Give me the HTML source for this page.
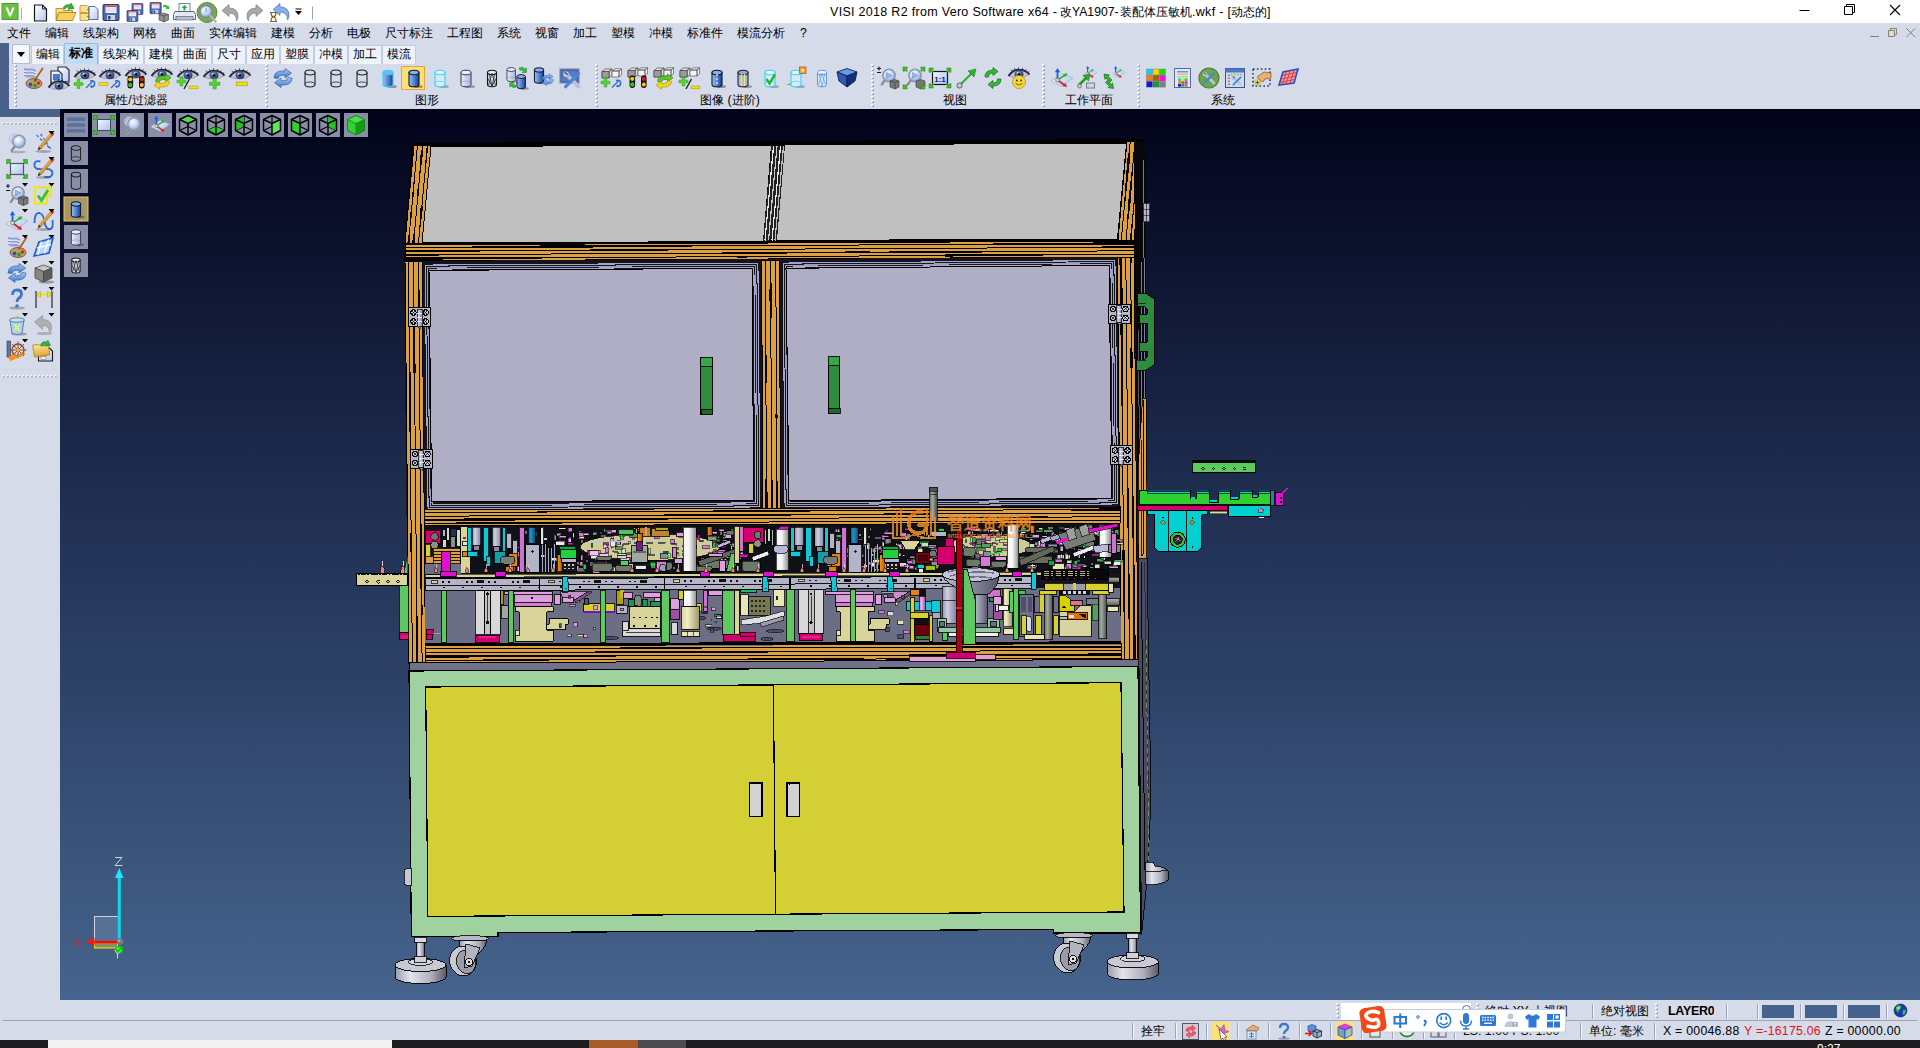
<!DOCTYPE html>
<html lang="zh"><head><meta charset="utf-8"><title>VISI 2018 R2</title><style>
html,body{margin:0;padding:0}
body{width:1920px;height:1048px;position:relative;overflow:hidden;background:#d6dbe9;font-family:"Liberation Sans",sans-serif;font-size:12px}
.b{position:absolute}
.t{position:absolute;white-space:nowrap;overflow:hidden;line-height:1.25}
.grip{width:3px;background-image:repeating-linear-gradient(to bottom,#f6f8fc 0,#f6f8fc 2px,transparent 2px,transparent 4px),repeating-linear-gradient(to bottom,#9aa2ba 0,#9aa2ba 2px,transparent 2px,transparent 4px);background-size:2px 100%,2px 100%;background-position:0 0,1px 1px;background-repeat:no-repeat}
</style></head>
<body>
<svg class="b" style="left:0;top:0" width="1920" height="1048" viewBox="0 0 1920 1048" shape-rendering="crispEdges">
<defs>
<linearGradient id="bgv" x1="0" y1="109" x2="0" y2="1000" gradientUnits="userSpaceOnUse">
<stop offset="0" stop-color="#02031a"/><stop offset="0.5" stop-color="#243458"/><stop offset="1" stop-color="#46648d"/></linearGradient>
<linearGradient id="wm" x1="0" y1="0" x2="0" y2="1"><stop offset="0" stop-color="#f07820"/><stop offset="1" stop-color="#f0a020"/></linearGradient>
<linearGradient id="cylw" x1="0" y1="0" x2="1" y2="0"><stop offset="0" stop-color="#f4f4f4"/><stop offset="0.45" stop-color="#f8f8f8"/><stop offset="1" stop-color="#8c8c8c"/></linearGradient>
<linearGradient id="cyll" x1="0" y1="0" x2="1" y2="0"><stop offset="0" stop-color="#9090a8"/><stop offset="0.35" stop-color="#d0d0e4"/><stop offset="1" stop-color="#8484a0"/></linearGradient>
<linearGradient id="cylg" x1="0" y1="0" x2="1" y2="0"><stop offset="0" stop-color="#b8b8cc"/><stop offset="0.5" stop-color="#8a8aa0"/><stop offset="1" stop-color="#55556a"/></linearGradient>
<linearGradient id="cylb" x1="0" y1="0" x2="1" y2="0"><stop offset="0" stop-color="#1060a0"/><stop offset="0.4" stop-color="#2090c8"/><stop offset="1" stop-color="#0c4878"/></linearGradient>
<linearGradient id="cylo" x1="0" y1="0" x2="1" y2="0"><stop offset="0" stop-color="#f09020"/><stop offset="0.5" stop-color="#e07808"/><stop offset="1" stop-color="#8a4800"/></linearGradient>
<linearGradient id="cylc" x1="0" y1="0" x2="1" y2="0"><stop offset="0" stop-color="#d8d4a0"/><stop offset="0.35" stop-color="#f0ecc0"/><stop offset="1" stop-color="#989468"/></linearGradient>
<linearGradient id="cylp" x1="0" y1="0" x2="1" y2="0"><stop offset="0" stop-color="#c880c8"/><stop offset="0.4" stop-color="#f0b0f0"/><stop offset="1" stop-color="#a060a0"/></linearGradient>
<linearGradient id="cyld" x1="0" y1="0" x2="1" y2="0"><stop offset="0" stop-color="#606860"/><stop offset="0.4" stop-color="#a0a8a0"/><stop offset="1" stop-color="#484c48"/></linearGradient>
<linearGradient id="cylh" x1="0" y1="0" x2="0" y2="1"><stop offset="0" stop-color="#b0b4b0"/><stop offset="0.5" stop-color="#888c88"/><stop offset="1" stop-color="#505450"/></linearGradient>
<linearGradient id="cyl" x1="0" y1="0" x2="1" y2="0"><stop offset="0" stop-color="#9a9aa8"/><stop offset="0.3" stop-color="#e4e4ee"/><stop offset="0.7" stop-color="#b0b0be"/><stop offset="1" stop-color="#5c5c68"/></linearGradient>
</defs>
<rect x="60" y="109" width="1860" height="891" fill="url(#bgv)" />
<polygon points="412,143 1145,139 1146,262 404,262" fill="#000" /><polygon points="431,147 771,145.5 763,241 422,242.5" fill="#c0c0c0" /><polygon points="785,145.5 1126,143.5 1117,238.5 777,240" fill="#c0c0c0" /><polygon points="771.5,145.5 785,145.5 777,240 763,241" fill="#222" /><line x1="773.5" y1="146" x2="765" y2="240.5" stroke="#e8e8e8" stroke-width="1.2" /><line x1="777.0" y1="146" x2="768.5" y2="240.5" stroke="#c8c8c8" stroke-width="1.2" /><line x1="780.5" y1="146" x2="772" y2="240.5" stroke="#e8e8e8" stroke-width="1.2" /><line x1="783.5" y1="146" x2="775" y2="240.5" stroke="#bdbdbd" stroke-width="1.2" /><polygon points="414,145 405,243 422,243 431,146" fill="#dca042" stroke="#000" stroke-width="1" /><polygon points="417.5,145.2 411.7,199.5 413.3,199.5" fill="#000" /><polygon points="412.5,199.5 409.5,217.7 412.2,217.8" fill="#000" /><polygon points="410.8,217.8 407.4,243.0 409.6,243.0" fill="#000" /><line x1="417.5" y1="145.2" x2="408.5" y2="243.0" stroke="#000" stroke-width="1" /><polygon points="422.5,145.5 420.1,157.4 422.7,157.5" fill="#000" /><polygon points="420.3,157.4 422.5,157.5 418.5,189.0" fill="#000" /><polygon points="417.5,189.0 419.4,189.0 415.6,220.4" fill="#000" /><polygon points="415.6,220.4 412.1,243.0 414.9,243.0" fill="#000" /><line x1="422.5" y1="145.5" x2="413.5" y2="243.0" stroke="#000" stroke-width="1" /><polygon points="426.7,145.7 428.3,145.8 421.9,206.0" fill="#000" /><polygon points="420.6,206.0 423.2,206.1 418.5,243.0" fill="#000" /><line x1="427.5" y1="145.8" x2="418.5" y2="243.0" stroke="#000" stroke-width="1" /><polygon points="1127,141 1118,240 1134,240 1143,141" fill="#dca042" stroke="#000" stroke-width="1" /><polygon points="1130.3,141.0 1127.7,158.2 1129.8,158.2" fill="#000" /><polygon points="1127.4,158.2 1130.1,158.2 1121.3,240.0" fill="#000" /><line x1="1130.3" y1="141.0" x2="1121.3" y2="240.0" stroke="#000" stroke-width="1" /><polygon points="1135.0,141.0 1128.5,198.9 1130.9,198.9" fill="#000" /><polygon points="1129.7,198.9 1128.6,199.0 1130.8,199.0" fill="#000" /><polygon points="1128.4,199.0 1131.0,199.0 1126.0,240.0" fill="#000" /><line x1="1135.0" y1="141.0" x2="1126.0" y2="240.0" stroke="#000" stroke-width="1" /><polygon points="1139.7,141.0 1134.6,186.1 1136.6,186.1" fill="#000" /><polygon points="1135.6,186.1 1134.1,194.0 1135.7,194.0" fill="#000" /><polygon points="1134.9,194.0 1129.7,240.0 1131.7,240.0" fill="#000" /><line x1="1139.7" y1="141.0" x2="1130.7" y2="240.0" stroke="#000" stroke-width="1" /><polygon points="405,245 1134,241 1134,257 405,261" fill="#dca042" stroke="#000" stroke-width="1" /><polygon points="405.0,247.5 554.0,245.3 554.0,248.2" fill="#000" /><polygon points="554.0,245.5 554.0,247.9 823.5,245.2" fill="#000" /><polygon points="823.5,245.2 1134.0,242.1 1134.0,245.0" fill="#000" /><line x1="405.0" y1="247.5" x2="1134.0" y2="243.5" stroke="#000" stroke-width="1" /><polygon points="405.0,250.0 405.0,252.4 589.7,250.2" fill="#000" /><polygon points="589.7,249.1 589.7,251.2 896.1,248.5" fill="#000" /><polygon points="896.1,248.5 1134.0,246.2 1134.0,248.1" fill="#000" /><line x1="405.0" y1="251.2" x2="1134.0" y2="247.2" stroke="#000" stroke-width="1" /><polygon points="405.0,253.5 405.0,256.1 515.2,254.2" fill="#000" /><polygon points="515.2,254.2 869.5,251.3 869.5,253.3" fill="#000" /><polygon points="869.5,252.3 910.2,250.6 910.2,253.5" fill="#000" /><polygon points="910.2,250.7 910.2,253.3 1134.0,250.8" fill="#000" /><line x1="405.0" y1="254.8" x2="1134.0" y2="250.8" stroke="#000" stroke-width="1" /><polygon points="405.0,257.0 405.0,259.9 708.2,256.8" fill="#000" /><polygon points="708.2,256.8 737.2,255.8 737.2,257.5" fill="#000" /><polygon points="737.2,255.7 737.2,257.6 945.0,255.5" fill="#000" /><polygon points="945.0,254.4 945.0,256.6 1134.0,254.5" fill="#000" /><line x1="405.0" y1="258.5" x2="1134.0" y2="254.5" stroke="#000" stroke-width="1" /><polygon points="404,261 1136,257 1140,664 408,664" fill="#14141f" /><polygon points="405,261 409,663 425.5,663 422,261" fill="#dca042" stroke="#000" stroke-width="1" /><polygon points="408.5,261.0 408.7,398.7 411.0,398.7" fill="#000" /><polygon points="409.0,398.7 410.6,398.7 411.1,533.1" fill="#000" /><polygon points="410.2,533.1 412.1,533.1 412.4,663.0" fill="#000" /><line x1="408.5" y1="261.0" x2="412.4" y2="663.0" stroke="#000" stroke-width="1" /><polygon points="413.5,261.0 413.4,372.6 415.7,372.6" fill="#000" /><polygon points="414.5,372.6 416.4,663.0 418.1,663.0" fill="#000" /><line x1="413.5" y1="261.0" x2="417.2" y2="663.0" stroke="#000" stroke-width="1" /><polygon points="418.5,261.0 417.7,309.4 420.2,309.4" fill="#000" /><polygon points="418.9,309.4 420.6,604.5 422.5,604.5" fill="#000" /><polygon points="420.6,604.5 422.6,604.5 422.1,663.0" fill="#000" /><line x1="418.5" y1="261.0" x2="422.1" y2="663.0" stroke="#000" stroke-width="1" /><polygon points="1117.5,257 1121,662 1138,662 1134,257" fill="#dca042" stroke="#000" stroke-width="1" /><polygon points="1119.4,257.0 1122.4,257.0 1123.4,537.8" fill="#000" /><polygon points="1123.4,537.8 1122.1,555.1 1125.0,555.1" fill="#000" /><polygon points="1122.4,555.1 1124.7,555.1 1124.5,662.0" fill="#000" /><line x1="1120.9" y1="257.0" x2="1124.5" y2="662.0" stroke="#000" stroke-width="1" /><polygon points="1125.8,257.0 1127.9,589.4 1129.7,589.4" fill="#000" /><polygon points="1127.8,589.4 1129.8,589.4 1129.5,662.0" fill="#000" /><line x1="1125.8" y1="257.0" x2="1129.5" y2="662.0" stroke="#000" stroke-width="1" /><polygon points="1129.6,257.0 1131.6,257.0 1131.0,301.7" fill="#000" /><polygon points="1131.0,301.7 1130.3,367.7 1133.0,367.7" fill="#000" /><polygon points="1131.7,367.7 1133.1,662.0 1135.9,662.0" fill="#000" /><line x1="1130.6" y1="257.0" x2="1134.5" y2="662.0" stroke="#000" stroke-width="1" /><polygon points="761.5,260 763,511 780.5,511 779.5,260" fill="#dca042" stroke="#000" stroke-width="1" /><polygon points="765.2,260.0 764.9,382.5 766.9,382.5" fill="#000" /><polygon points="765.9,382.5 765.4,511.0 767.8,511.0" fill="#000" /><line x1="765.2" y1="260.0" x2="766.6" y2="511.0" stroke="#000" stroke-width="1" /><polygon points="770.5,260.0 769.5,289.5 771.8,289.5" fill="#000" /><polygon points="769.2,289.5 772.1,289.5 770.9,349.2" fill="#000" /><polygon points="770.9,349.2 770.6,511.0 772.9,511.0" fill="#000" /><line x1="770.5" y1="260.0" x2="771.8" y2="511.0" stroke="#000" stroke-width="1" /><polygon points="775.8,260.0 775.6,407.6 777.3,407.6" fill="#000" /><polygon points="776.4,407.6 775.0,418.2 778.0,418.2" fill="#000" /><polygon points="776.5,418.2 775.8,511.0 778.0,511.0" fill="#000" /><line x1="775.8" y1="260.0" x2="776.9" y2="511.0" stroke="#000" stroke-width="1" /><polygon points="424,264 759,262 761,508 427,510" fill="#15151f" /><polygon points="425.1,265.1 757.9,263.1 759.9,506.9 428.1,508.9" fill="none" stroke="#a4a4c4" stroke-width="1.1" /><polygon points="427.2,267.2 755.8,265.2 757.8,504.8 430.2,506.8" fill="none" stroke="#9c9cbc" stroke-width="1.1" /><polygon points="429.1,269.1 753.9,267.1 755.9,502.9 432.1,504.9" fill="none" stroke="#a8a8c8" stroke-width="1.1" /><polygon points="782,262 1116,259.5 1119,505 784,508" fill="#15151f" /><polygon points="783.1,263.1 1114.9,260.6 1117.9,503.9 785.1,506.9" fill="none" stroke="#a4a4c4" stroke-width="1.1" /><polygon points="785.2,265.2 1112.8,262.7 1115.8,501.8 787.2,504.8" fill="none" stroke="#9c9cbc" stroke-width="1.1" /><polygon points="787.1,267.1 1110.9,264.6 1113.9,499.9 789.1,502.9" fill="none" stroke="#a8a8c8" stroke-width="1.1" /><polygon points="429,270.4 752,268.3 753.7,500 431.7,502" fill="#b0aec4" stroke="#000" stroke-width="1" /><polygon points="786,268.3 1109,265.4 1112,498 789,500.8" fill="#b0aec4" stroke="#000" stroke-width="1" /><rect x="700.8" y="357" width="11.5" height="57.5" fill="#2e8c3c" stroke="#000" stroke-width="1" /><rect x="700.8" y="357" width="11.5" height="9" fill="#3aa64a" stroke="#000" stroke-width="0.8" /><rect x="701.3" y="409" width="11.5" height="5.5" fill="#1f6a2a" stroke="#000" stroke-width="0.8" /><rect x="828" y="356" width="11.5" height="57.5" fill="#2e8c3c" stroke="#000" stroke-width="1" /><rect x="828" y="356" width="11.5" height="9" fill="#3aa64a" stroke="#000" stroke-width="0.8" /><rect x="828.5" y="408" width="11.5" height="5.5" fill="#1f6a2a" stroke="#000" stroke-width="0.8" /><rect x="408.8" y="307.5" width="21.5" height="19" fill="#b6b6ca" stroke="#000" stroke-width="1" /><circle cx="413.4" cy="312.5" r="2.7" fill="#c8c8d8" stroke="#000" stroke-width="1"/><path d="M411.8 310.9l3.2 3.2m0 -3.2l-3.2 3.2" stroke="#000" stroke-width=".7"/><circle cx="425.8" cy="312.5" r="2.7" fill="#c8c8d8" stroke="#000" stroke-width="1"/><path d="M424.2 310.9l3.2 3.2m0 -3.2l-3.2 3.2" stroke="#000" stroke-width=".7"/><circle cx="413.4" cy="321.5" r="2.7" fill="#c8c8d8" stroke="#000" stroke-width="1"/><path d="M411.8 319.9l3.2 3.2m0 -3.2l-3.2 3.2" stroke="#000" stroke-width=".7"/><circle cx="425.8" cy="321.5" r="2.7" fill="#c8c8d8" stroke="#000" stroke-width="1"/><path d="M424.2 319.9l3.2 3.2m0 -3.2l-3.2 3.2" stroke="#000" stroke-width=".7"/><rect x="417.0" y="309.0" width="5" height="17" fill="url(#cyll)" stroke="#000" stroke-width="0.7" /><line x1="417.0" y1="313.0" x2="422.0" y2="313.0" stroke="#f0f0f8" stroke-width="0.9" /><line x1="417.0" y1="317.0" x2="422.0" y2="317.0" stroke="#f0f0f8" stroke-width="0.9" /><line x1="417.0" y1="321.0" x2="422.0" y2="321.0" stroke="#f0f0f8" stroke-width="0.9" /><polygon points="417.0,326.0 422.0,326.0 419.8,329.0" fill="#8888a0" stroke="#000" stroke-width="0.6" /><rect x="410.5" y="449" width="21.5" height="19" fill="#b6b6ca" stroke="#000" stroke-width="1" /><circle cx="415.1" cy="454" r="2.7" fill="#c8c8d8" stroke="#000" stroke-width="1"/><path d="M413.5 452.4l3.2 3.2m0 -3.2l-3.2 3.2" stroke="#000" stroke-width=".7"/><circle cx="427.5" cy="454" r="2.7" fill="#c8c8d8" stroke="#000" stroke-width="1"/><path d="M425.9 452.4l3.2 3.2m0 -3.2l-3.2 3.2" stroke="#000" stroke-width=".7"/><circle cx="415.1" cy="463" r="2.7" fill="#c8c8d8" stroke="#000" stroke-width="1"/><path d="M413.5 461.4l3.2 3.2m0 -3.2l-3.2 3.2" stroke="#000" stroke-width=".7"/><circle cx="427.5" cy="463" r="2.7" fill="#c8c8d8" stroke="#000" stroke-width="1"/><path d="M425.9 461.4l3.2 3.2m0 -3.2l-3.2 3.2" stroke="#000" stroke-width=".7"/><rect x="418.7" y="450.5" width="5" height="17" fill="url(#cyll)" stroke="#000" stroke-width="0.7" /><line x1="418.7" y1="454.5" x2="423.7" y2="454.5" stroke="#f0f0f8" stroke-width="0.9" /><line x1="418.7" y1="458.5" x2="423.7" y2="458.5" stroke="#f0f0f8" stroke-width="0.9" /><line x1="418.7" y1="462.5" x2="423.7" y2="462.5" stroke="#f0f0f8" stroke-width="0.9" /><polygon points="418.7,467.5 423.7,467.5 421.5,470.5" fill="#8888a0" stroke="#000" stroke-width="0.6" /><rect x="1108.5" y="304" width="21.5" height="19" fill="#b6b6ca" stroke="#000" stroke-width="1" /><circle cx="1113.1" cy="309" r="2.7" fill="#c8c8d8" stroke="#000" stroke-width="1"/><path d="M1111.5 307.4l3.2 3.2m0 -3.2l-3.2 3.2" stroke="#000" stroke-width=".7"/><circle cx="1125.5" cy="309" r="2.7" fill="#c8c8d8" stroke="#000" stroke-width="1"/><path d="M1123.9 307.4l3.2 3.2m0 -3.2l-3.2 3.2" stroke="#000" stroke-width=".7"/><circle cx="1113.1" cy="318" r="2.7" fill="#c8c8d8" stroke="#000" stroke-width="1"/><path d="M1111.5 316.4l3.2 3.2m0 -3.2l-3.2 3.2" stroke="#000" stroke-width=".7"/><circle cx="1125.5" cy="318" r="2.7" fill="#c8c8d8" stroke="#000" stroke-width="1"/><path d="M1123.9 316.4l3.2 3.2m0 -3.2l-3.2 3.2" stroke="#000" stroke-width=".7"/><rect x="1116.7" y="305.5" width="5" height="17" fill="url(#cyll)" stroke="#000" stroke-width="0.7" /><line x1="1116.7" y1="309.5" x2="1121.7" y2="309.5" stroke="#f0f0f8" stroke-width="0.9" /><line x1="1116.7" y1="313.5" x2="1121.7" y2="313.5" stroke="#f0f0f8" stroke-width="0.9" /><line x1="1116.7" y1="317.5" x2="1121.7" y2="317.5" stroke="#f0f0f8" stroke-width="0.9" /><polygon points="1116.7,322.5 1121.7,322.5 1119.5,325.5" fill="#8888a0" stroke="#000" stroke-width="0.6" /><rect x="1110.5" y="445.5" width="21.5" height="19" fill="#b6b6ca" stroke="#000" stroke-width="1" /><circle cx="1115.1" cy="450.5" r="2.7" fill="#c8c8d8" stroke="#000" stroke-width="1"/><path d="M1113.5 448.9l3.2 3.2m0 -3.2l-3.2 3.2" stroke="#000" stroke-width=".7"/><circle cx="1127.5" cy="450.5" r="2.7" fill="#c8c8d8" stroke="#000" stroke-width="1"/><path d="M1125.9 448.9l3.2 3.2m0 -3.2l-3.2 3.2" stroke="#000" stroke-width=".7"/><circle cx="1115.1" cy="459.5" r="2.7" fill="#c8c8d8" stroke="#000" stroke-width="1"/><path d="M1113.5 457.9l3.2 3.2m0 -3.2l-3.2 3.2" stroke="#000" stroke-width=".7"/><circle cx="1127.5" cy="459.5" r="2.7" fill="#c8c8d8" stroke="#000" stroke-width="1"/><path d="M1125.9 457.9l3.2 3.2m0 -3.2l-3.2 3.2" stroke="#000" stroke-width=".7"/><rect x="1118.7" y="447.0" width="5" height="17" fill="url(#cyll)" stroke="#000" stroke-width="0.7" /><line x1="1118.7" y1="451.0" x2="1123.7" y2="451.0" stroke="#f0f0f8" stroke-width="0.9" /><line x1="1118.7" y1="455.0" x2="1123.7" y2="455.0" stroke="#f0f0f8" stroke-width="0.9" /><line x1="1118.7" y1="459.0" x2="1123.7" y2="459.0" stroke="#f0f0f8" stroke-width="0.9" /><polygon points="1118.7,464.0 1123.7,464.0 1121.5,467.0" fill="#8888a0" stroke="#000" stroke-width="0.6" /><polygon points="424,510 1120,507 1120,523 424,526" fill="#dca042" stroke="#000" stroke-width="1" /><polygon points="424.0,511.7 424.0,513.4 713.4,511.3" fill="#000" /><polygon points="713.4,510.4 713.4,512.2 1021.4,510.0" fill="#000" /><polygon points="1021.4,510.0 1120.0,508.1 1120.0,511.0" fill="#000" /><line x1="424.0" y1="512.5" x2="1120.0" y2="509.5" stroke="#000" stroke-width="1" /><polygon points="424.0,516.2 735.1,514.0 735.1,515.7" fill="#000" /><polygon points="735.1,513.7 735.1,515.9 1120.0,513.2" fill="#000" /><line x1="424.0" y1="516.2" x2="1120.0" y2="513.2" stroke="#000" stroke-width="1" /><polygon points="424.0,518.6 424.0,521.1 1021.1,517.2" fill="#000" /><polygon points="1021.1,516.4 1021.1,518.1 1120.0,516.8" fill="#000" /><line x1="424.0" y1="519.8" x2="1120.0" y2="516.8" stroke="#000" stroke-width="1" /><polygon points="424.0,522.6 424.0,524.3 1037.2,520.8" fill="#000" /><polygon points="1037.2,520.8 1120.0,519.5 1120.0,521.5" fill="#000" /><line x1="424.0" y1="523.5" x2="1120.0" y2="520.5" stroke="#000" stroke-width="1" /><polygon points="425,646 1121,644 1121,661 425,663" fill="#dca042" stroke="#000" stroke-width="1" /><polygon points="425.0,648.7 700.8,647.0 700.8,648.8" fill="#000" /><polygon points="700.8,647.0 700.8,648.8 703.6,647.9" fill="#000" /><polygon points="703.6,647.9 1121.0,645.6 1121.0,647.9" fill="#000" /><line x1="425.0" y1="648.7" x2="1121.0" y2="646.7" stroke="#000" stroke-width="1" /><polygon points="425.0,652.6 750.2,650.5 750.2,652.8" fill="#000" /><polygon points="750.2,650.7 750.2,652.6 1121.0,650.6" fill="#000" /><line x1="425.0" y1="652.6" x2="1121.0" y2="650.6" stroke="#000" stroke-width="1" /><polygon points="425.0,655.1 425.0,657.8 764.7,655.5" fill="#000" /><polygon points="764.7,655.5 1121.0,653.3 1121.0,655.6" fill="#000" /><line x1="425.0" y1="656.4" x2="1121.0" y2="654.4" stroke="#000" stroke-width="1" /><polygon points="425.0,660.3 548.7,658.6 548.7,661.3" fill="#000" /><polygon points="548.7,659.9 863.7,657.7 863.7,660.4" fill="#000" /><polygon points="863.7,659.0 898.8,658.1 898.8,659.8" fill="#000" /><polygon points="898.8,658.1 898.8,659.8 1121.0,658.3" fill="#000" /><line x1="425.0" y1="660.3" x2="1121.0" y2="658.3" stroke="#000" stroke-width="1" /><polygon points="409,663 1139,659.5 1139.5,667 409,671.5" fill="#717189" stroke="#000" stroke-width="1" />
<polygon points="425,590.6 1120,587.5 1121,644.5 425.5,646.5" fill="#6c6e86" /><ellipse cx="714" cy="628.6" rx="8" ry="1.6" fill="#4a4c64" stroke="#000" stroke-width=".5"/><ellipse cx="702" cy="618" rx="4" ry="1.6" fill="#4a4c64" stroke="#000" stroke-width=".5"/><ellipse cx="610" cy="638" rx="9" ry="1.6" fill="#4a4c64" stroke="#000" stroke-width=".5"/><ellipse cx="775" cy="631" rx="9" ry="1.6" fill="#4a4c64" stroke="#000" stroke-width=".5"/><ellipse cx="767" cy="639" rx="6" ry="1.6" fill="#4a4c64" stroke="#000" stroke-width=".5"/><rect x="426" y="629.8" width="7" height="4.2" fill="#d4006e" stroke="#000" stroke-width="0.8" /><rect x="426" y="634.5" width="6" height="4.5" fill="#d4006e" stroke="#000" stroke-width="0.8" /><line x1="433" y1="634" x2="441" y2="633" stroke="#a0a0b8" stroke-width="0.8" /><rect x="441.7" y="590.7" width="5.0" height="52.1" fill="#60c860" stroke="#000" stroke-width="0.8" /><rect x="475" y="590.7" width="9.5" height="44.1" fill="#d8d8d8" stroke="#000" stroke-width="0.8" /><rect x="484.5" y="590.7" width="6.2" height="44.1" fill="#c4c4c8" stroke="#000" stroke-width="0.8" /><rect x="490.7" y="590.7" width="9.3" height="44.1" fill="#d8d8d8" stroke="#000" stroke-width="0.8" /><circle cx="487.5" cy="594" r="1.6" fill="#111"/><circle cx="487.5" cy="622.5" r="1.6" fill="#111"/><line x1="487.5" y1="596" x2="487.5" y2="621" stroke="#000" stroke-width="0.7" /><rect x="475.8" y="635.4" width="23.6" height="7.4" fill="#d4006e" stroke="#000" stroke-width="0.8" /><rect x="478.5" y="636.2" width="17.5" height="2.2" fill="#e8208a" /><rect x="500.6" y="590.7" width="3.1" height="13.7" fill="#a8a010" stroke="#000" stroke-width="0.8" /><rect x="501" y="605.6" width="7" height="13.0" fill="#9aaa9a" stroke="#000" stroke-width="0.8" /><rect x="504.3" y="591" width="47.7" height="3.4" fill="#e0a0e0" stroke="#000" stroke-width="0.8" /><rect x="514.3" y="594.4" width="37.7" height="7.6" fill="#d8a0d8" stroke="#000" stroke-width="0.8" /><rect x="514.3" y="602.3" width="37.2" height="3.7" fill="#d878d8" stroke="#000" stroke-width="0.8" /><circle cx="532.3" cy="598" r="1" fill="#111"/><rect x="554.0" y="594.5" width="6.0" height="9.9" fill="#e0a0e0" stroke="#000" stroke-width="0.8" /><rect x="562.7" y="597.5" width="11.1" height="4.5" fill="#e0a0e0" stroke="#000" stroke-width="0.8" /><polygon points="560.0,592 589.3,591 574.3,600 573.8,597.5 562.6999999999999,597.5" fill="#c890c8" stroke="#000" stroke-width="0.7" /><polygon points="574.3,600 589.3,591 592.3,592 576.3,603" fill="#705878" stroke="#000" stroke-width="0.6" /><path d="M515.0 606.8H553.4V611.8H546.5999999999999V630.4H553.4V641H515.0V630.4H519.0V611.8H515.0Z" fill="#d8d49a" stroke="#000" stroke-width="0.9"/><rect x="515.0" y="630.4" width="4.0" height="4.6" fill="#e8e4b4" stroke="#000" stroke-width="0.8" /><path d="M549.0 618.6H568.0V624H565.3V629.8H546.5999999999999V624H549.0Z" fill="#d8d49a" stroke="#000" stroke-width="0.9"/><rect x="508.7" y="590.7" width="4.6" height="52.1" fill="#60c860" stroke="#000" stroke-width="0.8" /><rect x="562" y="576.5" width="5.6" height="15.5" fill="#10c8d8" stroke="#000" stroke-width="0.8" /><rect x="583.8" y="603.7" width="31.0" height="7.3" fill="#d8d030" stroke="#000" stroke-width="0.8" /><rect x="583.8" y="611.2" width="31.0" height="1.6" fill="#7010d0" /><rect x="584" y="598" width="4" height="6" fill="#50526a" stroke="#000" stroke-width="0.8" /><rect x="600" y="590" width="5" height="52.5" fill="#60c860" stroke="#000" stroke-width="0.8" /><rect x="616.7" y="590" width="6.8" height="14.4" fill="#a8a010" stroke="#000" stroke-width="0.8" /><rect x="620" y="590" width="3.5" height="8" fill="#c8b820" /><rect x="616" y="605" width="11.8" height="8" fill="#b4b4c8" stroke="#000" stroke-width="0.8" /><circle cx="622" cy="609.5" r="1.5" fill="none" stroke="#000" stroke-width=".7"/><rect x="623.5" y="592" width="9.3" height="6" fill="#e0a0e0" stroke="#000" stroke-width="0.8" /><rect x="643" y="592" width="17" height="5.5" fill="#e0a0e0" stroke="#000" stroke-width="0.8" /><rect x="654" y="597.5" width="6" height="3.5" fill="#e0a0e0" stroke="#000" stroke-width="0.8" /><rect x="628.5" y="599.5" width="5.5" height="6.5" fill="#10a050" stroke="#000" stroke-width="0.8" /><rect x="642" y="599.5" width="5.5" height="6.5" fill="#10a050" stroke="#000" stroke-width="0.8" /><rect x="650" y="601.5" width="10" height="5.0" fill="#10a050" stroke="#000" stroke-width="0.8" /><rect x="634.5" y="595" width="7" height="11" fill="#808880" stroke="#000" stroke-width="0.7" rx="3"/><rect x="633" y="606" width="10" height="5" fill="#e0a0e0" stroke="#000" stroke-width="0.8" /><rect x="629.7" y="606.8" width="30.3" height="21.7" fill="#d8d49a" stroke="#000" stroke-width="0.8" /><rect x="633" y="616.5" width="1.6" height="1.6" fill="#111" /><rect x="639" y="616.5" width="1.6" height="1.6" fill="#111" /><rect x="645" y="616.5" width="1.6" height="1.6" fill="#111" /><rect x="651" y="616.5" width="1.6" height="1.6" fill="#111" /><rect x="656" y="616.5" width="1.6" height="1.6" fill="#111" /><rect x="633" y="625" width="1.6" height="1.6" fill="#111" /><rect x="644" y="625" width="1.6" height="1.6" fill="#111" /><rect x="655" y="625" width="1.6" height="1.6" fill="#111" /><rect x="622.9" y="628.5" width="37.1" height="7.5" fill="#d8d8d8" stroke="#000" stroke-width="0.8" /><rect x="622.9" y="621.7" width="5.1" height="8.3" fill="#d8d8d8" stroke="#000" stroke-width="0.8" /><line x1="626" y1="632" x2="660" y2="632" stroke="#000" stroke-width="0.7" /><rect x="661" y="590" width="8.4" height="52" fill="#60c860" stroke="#000" stroke-width="0.8" /><rect x="670.6" y="598" width="8.7" height="11.3" fill="#e0a0e0" stroke="#000" stroke-width="0.8" /><rect x="670.6" y="609.3" width="8.4" height="9.7" fill="#a050a0" stroke="#000" stroke-width="0.8" /><rect x="671" y="622" width="6" height="12" fill="#d8d8d8" stroke="#000" stroke-width="0.8" /><rect x="678.7" y="590" width="4.3" height="9.4" fill="#d8d030" stroke="#000" stroke-width="0.8" /><rect x="696.7" y="603" width="5.0" height="8.8" fill="#d8d030" stroke="#000" stroke-width="0.8" /><rect x="683.7" y="590" width="13.0" height="16.8" fill="url(#cylw)" stroke="#000" stroke-width="0.7" /><rect x="681" y="606.8" width="18.8" height="22.4" fill="url(#cylc)" stroke="#000" stroke-width="0.8" /><rect x="681" y="631" width="18.8" height="5" fill="#e8e4b4" stroke="#000" stroke-width="0.8" /><line x1="687" y1="631" x2="687" y2="636" stroke="#000" stroke-width="0.6" /><line x1="693.5" y1="631" x2="693.5" y2="636" stroke="#000" stroke-width="0.6" /><rect x="703" y="590" width="4.9" height="21.8" fill="#d070d0" stroke="#000" stroke-width="0.8" /><rect x="708.5" y="590" width="14.3" height="5" fill="#e0a0e0" stroke="#000" stroke-width="0.8" /><rect x="716" y="614.3" width="5.5" height="3.7" fill="#f0f0f0" stroke="#000" stroke-width="0.8" /><rect x="722.8" y="590" width="11.2" height="44" fill="#60c860" stroke="#000" stroke-width="0.8" /><rect x="734.5" y="590" width="4.5" height="45.4" fill="#d8d49a" stroke="#000" stroke-width="0.8" /><rect x="723.4" y="634" width="31.6" height="7" fill="#d4006e" stroke="#000" stroke-width="0.8" /><rect x="740" y="632" width="15" height="4" fill="#d4006e" stroke="#000" stroke-width="0.8" /><rect x="740" y="589.5" width="16" height="3.1" fill="#10c060" stroke="#000" stroke-width="0.8" /><rect x="740.7" y="594.4" width="7.3" height="21.1" fill="#e8e4b4" stroke="#000" stroke-width="0.8" /><rect x="748.8" y="596" width="21.2" height="19.5" fill="#787850" stroke="#000" stroke-width="0.8" /><rect x="751" y="600" width="1.5" height="1.5" fill="#222" /><rect x="751" y="605" width="1.5" height="1.5" fill="#222" /><rect x="751" y="610" width="1.5" height="1.5" fill="#222" /><rect x="755" y="600" width="1.5" height="1.5" fill="#222" /><rect x="755" y="605" width="1.5" height="1.5" fill="#222" /><rect x="755" y="610" width="1.5" height="1.5" fill="#222" /><rect x="759" y="600" width="1.5" height="1.5" fill="#222" /><rect x="759" y="605" width="1.5" height="1.5" fill="#222" /><rect x="759" y="610" width="1.5" height="1.5" fill="#222" /><rect x="763" y="600" width="1.5" height="1.5" fill="#222" /><rect x="763" y="605" width="1.5" height="1.5" fill="#222" /><rect x="763" y="610" width="1.5" height="1.5" fill="#222" /><polygon points="741,620 766,616 784,611 784,616 762,623 741,625" fill="#e0e0e0" stroke="#000" stroke-width="0.6" /><polygon points="760,623 783.6,616 783.6,620 762,627" fill="#9a9aa8" stroke="#000" stroke-width="0.6" /><rect x="773" y="589.5" width="11.8" height="17.3" fill="#e8e4b4" stroke="#000" stroke-width="0.8" /><rect x="776" y="596" width="2" height="4" fill="#222" /><rect x="786" y="589" width="8" height="52" fill="#60c860" stroke="#000" stroke-width="0.8" /><rect x="798.5" y="589" width="9.5" height="44.1" fill="#d8d8d8" stroke="#000" stroke-width="0.8" /><rect x="808.0" y="589" width="6.2" height="44.1" fill="#c4c4c8" stroke="#000" stroke-width="0.8" /><rect x="814.2" y="589" width="9.3" height="44.1" fill="#d8d8d8" stroke="#000" stroke-width="0.8" /><circle cx="811.0" cy="594" r="1.6" fill="#111"/><circle cx="811.0" cy="622.5" r="1.6" fill="#111"/><line x1="811.0" y1="596" x2="811.0" y2="621" stroke="#000" stroke-width="0.7" /><rect x="799.3" y="633.5" width="23.6" height="7.4" fill="#d4006e" stroke="#000" stroke-width="0.8" /><rect x="802.0" y="636.2" width="17.5" height="2.2" fill="#e8208a" /><rect x="825.7" y="591" width="47.7" height="3.4" fill="#e0a0e0" stroke="#000" stroke-width="0.8" /><rect x="835.7" y="594.4" width="37.7" height="7.6" fill="#d8a0d8" stroke="#000" stroke-width="0.8" /><rect x="835.7" y="602.3" width="37.2" height="3.7" fill="#d878d8" stroke="#000" stroke-width="0.8" /><circle cx="853.7" cy="598" r="1" fill="#111"/><rect x="875.4" y="594.5" width="6.0" height="9.9" fill="#e0a0e0" stroke="#000" stroke-width="0.8" /><rect x="884.1" y="597.5" width="11.1" height="4.5" fill="#e0a0e0" stroke="#000" stroke-width="0.8" /><polygon points="881.4000000000001,592 910.7,591 895.7,600 895.2,597.5 884.1,597.5" fill="#c890c8" stroke="#000" stroke-width="0.7" /><polygon points="895.7,600 910.7,591 913.7,592 897.7,603" fill="#705878" stroke="#000" stroke-width="0.6" /><path d="M836.4000000000001 606.8H874.8000000000001V611.8H868.0V630.4H874.8000000000001V641H836.4000000000001V630.4H840.4000000000001V611.8H836.4000000000001Z" fill="#d8d49a" stroke="#000" stroke-width="0.9"/><rect x="836.4" y="630.4" width="4.0" height="4.6" fill="#e8e4b4" stroke="#000" stroke-width="0.8" /><path d="M870.4000000000001 618.6H889.4000000000001V624H886.7V629.8H868.0V624H870.4000000000001Z" fill="#d8d49a" stroke="#000" stroke-width="0.9"/><rect x="850" y="589" width="5.5" height="52" fill="#60c860" stroke="#000" stroke-width="0.8" /><rect x="906.4" y="601.9" width="33.6" height="8.7" fill="#10c8d8" stroke="#000" stroke-width="0.8" /><rect x="910.7" y="589.5" width="8.7" height="6.2" fill="#e88010" stroke="#000" stroke-width="0.8" /><rect x="919.4" y="588" width="5.6" height="8" fill="#101014" stroke="#000" stroke-width="0.8" /><rect x="919.4" y="596.3" width="5.6" height="14.3" fill="url(#cylp)" stroke="#000" stroke-width="0.7" /><rect x="910" y="597" width="4.5" height="45.8" fill="#d8d030" stroke="#000" stroke-width="0.8" /><rect x="910" y="612.4" width="18" height="5.6" fill="#d8d030" stroke="#000" stroke-width="0.8" /><rect x="914.5" y="624.2" width="14.9" height="11.2" fill="#6a0010" stroke="#000" stroke-width="0.8" /><rect x="915.7" y="635.4" width="16.1" height="3.6" fill="#308030" stroke="#000" stroke-width="0.8" /><rect x="914.5" y="618" width="14.5" height="6" fill="#101014" stroke="#000" stroke-width="0.8" /><rect x="929.4" y="615" width="2.6" height="26" fill="#d8d030" stroke="#000" stroke-width="0.8" /><rect x="932" y="603" width="8" height="15" fill="#a8a8c0" stroke="#000" stroke-width="0.8" /><rect x="942.4" y="587.6" width="13.6" height="35.4" fill="url(#cyll)" stroke="#000" stroke-width="0.7" /><rect x="975" y="594.4" width="12.7" height="28.6" fill="url(#cylg)" stroke="#000" stroke-width="0.7" /><rect x="931" y="600" width="9" height="12" fill="#10c8d8" stroke="#000" stroke-width="0.8" /><rect x="937.4" y="618.6" width="8.6" height="12.4" fill="#90c8a0" stroke="#000" stroke-width="0.8" /><rect x="939.5" y="621" width="4.5" height="5" fill="#6c6e86" stroke="#000" stroke-width="0.8" /><rect x="987.7" y="618.6" width="11.8" height="12.4" fill="#90c8a0" stroke="#000" stroke-width="0.8" /><rect x="990" y="621" width="6" height="5" fill="#6c6e86" stroke="#000" stroke-width="0.8" /><rect x="938" y="627" width="62" height="5" fill="#90c8a0" stroke="#000" stroke-width="0.8" /><rect x="942" y="632" width="5" height="8" fill="#60c860" stroke="#000" stroke-width="0.8" /><rect x="948" y="632" width="50" height="4" fill="#f0f0f0" stroke="#000" stroke-width="0.8" /><rect x="987" y="589.5" width="13.7" height="7.5" fill="#d070d0" stroke="#000" stroke-width="0.8" /><rect x="993.3" y="597" width="8.7" height="22" fill="#a050a0" stroke="#000" stroke-width="0.8" /><rect x="993" y="596" width="8" height="8" fill="#e0a0e0" stroke="#000" stroke-width="0.8" /><rect x="989" y="597" width="4" height="4" fill="#10a050" stroke="#000" stroke-width="0.8" /><rect x="1002" y="587.6" width="3.7" height="9.4" fill="#d8d030" stroke="#000" stroke-width="0.8" /><rect x="1003" y="587" width="9" height="39.7" fill="url(#cylc)" stroke="#000" stroke-width="0.7" /><rect x="1003.5" y="628" width="9.5" height="6" fill="#e8e4b4" stroke="#000" stroke-width="0.8" /><rect x="997" y="605" width="11" height="5" fill="#f4f4f4" stroke="#000" stroke-width="0.8" /><rect x="995.5" y="604" width="3.0" height="7" fill="#d0d0d8" stroke="#000" stroke-width="0.8" /><rect x="1009.4" y="591.6" width="3.6" height="20.4" fill="#50d060" stroke="#000" stroke-width="0.8" /><rect x="1013.7" y="587.6" width="5.0" height="52.1" fill="#60c860" stroke="#000" stroke-width="0.8" /><rect x="1018.7" y="590" width="6.3" height="4" fill="#30d050" stroke="#000" stroke-width="0.8" /><rect x="1019.3" y="594" width="13.7" height="42.6" fill="#70708a" stroke="#000" stroke-width="0.8" /><rect x="1021" y="597" width="5" height="15" fill="#50506a" /><rect x="1028" y="597" width="4" height="15" fill="#50506a" /><rect x="1044.8" y="583.3" width="63.9" height="6.7" fill="#d8d030" stroke="#000" stroke-width="0.8" /><rect x="1063" y="583.3" width="22" height="6.7" fill="#9a9aa8" stroke="#000" stroke-width="0.8" /><rect x="1072.5" y="583.3" width="3.0" height="6.7" fill="#d8d030" /><rect x="1039.8" y="590.7" width="16.7" height="3.7" fill="#d8d030" stroke="#000" stroke-width="0.8" /><rect x="1092.5" y="590.7" width="16.8" height="3.7" fill="#d8d030" stroke="#000" stroke-width="0.8" /><rect x="1059" y="590.7" width="30" height="3.7" fill="#101014" stroke="#000" stroke-width="0.8" /><rect x="1063" y="591.4" width="3" height="2.4" fill="#d0d0d8" /><rect x="1068" y="591.4" width="3" height="2.4" fill="#d0d0d8" /><rect x="1073" y="591.4" width="3" height="2.4" fill="#d0d0d8" /><rect x="1078" y="591.4" width="3" height="2.4" fill="#d0d0d8" /><rect x="1083" y="591.4" width="3" height="2.4" fill="#d0d0d8" /><rect x="1044" y="594.4" width="8.8" height="45.3" fill="url(#cyld)" stroke="#000" stroke-width="0.7" /><rect x="1098" y="594.4" width="8.8" height="44.1" fill="url(#cyld)" stroke="#000" stroke-width="0.7" /><rect x="1021" y="615" width="5" height="19" fill="#d8d030" stroke="#000" stroke-width="0.8" /><rect x="1035.5" y="615" width="5.5" height="19" fill="#d8d030" stroke="#000" stroke-width="0.8" /><rect x="1053.4" y="615" width="5.0" height="19.8" fill="#d8d030" stroke="#000" stroke-width="0.8" /><rect x="1034" y="596" width="8" height="16" fill="#70708a" stroke="#000" stroke-width="0.8" /><rect x="1053" y="596" width="5" height="16" fill="#70708a" stroke="#000" stroke-width="0.8" /><polygon points="1039,594.4 1044,594.4 1044,612 1039,612" fill="#d8d030" stroke="#000" stroke-width="0.6" /><rect x="1026.5" y="616" width="4.5" height="15" fill="#d8d8e0" stroke="#000" stroke-width="0.6" rx="1.5"/><rect x="1024" y="634.5" width="20" height="4.5" fill="#e8e4b4" stroke="#000" stroke-width="0.8" /><polygon points="1059,595.7 1066,595.7 1074,603 1074,611.8 1059,611.8" fill="#d8d000" stroke="#000" stroke-width="0.7" /><polygon points="1062,608 1064,605.5 1066,608" fill="#111" /><polygon points="1059,611.8 1074,611.8 1080,605.6 1091.3,605.6 1091.3,636.6 1059,636.6" fill="#d8d4a0" stroke="#000" stroke-width="0.8" /><rect x="1070.8" y="600.6" width="11.2" height="5.0" fill="#e07878" stroke="#000" stroke-width="0.8" /><rect x="1067.7" y="612.4" width="19.9" height="7.5" fill="#e07010" stroke="#000" stroke-width="0.8" /><rect x="1069" y="615" width="5" height="3" fill="#e8e8e8" /><polygon points="1078,614 1086,614 1086,618.5" fill="#111" /><rect x="1059.5" y="616" width="7.5" height="3" fill="#b8b8d0" stroke="#000" stroke-width="0.8" /><rect x="1086" y="598" width="12" height="6" fill="#787c8c" stroke="#000" stroke-width="0.8" /><rect x="1092" y="604" width="6" height="16" fill="#50a060" stroke="#000" stroke-width="0.5" /><rect x="1106" y="598.8" width="13.8" height="6.8" fill="url(#cylh)" stroke="#000" stroke-width="0.7" /><rect x="1108" y="577" width="11" height="5.5" fill="url(#cylh)" stroke="#000" stroke-width="0.7" /><rect x="1108.7" y="583" width="4.3" height="9" fill="#e8e4b4" stroke="#000" stroke-width="0.8" /><rect x="1107" y="606" width="11" height="5" fill="#e8e4b4" stroke="#000" stroke-width="0.8" /><polygon points="425,643.3 1121,641.3 1121,644.2 425,646.2" fill="#000" /><polygon points="425,526.5 1120,523.5 1120,573 425,575" fill="#101018" /><ellipse cx="650" cy="547" rx="70" ry="13.5" fill="#d0cc98" stroke="#000" stroke-width=".8"/><ellipse cx="650" cy="549" rx="40" ry="6" fill="none" stroke="#555" stroke-width="2" stroke-dasharray="7 5"/><ellipse cx="990" cy="546" rx="42" ry="11" fill="#d0cc98" stroke="#000" stroke-width=".8"/><ellipse cx="985" cy="548" rx="26" ry="5" fill="none" stroke="#555" stroke-width="2" stroke-dasharray="6 5"/><rect x="591.0" y="550.5" width="9" height="3" fill="#d878d8" stroke="#000" stroke-width="0.5" /><rect x="595.7" y="551.7" width="2" height="4" fill="#d8d49a" stroke="#000" stroke-width="0.5" /><rect x="605.9" y="560.3" width="1.5" height="3" fill="#707868" stroke="#000" stroke-width="0.5" /><rect x="564.9" y="549.6" width="7" height="5" fill="#d878d8" stroke="#000" stroke-width="0.5" /><rect x="603.0" y="543.6" width="4" height="5" fill="#f0c0f0" stroke="#000" stroke-width="0.5" /><rect x="605.3" y="561.9" width="1.5" height="1.5" fill="#d878d8" stroke="#000" stroke-width="0.5" /><rect x="569.0" y="537.2" width="1.5" height="3" fill="#889088" stroke="#000" stroke-width="0.5" /><rect x="590.0" y="562.4" width="5" height="2" fill="#707868" stroke="#000" stroke-width="0.5" /><rect x="595.0" y="554.8" width="4" height="5" fill="#e070e0" stroke="#000" stroke-width="0.5" /><rect x="587.2" y="550.2" width="9" height="1.5" fill="#e070e0" stroke="#000" stroke-width="0.5" /><rect x="579.5" y="536.6" width="3" height="1.5" fill="#e010d0" stroke="#000" stroke-width="0.5" /><rect x="600.3" y="531.5" width="1.5" height="2.5" fill="#50a060" stroke="#000" stroke-width="0.5" /><rect x="558.6" y="527.7" width="7" height="1.5" fill="#e8e4b4" stroke="#000" stroke-width="0.5" /><rect x="570.6" y="565.2" width="4" height="3" fill="#50a060" stroke="#000" stroke-width="0.5" /><rect x="588.3" y="550.8" width="2" height="5" fill="#e070e0" stroke="#000" stroke-width="0.5" /><rect x="581.3" y="540.1" width="1.5" height="3" fill="#c8e0c0" stroke="#000" stroke-width="0.5" /><rect x="564.3" y="556.7" width="1.5" height="1.5" fill="#d878d8" stroke="#000" stroke-width="0.5" /><rect x="619.9" y="534.5" width="5" height="2" fill="#d878d8" stroke="#000" stroke-width="0.5" /><rect x="595.7" y="568.4" width="9" height="2" fill="#e0a0e0" stroke="#000" stroke-width="0.5" /><rect x="607.1" y="531.9" width="4" height="2" fill="#e0a0e0" stroke="#000" stroke-width="0.5" /><rect x="575.7" y="567.8" width="9" height="4" fill="#707868" stroke="#000" stroke-width="0.5" /><rect x="636.8" y="527.8" width="2" height="3" fill="#c8e0c0" stroke="#000" stroke-width="0.5" /><rect x="556.5" y="533.1" width="4" height="2.5" fill="#e0a0e0" stroke="#000" stroke-width="0.5" /><rect x="617.9" y="540.8" width="3" height="3" fill="#e010d0" stroke="#000" stroke-width="0.5" /><rect x="559.2" y="535.8" width="7" height="2" fill="#e0a0e0" stroke="#000" stroke-width="0.5" /><rect x="603.5" y="542.6" width="4" height="2" fill="#d8d49a" stroke="#000" stroke-width="0.5" /><rect x="622.9" y="532.7" width="4" height="2" fill="#20d040" stroke="#000" stroke-width="0.5" /><rect x="579.1" y="536.6" width="5" height="2" fill="#e8e4b4" stroke="#000" stroke-width="0.5" /><rect x="566.3" y="553.4" width="5" height="2" fill="#50a060" stroke="#000" stroke-width="0.5" /><rect x="627.1" y="552.3" width="4" height="1.5" fill="#c8e0c0" stroke="#000" stroke-width="0.5" /><rect x="562.2" y="548.5" width="3" height="2" fill="#50a060" stroke="#000" stroke-width="0.5" /><rect x="574.6" y="561.6" width="5" height="3" fill="#707868" stroke="#000" stroke-width="0.5" /><rect x="596.7" y="566.0" width="1.5" height="2" fill="#9a9ab8" stroke="#000" stroke-width="0.5" /><rect x="593.3" y="554.4" width="5" height="4" fill="#e010d0" stroke="#000" stroke-width="0.5" /><rect x="576.5" y="565.5" width="2" height="5" fill="#e0a0e0" stroke="#000" stroke-width="0.5" /><rect x="558.8" y="544.3" width="2" height="1.5" fill="#d878d8" stroke="#000" stroke-width="0.5" /><rect x="567.8" y="542.5" width="5" height="2" fill="#e010d0" stroke="#000" stroke-width="0.5" /><rect x="583.4" y="564.4" width="3" height="5" fill="#20d040" stroke="#000" stroke-width="0.5" /><rect x="602.5" y="565.8" width="4" height="2.5" fill="#707868" stroke="#000" stroke-width="0.5" /><rect x="633.9" y="527.9" width="7" height="1.5" fill="#d8d49a" stroke="#000" stroke-width="0.5" /><rect x="558.7" y="540.1" width="2" height="1.5" fill="#e010d0" stroke="#000" stroke-width="0.5" /><rect x="591.1" y="542.4" width="1.5" height="5" fill="#20d040" stroke="#000" stroke-width="0.5" /><rect x="619.6" y="565.4" width="3" height="1.5" fill="#d8d49a" stroke="#000" stroke-width="0.5" /><rect x="628.7" y="563.6" width="4" height="1.5" fill="#d8d49a" stroke="#000" stroke-width="0.5" /><rect x="601.1" y="553.2" width="4" height="3" fill="#e0a0e0" stroke="#000" stroke-width="0.5" /><rect x="604.1" y="530.4" width="7" height="1.5" fill="#e070e0" stroke="#000" stroke-width="0.5" /><rect x="626.9" y="557.6" width="4" height="5" fill="#d878d8" stroke="#000" stroke-width="0.5" /><rect x="590.0" y="562.2" width="1.5" height="4" fill="#e0a0e0" stroke="#000" stroke-width="0.5" /><rect x="579.1" y="530.7" width="1.5" height="2" fill="#c8e0c0" stroke="#000" stroke-width="0.5" /><rect x="594.8" y="552.8" width="4" height="2.5" fill="#e0a0e0" stroke="#000" stroke-width="0.5" /><rect x="583.9" y="533.0" width="5" height="2" fill="#f0c0f0" stroke="#000" stroke-width="0.5" /><rect x="616.3" y="541.4" width="4" height="3" fill="#9a9ab8" stroke="#000" stroke-width="0.5" /><rect x="580.5" y="555.0" width="2" height="5" fill="#e0a0e0" stroke="#000" stroke-width="0.5" /><rect x="620.5" y="558.7" width="2" height="2" fill="#50a060" stroke="#000" stroke-width="0.5" /><rect x="571.4" y="565.7" width="2" height="2" fill="#20d040" stroke="#000" stroke-width="0.5" /><rect x="594.7" y="562.2" width="9" height="1.5" fill="#e010d0" stroke="#000" stroke-width="0.5" /><rect x="632.8" y="538.6" width="2" height="1.5" fill="#d878d8" stroke="#000" stroke-width="0.5" /><rect x="592.6" y="565.9" width="9" height="3" fill="#50a060" stroke="#000" stroke-width="0.5" /><rect x="605.6" y="547.7" width="3" height="5" fill="#d878d8" stroke="#000" stroke-width="0.5" /><rect x="579.9" y="561.8" width="3" height="4" fill="#d878d8" stroke="#000" stroke-width="0.5" /><rect x="610.0" y="538.8" width="3" height="2.5" fill="#e0a0e0" stroke="#000" stroke-width="0.5" /><rect x="606.8" y="544.0" width="2" height="1.5" fill="#e070e0" stroke="#000" stroke-width="0.5" /><rect x="572.9" y="532.9" width="1.5" height="5" fill="#c8e0c0" stroke="#000" stroke-width="0.5" /><rect x="590.5" y="553.5" width="7" height="5" fill="#e8e8f0" stroke="#000" stroke-width="0.5" /><rect x="633.5" y="555.7" width="2" height="3" fill="#e070e0" stroke="#000" stroke-width="0.5" /><rect x="568.0" y="527.5" width="4" height="4" fill="#d878d8" stroke="#000" stroke-width="0.5" /><rect x="568.0" y="538.4" width="3" height="4" fill="#f0c0f0" stroke="#000" stroke-width="0.5" /><rect x="586.1" y="560.3" width="2" height="1.5" fill="#e0a0e0" stroke="#000" stroke-width="0.5" /><rect x="631.3" y="557.3" width="2" height="3" fill="#d878d8" stroke="#000" stroke-width="0.5" /><rect x="569.5" y="564.3" width="1.5" height="3" fill="#889088" stroke="#000" stroke-width="0.5" /><rect x="592.0" y="554.4" width="2" height="1.5" fill="#c8e0c0" stroke="#000" stroke-width="0.5" /><rect x="570.9" y="564.8" width="1.5" height="2.5" fill="#889088" stroke="#000" stroke-width="0.5" /><rect x="575.0" y="557.2" width="1.5" height="2.5" fill="#e010d0" stroke="#000" stroke-width="0.5" /><rect x="556.1" y="541.4" width="4" height="2.5" fill="#d8d49a" stroke="#000" stroke-width="0.5" /><rect x="630.3" y="536.2" width="9" height="1.5" fill="#e0a0e0" stroke="#000" stroke-width="0.5" /><rect x="620.2" y="534.3" width="3" height="5" fill="#20d040" stroke="#000" stroke-width="0.5" /><rect x="592.5" y="569.0" width="7" height="4" fill="#d878d8" stroke="#000" stroke-width="0.5" /><rect x="632.4" y="547.7" width="7" height="1.5" fill="#9a9ab8" stroke="#000" stroke-width="0.5" /><rect x="589.9" y="550.5" width="9" height="5" fill="#f0c0f0" stroke="#000" stroke-width="0.5" /><rect x="596.9" y="562.4" width="5" height="2.5" fill="#707868" stroke="#000" stroke-width="0.5" /><rect x="609.4" y="567.1" width="9" height="4" fill="#e8e4b4" stroke="#000" stroke-width="0.5" /><rect x="578.6" y="532.9" width="5" height="4" fill="#e070e0" stroke="#000" stroke-width="0.5" /><rect x="601.1" y="535.4" width="5" height="1.5" fill="#e0a0e0" stroke="#000" stroke-width="0.5" /><rect x="603.8" y="528.2" width="1.5" height="4" fill="#50a060" stroke="#000" stroke-width="0.5" /><rect x="598.7" y="568.6" width="1.5" height="3" fill="#e010d0" stroke="#000" stroke-width="0.5" /><rect x="611.0" y="529.8" width="5" height="3" fill="#e0a0e0" stroke="#000" stroke-width="0.5" /><rect x="630.3" y="560.6" width="4" height="2.5" fill="#9a9ab8" stroke="#000" stroke-width="0.5" /><rect x="592.7" y="532.3" width="4" height="3" fill="#889088" stroke="#000" stroke-width="0.5" /><rect x="562.1" y="544.6" width="1.5" height="2.5" fill="#20d040" stroke="#000" stroke-width="0.5" /><rect x="612.0" y="568.0" width="1.5" height="2" fill="#20d040" stroke="#000" stroke-width="0.5" /><rect x="619.7" y="555.8" width="3" height="5" fill="#e8e8f0" stroke="#000" stroke-width="0.5" /><rect x="621.4" y="548.5" width="4" height="5" fill="#c8e0c0" stroke="#000" stroke-width="0.5" /><rect x="682.2" y="553.3" width="7" height="2" fill="#e0a0e0" stroke="#000" stroke-width="0.5" /><rect x="599.3" y="553.7" width="9" height="4" fill="#f0c0f0" stroke="#000" stroke-width="0.5" /><rect x="650.8" y="562.7" width="5" height="5" fill="#e8e4b4" stroke="#000" stroke-width="0.5" /><rect x="650.0" y="562.2" width="5" height="4" fill="#20d040" stroke="#000" stroke-width="0.5" /><rect x="620.3" y="557.9" width="9" height="2.5" fill="#f0c0f0" stroke="#000" stroke-width="0.5" /><rect x="628.6" y="541.3" width="2" height="2" fill="#e8e4b4" stroke="#000" stroke-width="0.5" /><rect x="685.8" y="534.2" width="2" height="2" fill="#e010d0" stroke="#000" stroke-width="0.5" /><rect x="622.9" y="532.8" width="9" height="3" fill="#20d040" stroke="#000" stroke-width="0.5" /><rect x="617.1" y="553.5" width="9" height="1.5" fill="#c8e0c0" stroke="#000" stroke-width="0.5" /><rect x="617.1" y="555.6" width="9" height="2.5" fill="#c8e0c0" stroke="#000" stroke-width="0.5" /><rect x="667.5" y="553.8" width="3" height="4" fill="#e8e4b4" stroke="#000" stroke-width="0.5" /><rect x="677.3" y="547.8" width="1.5" height="1.5" fill="#d8d49a" stroke="#000" stroke-width="0.5" /><rect x="611.7" y="536.2" width="2" height="2" fill="#f0c0f0" stroke="#000" stroke-width="0.5" /><rect x="696.0" y="565.1" width="1.5" height="4" fill="#d878d8" stroke="#000" stroke-width="0.5" /><rect x="610.4" y="555.6" width="1.5" height="1.5" fill="#889088" stroke="#000" stroke-width="0.5" /><rect x="636.1" y="545.6" width="3" height="3" fill="#e8e4b4" stroke="#000" stroke-width="0.5" /><rect x="657.1" y="529.5" width="7" height="1.5" fill="#e8e4b4" stroke="#000" stroke-width="0.5" /><rect x="615.1" y="546.7" width="7" height="2.5" fill="#50a060" stroke="#000" stroke-width="0.5" /><rect x="689.2" y="552.6" width="1.5" height="4" fill="#e0a0e0" stroke="#000" stroke-width="0.5" /><rect x="629.4" y="532.3" width="9" height="5" fill="#50a060" stroke="#000" stroke-width="0.5" /><rect x="654.0" y="536.4" width="5" height="2.5" fill="#e070e0" stroke="#000" stroke-width="0.5" /><rect x="625.0" y="533.5" width="7" height="2" fill="#50a060" stroke="#000" stroke-width="0.5" /><rect x="610.3" y="541.9" width="5" height="5" fill="#e8e8f0" stroke="#000" stroke-width="0.5" /><rect x="673.7" y="558.8" width="4" height="2" fill="#f0c0f0" stroke="#000" stroke-width="0.5" /><rect x="604.1" y="542.3" width="4" height="1.5" fill="#e0a0e0" stroke="#000" stroke-width="0.5" /><rect x="685.8" y="567.6" width="5" height="1.5" fill="#9a9ab8" stroke="#000" stroke-width="0.5" /><rect x="624.3" y="566.5" width="3" height="2.5" fill="#e8e4b4" stroke="#000" stroke-width="0.5" /><rect x="663.0" y="551.2" width="5" height="1.5" fill="#50a060" stroke="#000" stroke-width="0.5" /><rect x="648.5" y="548.4" width="2" height="5" fill="#c8e0c0" stroke="#000" stroke-width="0.5" /><rect x="673.2" y="567.2" width="1.5" height="1.5" fill="#c8e0c0" stroke="#000" stroke-width="0.5" /><rect x="670.9" y="539.0" width="4" height="4" fill="#d878d8" stroke="#000" stroke-width="0.5" /><rect x="673.1" y="554.3" width="1.5" height="1.5" fill="#e070e0" stroke="#000" stroke-width="0.5" /><rect x="622.1" y="564.3" width="5" height="4" fill="#e0a0e0" stroke="#000" stroke-width="0.5" /><rect x="693.7" y="551.2" width="1.5" height="5" fill="#d878d8" stroke="#000" stroke-width="0.5" /><rect x="678.0" y="532.0" width="5" height="5" fill="#d878d8" stroke="#000" stroke-width="0.5" /><rect x="635.6" y="565.6" width="4" height="3" fill="#f0c0f0" stroke="#000" stroke-width="0.5" /><rect x="682.6" y="550.1" width="5" height="1.5" fill="#e0a0e0" stroke="#000" stroke-width="0.5" /><rect x="691.5" y="545.4" width="5" height="3" fill="#707868" stroke="#000" stroke-width="0.5" /><rect x="712.7" y="539.0" width="7" height="2.5" fill="#707868" stroke="#000" stroke-width="0.5" /><rect x="725.5" y="558.4" width="1.5" height="1.5" fill="#9a9ab8" stroke="#000" stroke-width="0.5" /><rect x="722.2" y="553.6" width="4" height="5" fill="#50a060" stroke="#000" stroke-width="0.5" /><rect x="699.3" y="540.2" width="4" height="1.5" fill="#889088" stroke="#000" stroke-width="0.5" /><rect x="700.2" y="565.0" width="4" height="5" fill="#d8d49a" stroke="#000" stroke-width="0.5" /><rect x="707.8" y="558.7" width="1.5" height="4" fill="#c8e0c0" stroke="#000" stroke-width="0.5" /><rect x="737.3" y="557.4" width="4" height="2" fill="#9a9ab8" stroke="#000" stroke-width="0.5" /><rect x="723.0" y="531.8" width="5" height="3" fill="#d878d8" stroke="#000" stroke-width="0.5" /><rect x="702.1" y="563.2" width="3" height="4" fill="#20d040" stroke="#000" stroke-width="0.5" /><rect x="702.3" y="545.6" width="7" height="3" fill="#d878d8" stroke="#000" stroke-width="0.5" /><rect x="722.8" y="553.9" width="7" height="3" fill="#e8e8f0" stroke="#000" stroke-width="0.5" /><rect x="730.5" y="549.3" width="2" height="2.5" fill="#20d040" stroke="#000" stroke-width="0.5" /><rect x="707.3" y="531.8" width="3" height="4" fill="#e8e8f0" stroke="#000" stroke-width="0.5" /><rect x="708.8" y="552.6" width="7" height="4" fill="#e8e4b4" stroke="#000" stroke-width="0.5" /><rect x="724.2" y="558.6" width="2" height="2" fill="#e8e4b4" stroke="#000" stroke-width="0.5" /><rect x="734.8" y="528.7" width="1.5" height="1.5" fill="#e070e0" stroke="#000" stroke-width="0.5" /><rect x="708.2" y="528.1" width="1.5" height="1.5" fill="#9a9ab8" stroke="#000" stroke-width="0.5" /><rect x="720.3" y="530.0" width="1.5" height="5" fill="#f0c0f0" stroke="#000" stroke-width="0.5" /><rect x="720.7" y="553.5" width="3" height="3" fill="#d8d49a" stroke="#000" stroke-width="0.5" /><rect x="712.2" y="541.2" width="4" height="5" fill="#20d040" stroke="#000" stroke-width="0.5" /><rect x="733.1" y="530.1" width="1.5" height="3" fill="#e8e4b4" stroke="#000" stroke-width="0.5" /><rect x="716.1" y="558.4" width="4" height="2" fill="#e8e8f0" stroke="#000" stroke-width="0.5" /><rect x="703.6" y="562.1" width="5" height="2.5" fill="#707868" stroke="#000" stroke-width="0.5" /><rect x="720.6" y="558.3" width="2" height="3" fill="#e8e8f0" stroke="#000" stroke-width="0.5" /><rect x="722.0" y="546.4" width="3" height="1.5" fill="#e010d0" stroke="#000" stroke-width="0.5" /><rect x="715.6" y="550.9" width="9" height="5" fill="#d878d8" stroke="#000" stroke-width="0.5" /><rect x="709.9" y="559.6" width="1.5" height="2.5" fill="#e8e4b4" stroke="#000" stroke-width="0.5" /><rect x="736.2" y="552.4" width="7" height="2.5" fill="#d8d49a" stroke="#000" stroke-width="0.5" /><rect x="728.2" y="556.1" width="3" height="2" fill="#9a9ab8" stroke="#000" stroke-width="0.5" /><rect x="712.4" y="557.5" width="3" height="1.5" fill="#889088" stroke="#000" stroke-width="0.5" /><rect x="727.5" y="550.9" width="7" height="2.5" fill="#d878d8" stroke="#000" stroke-width="0.5" /><rect x="719.8" y="568.7" width="4" height="2.5" fill="#9a9ab8" stroke="#000" stroke-width="0.5" /><rect x="714.2" y="566.3" width="5" height="2" fill="#e010d0" stroke="#000" stroke-width="0.5" /><rect x="712.6" y="542.4" width="3" height="5" fill="#50a060" stroke="#000" stroke-width="0.5" /><rect x="722.1" y="560.4" width="7" height="4" fill="#e8e8f0" stroke="#000" stroke-width="0.5" /><rect x="731.3" y="549.7" width="9" height="4" fill="#f0c0f0" stroke="#000" stroke-width="0.5" /><rect x="704.6" y="558.9" width="9" height="2.5" fill="#e0a0e0" stroke="#000" stroke-width="0.5" /><rect x="706.5" y="529.4" width="2" height="4" fill="#707868" stroke="#000" stroke-width="0.5" /><rect x="738.6" y="554.4" width="9" height="3" fill="#e010d0" stroke="#000" stroke-width="0.5" /><rect x="722.0" y="539.8" width="5" height="1.5" fill="#889088" stroke="#000" stroke-width="0.5" /><rect x="700.5" y="558.0" width="3" height="1.5" fill="#e0a0e0" stroke="#000" stroke-width="0.5" /><rect x="724.3" y="533.0" width="7" height="5" fill="#e0a0e0" stroke="#000" stroke-width="0.5" /><rect x="707.6" y="536.3" width="9" height="4" fill="#889088" stroke="#000" stroke-width="0.5" /><rect x="729.9" y="543.6" width="3" height="2.5" fill="#20d040" stroke="#000" stroke-width="0.5" /><rect x="718.2" y="549.6" width="7" height="1.5" fill="#d878d8" stroke="#000" stroke-width="0.5" /><rect x="714.7" y="561.7" width="7" height="2.5" fill="#e0a0e0" stroke="#000" stroke-width="0.5" /><rect x="731.7" y="562.0" width="4" height="4" fill="#e0a0e0" stroke="#000" stroke-width="0.5" /><rect x="719.5" y="556.8" width="9" height="1.5" fill="#e0a0e0" stroke="#000" stroke-width="0.5" /><rect x="736.7" y="565.5" width="2" height="5" fill="#f0c0f0" stroke="#000" stroke-width="0.5" /><rect x="739.6" y="542.8" width="2" height="2.5" fill="#e8e4b4" stroke="#000" stroke-width="0.5" /><rect x="713.7" y="549.2" width="3" height="1.5" fill="#d8d49a" stroke="#000" stroke-width="0.5" /><rect x="710.3" y="531.8" width="7" height="2" fill="#f0c0f0" stroke="#000" stroke-width="0.5" /><rect x="736.2" y="558.6" width="1.5" height="4" fill="#d8d49a" stroke="#000" stroke-width="0.5" /><rect x="736.1" y="528.5" width="1.5" height="2" fill="#f0c0f0" stroke="#000" stroke-width="0.5" /><rect x="712.5" y="551.7" width="5" height="5" fill="#d8d49a" stroke="#000" stroke-width="0.5" /><rect x="722.6" y="536.4" width="2" height="2.5" fill="#50a060" stroke="#000" stroke-width="0.5" /><rect x="704.4" y="558.8" width="3" height="5" fill="#d8d49a" stroke="#000" stroke-width="0.5" /><rect x="733.7" y="547.4" width="4" height="2.5" fill="#e010d0" stroke="#000" stroke-width="0.5" /><rect x="717.8" y="536.3" width="1.5" height="2" fill="#20d040" stroke="#000" stroke-width="0.5" /><rect x="731.5" y="543.2" width="5" height="4" fill="#e070e0" stroke="#000" stroke-width="0.5" /><rect x="730.9" y="529.4" width="2" height="1.5" fill="#d8d49a" stroke="#000" stroke-width="0.5" /><rect x="735.9" y="545.9" width="2" height="5" fill="#e0a0e0" stroke="#000" stroke-width="0.5" /><rect x="723.1" y="533.6" width="2" height="2.5" fill="#20d040" stroke="#000" stroke-width="0.5" /><rect x="708.2" y="563.5" width="5" height="2" fill="#e070e0" stroke="#000" stroke-width="0.5" /><rect x="719.2" y="529.2" width="5" height="2" fill="#e0a0e0" stroke="#000" stroke-width="0.5" /><rect x="705.8" y="565.5" width="2" height="2" fill="#e010d0" stroke="#000" stroke-width="0.5" /><rect x="712.1" y="552.8" width="5" height="1.5" fill="#d8d49a" stroke="#000" stroke-width="0.5" /><rect x="726.8" y="530.5" width="7" height="4" fill="#707868" stroke="#000" stroke-width="0.5" /><rect x="697.8" y="534.9" width="2" height="5" fill="#e010d0" stroke="#000" stroke-width="0.5" /><rect x="730.6" y="545.5" width="1.5" height="4" fill="#e0a0e0" stroke="#000" stroke-width="0.5" /><rect x="901.4" y="533.6" width="9" height="2.5" fill="#889088" stroke="#000" stroke-width="0.5" /><rect x="885.3" y="530.2" width="3" height="3" fill="#e010d0" stroke="#000" stroke-width="0.5" /><rect x="889.0" y="555.9" width="1.5" height="5" fill="#50a060" stroke="#000" stroke-width="0.5" /><rect x="912.7" y="558.4" width="9" height="1.5" fill="#d878d8" stroke="#000" stroke-width="0.5" /><rect x="862.9" y="542.8" width="7" height="3" fill="#9a9ab8" stroke="#000" stroke-width="0.5" /><rect x="884.0" y="531.8" width="9" height="1.5" fill="#e8e4b4" stroke="#000" stroke-width="0.5" /><rect x="929.6" y="533.4" width="7" height="3" fill="#707868" stroke="#000" stroke-width="0.5" /><rect x="933.6" y="558.7" width="5" height="5" fill="#e010d0" stroke="#000" stroke-width="0.5" /><rect x="881.2" y="535.4" width="7" height="1.5" fill="#889088" stroke="#000" stroke-width="0.5" /><rect x="885.2" y="538.5" width="4" height="5" fill="#889088" stroke="#000" stroke-width="0.5" /><rect x="895.5" y="543.1" width="1.5" height="2" fill="#c8e0c0" stroke="#000" stroke-width="0.5" /><rect x="871.9" y="553.5" width="2" height="2" fill="#e8e4b4" stroke="#000" stroke-width="0.5" /><rect x="892.2" y="562.2" width="5" height="5" fill="#e010d0" stroke="#000" stroke-width="0.5" /><rect x="869.5" y="528.4" width="1.5" height="3" fill="#e0a0e0" stroke="#000" stroke-width="0.5" /><rect x="919.8" y="541.3" width="9" height="3" fill="#20d040" stroke="#000" stroke-width="0.5" /><rect x="910.5" y="559.2" width="9" height="5" fill="#50a060" stroke="#000" stroke-width="0.5" /><rect x="898.2" y="565.7" width="5" height="1.5" fill="#50a060" stroke="#000" stroke-width="0.5" /><rect x="908.0" y="540.3" width="9" height="2" fill="#e0a0e0" stroke="#000" stroke-width="0.5" /><rect x="881.6" y="534.9" width="3" height="5" fill="#d878d8" stroke="#000" stroke-width="0.5" /><rect x="870.0" y="542.9" width="5" height="2.5" fill="#707868" stroke="#000" stroke-width="0.5" /><rect x="923.9" y="552.7" width="2" height="2.5" fill="#707868" stroke="#000" stroke-width="0.5" /><rect x="903.1" y="541.8" width="5" height="4" fill="#20d040" stroke="#000" stroke-width="0.5" /><rect x="905.1" y="535.3" width="5" height="5" fill="#e8e4b4" stroke="#000" stroke-width="0.5" /><rect x="904.6" y="528.1" width="7" height="2" fill="#e010d0" stroke="#000" stroke-width="0.5" /><rect x="872.2" y="547.1" width="4" height="5" fill="#889088" stroke="#000" stroke-width="0.5" /><rect x="886.7" y="566.0" width="3" height="2.5" fill="#d878d8" stroke="#000" stroke-width="0.5" /><rect x="928.2" y="546.0" width="7" height="2" fill="#9a9ab8" stroke="#000" stroke-width="0.5" /><rect x="929.8" y="549.8" width="5" height="1.5" fill="#e070e0" stroke="#000" stroke-width="0.5" /><rect x="874.6" y="558.3" width="9" height="2.5" fill="#20d040" stroke="#000" stroke-width="0.5" /><rect x="871.2" y="561.6" width="3" height="5" fill="#e8e8f0" stroke="#000" stroke-width="0.5" /><rect x="880.1" y="551.1" width="9" height="2" fill="#f0c0f0" stroke="#000" stroke-width="0.5" /><rect x="906.8" y="561.1" width="4" height="1.5" fill="#50a060" stroke="#000" stroke-width="0.5" /><rect x="875.5" y="568.5" width="7" height="2" fill="#707868" stroke="#000" stroke-width="0.5" /><rect x="918.7" y="562.6" width="4" height="4" fill="#e0a0e0" stroke="#000" stroke-width="0.5" /><rect x="873.9" y="544.3" width="1.5" height="2" fill="#50a060" stroke="#000" stroke-width="0.5" /><rect x="870.9" y="544.0" width="3" height="4" fill="#20d040" stroke="#000" stroke-width="0.5" /><rect x="881.8" y="550.9" width="3" height="1.5" fill="#d878d8" stroke="#000" stroke-width="0.5" /><rect x="916.1" y="560.1" width="4" height="3" fill="#c8e0c0" stroke="#000" stroke-width="0.5" /><rect x="897.2" y="544.3" width="5" height="5" fill="#e0a0e0" stroke="#000" stroke-width="0.5" /><rect x="918.4" y="547.4" width="4" height="5" fill="#e0a0e0" stroke="#000" stroke-width="0.5" /><rect x="923.9" y="531.9" width="1.5" height="4" fill="#889088" stroke="#000" stroke-width="0.5" /><rect x="901.4" y="545.2" width="1.5" height="2.5" fill="#d878d8" stroke="#000" stroke-width="0.5" /><rect x="884.2" y="552.9" width="4" height="5" fill="#50a060" stroke="#000" stroke-width="0.5" /><rect x="906.8" y="558.6" width="3" height="4" fill="#e010d0" stroke="#000" stroke-width="0.5" /><rect x="880.3" y="562.5" width="2" height="4" fill="#50a060" stroke="#000" stroke-width="0.5" /><rect x="934.9" y="547.0" width="1.5" height="4" fill="#9a9ab8" stroke="#000" stroke-width="0.5" /><rect x="902.9" y="554.6" width="2" height="1.5" fill="#e8e8f0" stroke="#000" stroke-width="0.5" /><rect x="927.0" y="544.7" width="9" height="2" fill="#9a9ab8" stroke="#000" stroke-width="0.5" /><rect x="910.7" y="544.7" width="1.5" height="1.5" fill="#c8e0c0" stroke="#000" stroke-width="0.5" /><rect x="901.0" y="532.5" width="5" height="4" fill="#d878d8" stroke="#000" stroke-width="0.5" /><rect x="862.0" y="537.2" width="3" height="1.5" fill="#889088" stroke="#000" stroke-width="0.5" /><rect x="874.9" y="545.5" width="4" height="4" fill="#50a060" stroke="#000" stroke-width="0.5" /><rect x="872.6" y="556.1" width="2" height="1.5" fill="#707868" stroke="#000" stroke-width="0.5" /><rect x="864.3" y="564.7" width="3" height="2.5" fill="#d8d49a" stroke="#000" stroke-width="0.5" /><rect x="872.7" y="559.6" width="9" height="3" fill="#e8e4b4" stroke="#000" stroke-width="0.5" /><rect x="877.2" y="563.1" width="7" height="1.5" fill="#e8e4b4" stroke="#000" stroke-width="0.5" /><rect x="885.7" y="563.1" width="4" height="1.5" fill="#f0c0f0" stroke="#000" stroke-width="0.5" /><rect x="909.7" y="556.3" width="5" height="2" fill="#9a9ab8" stroke="#000" stroke-width="0.5" /><rect x="876.4" y="564.0" width="1.5" height="5" fill="#c8e0c0" stroke="#000" stroke-width="0.5" /><rect x="885.0" y="561.3" width="3" height="3" fill="#20d040" stroke="#000" stroke-width="0.5" /><rect x="887.1" y="567.2" width="9" height="3" fill="#e0a0e0" stroke="#000" stroke-width="0.5" /><rect x="867.9" y="536.4" width="3" height="1.5" fill="#e8e4b4" stroke="#000" stroke-width="0.5" /><rect x="882.2" y="557.2" width="5" height="5" fill="#707868" stroke="#000" stroke-width="0.5" /><rect x="921.3" y="542.6" width="7" height="4" fill="#c8e0c0" stroke="#000" stroke-width="0.5" /><rect x="906.2" y="536.6" width="3" height="2" fill="#9a9ab8" stroke="#000" stroke-width="0.5" /><rect x="882.8" y="553.9" width="1.5" height="3" fill="#e010d0" stroke="#000" stroke-width="0.5" /><rect x="895.0" y="549.2" width="5" height="1.5" fill="#e0a0e0" stroke="#000" stroke-width="0.5" /><rect x="907.0" y="539.0" width="3" height="3" fill="#e010d0" stroke="#000" stroke-width="0.5" /><rect x="874.3" y="568.5" width="2" height="2" fill="#f0c0f0" stroke="#000" stroke-width="0.5" /><rect x="882.9" y="550.0" width="2" height="2" fill="#d878d8" stroke="#000" stroke-width="0.5" /><rect x="908.6" y="565.5" width="5" height="3" fill="#e0a0e0" stroke="#000" stroke-width="0.5" /><rect x="931.7" y="548.0" width="2" height="1.5" fill="#e8e8f0" stroke="#000" stroke-width="0.5" /><rect x="886.1" y="547.3" width="1.5" height="4" fill="#707868" stroke="#000" stroke-width="0.5" /><rect x="899.9" y="562.5" width="7" height="4" fill="#f0c0f0" stroke="#000" stroke-width="0.5" /><rect x="906.5" y="559.4" width="1.5" height="4" fill="#e0a0e0" stroke="#000" stroke-width="0.5" /><rect x="879.7" y="545.5" width="9" height="2.5" fill="#9a9ab8" stroke="#000" stroke-width="0.5" /><rect x="881.5" y="549.9" width="9" height="4" fill="#d8d49a" stroke="#000" stroke-width="0.5" /><rect x="881.6" y="535.5" width="7" height="1.5" fill="#d878d8" stroke="#000" stroke-width="0.5" /><rect x="927.5" y="534.6" width="2" height="4" fill="#e0a0e0" stroke="#000" stroke-width="0.5" /><rect x="907.6" y="560.9" width="5" height="3" fill="#e070e0" stroke="#000" stroke-width="0.5" /><rect x="926.3" y="528.3" width="1.5" height="2" fill="#9a9ab8" stroke="#000" stroke-width="0.5" /><rect x="908.7" y="529.3" width="4" height="1.5" fill="#889088" stroke="#000" stroke-width="0.5" /><rect x="923.5" y="558.0" width="9" height="2.5" fill="#d8d49a" stroke="#000" stroke-width="0.5" /><rect x="868.6" y="561.5" width="2" height="3" fill="#e070e0" stroke="#000" stroke-width="0.5" /><rect x="880.6" y="547.9" width="7" height="4" fill="#d878d8" stroke="#000" stroke-width="0.5" /><rect x="866.6" y="544.2" width="3" height="5" fill="#e8e4b4" stroke="#000" stroke-width="0.5" /><rect x="914.8" y="567.2" width="2" height="3" fill="#20d040" stroke="#000" stroke-width="0.5" /><rect x="872.8" y="546.1" width="7" height="1.5" fill="#e0a0e0" stroke="#000" stroke-width="0.5" /><rect x="880.0" y="564.4" width="2" height="1.5" fill="#50a060" stroke="#000" stroke-width="0.5" /><rect x="903.7" y="546.8" width="1.5" height="1.5" fill="#9a9ab8" stroke="#000" stroke-width="0.5" /><rect x="884.2" y="532.0" width="9" height="2" fill="#e0a0e0" stroke="#000" stroke-width="0.5" /><rect x="896.6" y="566.2" width="3" height="2.5" fill="#889088" stroke="#000" stroke-width="0.5" /><rect x="933.0" y="565.8" width="2" height="1.5" fill="#f0c0f0" stroke="#000" stroke-width="0.5" /><rect x="892.2" y="554.3" width="1.5" height="5" fill="#889088" stroke="#000" stroke-width="0.5" /><rect x="904.6" y="565.3" width="5" height="2" fill="#d878d8" stroke="#000" stroke-width="0.5" /><rect x="926.5" y="566.3" width="2" height="3" fill="#50a060" stroke="#000" stroke-width="0.5" /><rect x="920.6" y="536.0" width="3" height="2" fill="#f0c0f0" stroke="#000" stroke-width="0.5" /><rect x="921.5" y="560.8" width="4" height="2" fill="#50a060" stroke="#000" stroke-width="0.5" /><rect x="878.1" y="546.6" width="3" height="3" fill="#d878d8" stroke="#000" stroke-width="0.5" /><rect x="898.8" y="553.3" width="2" height="3" fill="#e8e4b4" stroke="#000" stroke-width="0.5" /><rect x="902.5" y="544.6" width="1.5" height="5" fill="#e070e0" stroke="#000" stroke-width="0.5" /><rect x="889.2" y="538.5" width="1.5" height="4" fill="#f0c0f0" stroke="#000" stroke-width="0.5" /><rect x="917.6" y="548.5" width="5" height="5" fill="#e8e4b4" stroke="#000" stroke-width="0.5" /><rect x="882.1" y="542.2" width="2" height="5" fill="#e8e8f0" stroke="#000" stroke-width="0.5" /><rect x="872.3" y="537.1" width="9" height="1.5" fill="#e0a0e0" stroke="#000" stroke-width="0.5" /><rect x="936.8" y="562.2" width="4" height="1.5" fill="#50a060" stroke="#000" stroke-width="0.5" /><rect x="886.4" y="559.4" width="5" height="5" fill="#d878d8" stroke="#000" stroke-width="0.5" /><rect x="884.7" y="552.5" width="4" height="1.5" fill="#e8e4b4" stroke="#000" stroke-width="0.5" /><rect x="873.3" y="552.0" width="1.5" height="2" fill="#707868" stroke="#000" stroke-width="0.5" /><rect x="892.8" y="547.1" width="7" height="2" fill="#e070e0" stroke="#000" stroke-width="0.5" /><rect x="974.1" y="545.1" width="4" height="2" fill="#e8e4b4" stroke="#000" stroke-width="0.5" /><rect x="997.6" y="548.4" width="4" height="3" fill="#20d040" stroke="#000" stroke-width="0.5" /><rect x="977.4" y="561.6" width="2" height="1.5" fill="#707868" stroke="#000" stroke-width="0.5" /><rect x="976.7" y="551.5" width="2" height="1.5" fill="#e0a0e0" stroke="#000" stroke-width="0.5" /><rect x="993.6" y="546.3" width="1.5" height="5" fill="#707868" stroke="#000" stroke-width="0.5" /><rect x="989.7" y="529.7" width="9" height="2" fill="#e8e8f0" stroke="#000" stroke-width="0.5" /><rect x="990.0" y="565.2" width="9" height="2.5" fill="#9a9ab8" stroke="#000" stroke-width="0.5" /><rect x="995.2" y="537.4" width="9" height="3" fill="#c8e0c0" stroke="#000" stroke-width="0.5" /><rect x="977.7" y="529.4" width="4" height="2.5" fill="#707868" stroke="#000" stroke-width="0.5" /><rect x="982.4" y="538.2" width="2" height="3" fill="#e8e4b4" stroke="#000" stroke-width="0.5" /><rect x="981.4" y="533.7" width="7" height="5" fill="#9a9ab8" stroke="#000" stroke-width="0.5" /><rect x="983.4" y="556.7" width="4" height="2" fill="#d8d49a" stroke="#000" stroke-width="0.5" /><rect x="986.2" y="555.1" width="5" height="2.5" fill="#e0a0e0" stroke="#000" stroke-width="0.5" /><rect x="1000.6" y="531.8" width="1.5" height="3" fill="#e070e0" stroke="#000" stroke-width="0.5" /><rect x="962.5" y="546.8" width="5" height="2.5" fill="#d8d49a" stroke="#000" stroke-width="0.5" /><rect x="992.4" y="562.4" width="1.5" height="1.5" fill="#d878d8" stroke="#000" stroke-width="0.5" /><rect x="975.6" y="562.7" width="5" height="2.5" fill="#e070e0" stroke="#000" stroke-width="0.5" /><rect x="996.7" y="562.5" width="7" height="3" fill="#50a060" stroke="#000" stroke-width="0.5" /><rect x="987.7" y="565.2" width="3" height="1.5" fill="#e8e4b4" stroke="#000" stroke-width="0.5" /><rect x="994.7" y="552.1" width="5" height="4" fill="#e0a0e0" stroke="#000" stroke-width="0.5" /><rect x="987.6" y="529.5" width="1.5" height="3" fill="#d878d8" stroke="#000" stroke-width="0.5" /><rect x="977.2" y="563.4" width="1.5" height="2" fill="#e070e0" stroke="#000" stroke-width="0.5" /><rect x="973.9" y="541.4" width="1.5" height="2" fill="#e8e4b4" stroke="#000" stroke-width="0.5" /><rect x="972.1" y="537.3" width="2" height="2" fill="#e0a0e0" stroke="#000" stroke-width="0.5" /><rect x="1001.7" y="566.2" width="1.5" height="2" fill="#d8d49a" stroke="#000" stroke-width="0.5" /><rect x="998.2" y="557.6" width="1.5" height="4" fill="#889088" stroke="#000" stroke-width="0.5" /><rect x="971.9" y="531.2" width="1.5" height="2.5" fill="#e8e4b4" stroke="#000" stroke-width="0.5" /><rect x="991.3" y="554.5" width="2" height="2" fill="#f0c0f0" stroke="#000" stroke-width="0.5" /><rect x="975.0" y="554.6" width="9" height="4" fill="#707868" stroke="#000" stroke-width="0.5" /><rect x="976.6" y="538.4" width="7" height="5" fill="#d8d49a" stroke="#000" stroke-width="0.5" /><rect x="970.7" y="537.0" width="3" height="5" fill="#f0c0f0" stroke="#000" stroke-width="0.5" /><rect x="1001.3" y="556.5" width="1.5" height="1.5" fill="#c8e0c0" stroke="#000" stroke-width="0.5" /><rect x="999.9" y="539.4" width="9" height="3" fill="#d8d49a" stroke="#000" stroke-width="0.5" /><rect x="961.8" y="551.9" width="4" height="3" fill="#d878d8" stroke="#000" stroke-width="0.5" /><rect x="975.5" y="542.9" width="7" height="5" fill="#50a060" stroke="#000" stroke-width="0.5" /><rect x="971.4" y="552.4" width="3" height="5" fill="#889088" stroke="#000" stroke-width="0.5" /><rect x="968.3" y="561.2" width="2" height="4" fill="#20d040" stroke="#000" stroke-width="0.5" /><rect x="985.5" y="543.8" width="7" height="2" fill="#e070e0" stroke="#000" stroke-width="0.5" /><rect x="996.1" y="532.0" width="4" height="4" fill="#707868" stroke="#000" stroke-width="0.5" /><rect x="970.4" y="534.4" width="1.5" height="3" fill="#20d040" stroke="#000" stroke-width="0.5" /><rect x="972.1" y="537.8" width="3" height="5" fill="#50a060" stroke="#000" stroke-width="0.5" /><rect x="977.4" y="554.2" width="2" height="1.5" fill="#f0c0f0" stroke="#000" stroke-width="0.5" /><rect x="992.1" y="531.7" width="1.5" height="2" fill="#707868" stroke="#000" stroke-width="0.5" /><rect x="976.0" y="548.5" width="9" height="1.5" fill="#50a060" stroke="#000" stroke-width="0.5" /><rect x="974.9" y="528.1" width="5" height="3" fill="#f0c0f0" stroke="#000" stroke-width="0.5" /><rect x="976.8" y="539.4" width="9" height="5" fill="#707868" stroke="#000" stroke-width="0.5" /><rect x="970.1" y="555.9" width="4" height="2" fill="#50a060" stroke="#000" stroke-width="0.5" /><rect x="990.4" y="535.7" width="3" height="2" fill="#d878d8" stroke="#000" stroke-width="0.5" /><rect x="967.9" y="531.3" width="3" height="3" fill="#e0a0e0" stroke="#000" stroke-width="0.5" /><rect x="965.4" y="539.9" width="1.5" height="2.5" fill="#20d040" stroke="#000" stroke-width="0.5" /><rect x="972.3" y="543.0" width="3" height="2" fill="#e010d0" stroke="#000" stroke-width="0.5" /><rect x="981.7" y="541.6" width="3" height="4" fill="#d878d8" stroke="#000" stroke-width="0.5" /><rect x="966.8" y="527.3" width="9" height="2.5" fill="#e010d0" stroke="#000" stroke-width="0.5" /><rect x="960.2" y="540.5" width="2" height="2" fill="#e0a0e0" stroke="#000" stroke-width="0.5" /><rect x="981.8" y="543.6" width="9" height="4" fill="#50a060" stroke="#000" stroke-width="0.5" /><rect x="985.1" y="535.6" width="5" height="5" fill="#e070e0" stroke="#000" stroke-width="0.5" /><rect x="972.5" y="564.6" width="9" height="2" fill="#d878d8" stroke="#000" stroke-width="0.5" /><rect x="985.7" y="564.6" width="1.5" height="2" fill="#e0a0e0" stroke="#000" stroke-width="0.5" /><rect x="1002.5" y="548.6" width="7" height="1.5" fill="#e070e0" stroke="#000" stroke-width="0.5" /><rect x="976.2" y="557.1" width="3" height="1.5" fill="#d878d8" stroke="#000" stroke-width="0.5" /><rect x="1020.0" y="535.4" width="3" height="1.5" fill="#e070e0" stroke="#000" stroke-width="0.5" /><rect x="1096.8" y="558.7" width="7" height="3" fill="#50a060" stroke="#000" stroke-width="0.5" /><rect x="1048.6" y="548.3" width="7" height="1.5" fill="#d8d49a" stroke="#000" stroke-width="0.5" /><rect x="1057.6" y="555.2" width="3" height="4" fill="#e0a0e0" stroke="#000" stroke-width="0.5" /><rect x="1019.9" y="532.6" width="3" height="3" fill="#e8e8f0" stroke="#000" stroke-width="0.5" /><rect x="1067.6" y="538.1" width="3" height="5" fill="#d878d8" stroke="#000" stroke-width="0.5" /><rect x="1053.0" y="538.2" width="7" height="2.5" fill="#c8e0c0" stroke="#000" stroke-width="0.5" /><rect x="1044.4" y="535.5" width="2" height="2" fill="#d878d8" stroke="#000" stroke-width="0.5" /><rect x="1090.3" y="548.8" width="7" height="2" fill="#f0c0f0" stroke="#000" stroke-width="0.5" /><rect x="1052.4" y="533.2" width="3" height="2.5" fill="#f0c0f0" stroke="#000" stroke-width="0.5" /><rect x="1060.4" y="527.4" width="5" height="1.5" fill="#50a060" stroke="#000" stroke-width="0.5" /><rect x="1028.1" y="565.0" width="9" height="2" fill="#e0a0e0" stroke="#000" stroke-width="0.5" /><rect x="1103.5" y="539.8" width="9" height="4" fill="#c8e0c0" stroke="#000" stroke-width="0.5" /><rect x="1074.6" y="539.9" width="4" height="2" fill="#d8d49a" stroke="#000" stroke-width="0.5" /><rect x="1058.2" y="555.2" width="2" height="2.5" fill="#e010d0" stroke="#000" stroke-width="0.5" /><rect x="1084.0" y="564.9" width="3" height="2" fill="#e8e8f0" stroke="#000" stroke-width="0.5" /><rect x="1069.4" y="527.4" width="7" height="5" fill="#50a060" stroke="#000" stroke-width="0.5" /><rect x="1106.5" y="529.2" width="5" height="4" fill="#e8e8f0" stroke="#000" stroke-width="0.5" /><rect x="1104.2" y="561.3" width="7" height="3" fill="#c8e0c0" stroke="#000" stroke-width="0.5" /><rect x="1030.7" y="556.5" width="7" height="3" fill="#e0a0e0" stroke="#000" stroke-width="0.5" /><rect x="1082.9" y="543.8" width="4" height="4" fill="#9a9ab8" stroke="#000" stroke-width="0.5" /><rect x="1055.0" y="548.6" width="1.5" height="4" fill="#d878d8" stroke="#000" stroke-width="0.5" /><rect x="1069.7" y="545.1" width="3" height="4" fill="#d878d8" stroke="#000" stroke-width="0.5" /><rect x="1076.1" y="564.3" width="2" height="4" fill="#d878d8" stroke="#000" stroke-width="0.5" /><rect x="1050.5" y="537.2" width="5" height="2.5" fill="#e8e4b4" stroke="#000" stroke-width="0.5" /><rect x="1089.7" y="566.6" width="4" height="1.5" fill="#20d040" stroke="#000" stroke-width="0.5" /><rect x="1091.3" y="562.9" width="1.5" height="2" fill="#f0c0f0" stroke="#000" stroke-width="0.5" /><rect x="1099.7" y="553.0" width="2" height="1.5" fill="#c8e0c0" stroke="#000" stroke-width="0.5" /><rect x="1068.1" y="566.7" width="1.5" height="2" fill="#d878d8" stroke="#000" stroke-width="0.5" /><rect x="1087.3" y="537.0" width="9" height="2.5" fill="#d878d8" stroke="#000" stroke-width="0.5" /><rect x="1038.9" y="527.6" width="4" height="2" fill="#d8d49a" stroke="#000" stroke-width="0.5" /><rect x="1045.8" y="552.7" width="1.5" height="1.5" fill="#d878d8" stroke="#000" stroke-width="0.5" /><rect x="1094.6" y="546.6" width="2" height="1.5" fill="#d8d49a" stroke="#000" stroke-width="0.5" /><rect x="1101.1" y="557.8" width="5" height="1.5" fill="#20d040" stroke="#000" stroke-width="0.5" /><rect x="1096.9" y="534.1" width="3" height="1.5" fill="#e8e8f0" stroke="#000" stroke-width="0.5" /><rect x="1110.7" y="535.8" width="3" height="1.5" fill="#e0a0e0" stroke="#000" stroke-width="0.5" /><rect x="1036.4" y="542.5" width="9" height="5" fill="#d878d8" stroke="#000" stroke-width="0.5" /><rect x="1105.6" y="529.9" width="7" height="2" fill="#889088" stroke="#000" stroke-width="0.5" /><rect x="1103.2" y="556.1" width="2" height="4" fill="#e0a0e0" stroke="#000" stroke-width="0.5" /><rect x="1055.3" y="559.7" width="7" height="2.5" fill="#e070e0" stroke="#000" stroke-width="0.5" /><rect x="1082.2" y="535.3" width="2" height="2" fill="#20d040" stroke="#000" stroke-width="0.5" /><rect x="1035.5" y="550.2" width="1.5" height="2" fill="#e070e0" stroke="#000" stroke-width="0.5" /><rect x="1030.1" y="564.6" width="5" height="4" fill="#e8e8f0" stroke="#000" stroke-width="0.5" /><rect x="1048.5" y="527.3" width="1.5" height="5" fill="#e8e4b4" stroke="#000" stroke-width="0.5" /><rect x="1089.7" y="541.4" width="3" height="3" fill="#e8e4b4" stroke="#000" stroke-width="0.5" /><rect x="1033.0" y="552.2" width="4" height="2.5" fill="#e0a0e0" stroke="#000" stroke-width="0.5" /><rect x="1045.8" y="532.4" width="1.5" height="1.5" fill="#e8e8f0" stroke="#000" stroke-width="0.5" /><rect x="1068.3" y="543.7" width="4" height="4" fill="#c8e0c0" stroke="#000" stroke-width="0.5" /><rect x="1046.3" y="561.9" width="3" height="1.5" fill="#d878d8" stroke="#000" stroke-width="0.5" /><rect x="1040.7" y="546.1" width="2" height="5" fill="#e0a0e0" stroke="#000" stroke-width="0.5" /><rect x="1076.7" y="544.9" width="1.5" height="2.5" fill="#e0a0e0" stroke="#000" stroke-width="0.5" /><rect x="1051.0" y="550.4" width="7" height="2.5" fill="#707868" stroke="#000" stroke-width="0.5" /><rect x="1082.5" y="527.5" width="5" height="2" fill="#e0a0e0" stroke="#000" stroke-width="0.5" /><rect x="1058.5" y="532.3" width="9" height="2.5" fill="#50a060" stroke="#000" stroke-width="0.5" /><rect x="1059.4" y="540.7" width="9" height="4" fill="#c8e0c0" stroke="#000" stroke-width="0.5" /><rect x="1071.4" y="531.0" width="2" height="1.5" fill="#e8e8f0" stroke="#000" stroke-width="0.5" /><rect x="1020.6" y="528.2" width="5" height="5" fill="#e8e8f0" stroke="#000" stroke-width="0.5" /><rect x="1114.0" y="559.6" width="9" height="1.5" fill="#20d040" stroke="#000" stroke-width="0.5" /><rect x="1064.0" y="541.5" width="4" height="4" fill="#889088" stroke="#000" stroke-width="0.5" /><rect x="1065.0" y="553.1" width="1.5" height="2" fill="#e0a0e0" stroke="#000" stroke-width="0.5" /><rect x="1114.3" y="542.8" width="9" height="2" fill="#c8e0c0" stroke="#000" stroke-width="0.5" /><rect x="1114.8" y="529.7" width="4" height="5" fill="#50a060" stroke="#000" stroke-width="0.5" /><rect x="1094.9" y="564.3" width="5" height="4" fill="#e8e4b4" stroke="#000" stroke-width="0.5" /><rect x="1066.7" y="560.2" width="5" height="3" fill="#c8e0c0" stroke="#000" stroke-width="0.5" /><rect x="1090.2" y="530.3" width="2" height="5" fill="#e070e0" stroke="#000" stroke-width="0.5" /><rect x="1082.7" y="565.8" width="4" height="1.5" fill="#e0a0e0" stroke="#000" stroke-width="0.5" /><rect x="1064.0" y="527.6" width="9" height="2.5" fill="#e0a0e0" stroke="#000" stroke-width="0.5" /><rect x="1029.5" y="543.5" width="5" height="4" fill="#c8e0c0" stroke="#000" stroke-width="0.5" /><rect x="1093.5" y="530.8" width="5" height="4" fill="#c8e0c0" stroke="#000" stroke-width="0.5" /><rect x="1025.5" y="536.5" width="7" height="1.5" fill="#707868" stroke="#000" stroke-width="0.5" /><rect x="1047.2" y="558.1" width="2" height="4" fill="#e0a0e0" stroke="#000" stroke-width="0.5" /><rect x="1063.8" y="566.6" width="5" height="3" fill="#f0c0f0" stroke="#000" stroke-width="0.5" /><rect x="1072.6" y="545.4" width="9" height="1.5" fill="#20d040" stroke="#000" stroke-width="0.5" /><rect x="1032.8" y="549.6" width="2" height="3" fill="#c8e0c0" stroke="#000" stroke-width="0.5" /><rect x="1058.7" y="527.4" width="2" height="1.5" fill="#50a060" stroke="#000" stroke-width="0.5" /><rect x="1034.0" y="548.2" width="1.5" height="3" fill="#c8e0c0" stroke="#000" stroke-width="0.5" /><rect x="1066.4" y="563.5" width="5" height="5" fill="#d878d8" stroke="#000" stroke-width="0.5" /><rect x="1056.4" y="539.0" width="2" height="2.5" fill="#c8e0c0" stroke="#000" stroke-width="0.5" /><rect x="1082.1" y="543.8" width="4" height="2" fill="#20d040" stroke="#000" stroke-width="0.5" /><rect x="1073.5" y="547.0" width="1.5" height="3" fill="#707868" stroke="#000" stroke-width="0.5" /><rect x="1044.7" y="551.0" width="2" height="2.5" fill="#e010d0" stroke="#000" stroke-width="0.5" /><rect x="1060.2" y="546.1" width="3" height="5" fill="#e0a0e0" stroke="#000" stroke-width="0.5" /><rect x="1051.1" y="531.7" width="3" height="4" fill="#d878d8" stroke="#000" stroke-width="0.5" /><rect x="1034.7" y="542.3" width="3" height="3" fill="#9a9ab8" stroke="#000" stroke-width="0.5" /><rect x="1083.8" y="555.5" width="1.5" height="2.5" fill="#e8e8f0" stroke="#000" stroke-width="0.5" /><rect x="1065.5" y="536.2" width="7" height="4" fill="#d8d49a" stroke="#000" stroke-width="0.5" /><rect x="1089.4" y="541.9" width="5" height="1.5" fill="#e0a0e0" stroke="#000" stroke-width="0.5" /><rect x="1085.0" y="541.3" width="2" height="2.5" fill="#e8e8f0" stroke="#000" stroke-width="0.5" /><rect x="1099.6" y="535.4" width="9" height="4" fill="#d878d8" stroke="#000" stroke-width="0.5" /><rect x="1049.3" y="546.9" width="5" height="2.5" fill="#d878d8" stroke="#000" stroke-width="0.5" /><rect x="1101.2" y="535.5" width="5" height="2.5" fill="#e0a0e0" stroke="#000" stroke-width="0.5" /><rect x="1081.1" y="541.9" width="1.5" height="2.5" fill="#c8e0c0" stroke="#000" stroke-width="0.5" /><rect x="1027.2" y="566.4" width="9" height="2.5" fill="#889088" stroke="#000" stroke-width="0.5" /><rect x="1022.1" y="533.0" width="2" height="2.5" fill="#707868" stroke="#000" stroke-width="0.5" /><rect x="1024.4" y="557.5" width="1.5" height="3" fill="#e010d0" stroke="#000" stroke-width="0.5" /><rect x="1072.0" y="564.1" width="7" height="5" fill="#e0a0e0" stroke="#000" stroke-width="0.5" /><rect x="1078.2" y="554.3" width="2" height="4" fill="#e0a0e0" stroke="#000" stroke-width="0.5" /><rect x="1098.1" y="546.2" width="3" height="5" fill="#e010d0" stroke="#000" stroke-width="0.5" /><rect x="1035.6" y="530.3" width="7" height="2" fill="#50a060" stroke="#000" stroke-width="0.5" /><rect x="1091.7" y="554.1" width="9" height="1.5" fill="#d878d8" stroke="#000" stroke-width="0.5" /><rect x="1049.7" y="556.4" width="1.5" height="1.5" fill="#e8e8f0" stroke="#000" stroke-width="0.5" /><rect x="1083.0" y="548.9" width="1.5" height="5" fill="#c8e0c0" stroke="#000" stroke-width="0.5" /><rect x="1057.1" y="554.6" width="7" height="4" fill="#c8e0c0" stroke="#000" stroke-width="0.5" /><rect x="1107.5" y="535.4" width="4" height="2.5" fill="#20d040" stroke="#000" stroke-width="0.5" /><rect x="1099.6" y="531.9" width="9" height="2.5" fill="#d8d49a" stroke="#000" stroke-width="0.5" /><rect x="1058.1" y="562.9" width="4" height="2" fill="#d8d49a" stroke="#000" stroke-width="0.5" /><rect x="1066.4" y="554.6" width="4" height="4" fill="#d8d49a" stroke="#000" stroke-width="0.5" /><rect x="1029.1" y="556.7" width="2" height="4" fill="#889088" stroke="#000" stroke-width="0.5" /><rect x="1038.4" y="540.9" width="2" height="5" fill="#e8e8f0" stroke="#000" stroke-width="0.5" /><rect x="1055.2" y="559.1" width="7" height="3" fill="#d878d8" stroke="#000" stroke-width="0.5" /><rect x="1074.1" y="560.7" width="3" height="4" fill="#20d040" stroke="#000" stroke-width="0.5" /><rect x="1065.1" y="566.2" width="3" height="1.5" fill="#d8d49a" stroke="#000" stroke-width="0.5" /><rect x="1041.4" y="537.5" width="7" height="3" fill="#d878d8" stroke="#000" stroke-width="0.5" /><rect x="1043.7" y="529.6" width="9" height="2.5" fill="#50a060" stroke="#000" stroke-width="0.5" /><rect x="1042.4" y="535.5" width="5" height="1.5" fill="#f0c0f0" stroke="#000" stroke-width="0.5" /><rect x="1112.7" y="563.4" width="4" height="3" fill="#d8d49a" stroke="#000" stroke-width="0.5" /><rect x="1030.3" y="534.4" width="5" height="1.5" fill="#707868" stroke="#000" stroke-width="0.5" /><rect x="1067.1" y="533.0" width="7" height="2.5" fill="#f0c0f0" stroke="#000" stroke-width="0.5" /><rect x="1071.9" y="540.3" width="2" height="3" fill="#e8e8f0" stroke="#000" stroke-width="0.5" /><rect x="1096.4" y="530.9" width="9" height="2" fill="#e8e4b4" stroke="#000" stroke-width="0.5" /><rect x="1113.7" y="561.4" width="7" height="4" fill="#e8e8f0" stroke="#000" stroke-width="0.5" /><rect x="1030.6" y="557.6" width="5" height="2" fill="#e8e8f0" stroke="#000" stroke-width="0.5" /><rect x="1085.2" y="541.6" width="9" height="5" fill="#707868" stroke="#000" stroke-width="0.5" /><rect x="1077.4" y="560.2" width="3" height="1.5" fill="#9a9ab8" stroke="#000" stroke-width="0.5" /><rect x="1053.4" y="533.9" width="3" height="5" fill="#707868" stroke="#000" stroke-width="0.5" /><rect x="1046.5" y="549.4" width="3" height="3" fill="#e010d0" stroke="#000" stroke-width="0.5" /><rect x="1045.2" y="538.4" width="3" height="4" fill="#20d040" stroke="#000" stroke-width="0.5" /><rect x="1102.9" y="533.4" width="9" height="4" fill="#20d040" stroke="#000" stroke-width="0.5" /><rect x="1077.5" y="548.8" width="7" height="2" fill="#e070e0" stroke="#000" stroke-width="0.5" /><rect x="1048.4" y="544.1" width="9" height="2.5" fill="#9a9ab8" stroke="#000" stroke-width="0.5" /><rect x="1065.2" y="554.4" width="3" height="5" fill="#e8e4b4" stroke="#000" stroke-width="0.5" /><rect x="1109.6" y="547.2" width="5" height="5" fill="#e8e8f0" stroke="#000" stroke-width="0.5" /><rect x="1104.0" y="530.0" width="5" height="1.5" fill="#e010d0" stroke="#000" stroke-width="0.5" /><rect x="1048.0" y="527.1" width="5" height="1.5" fill="#e8e4b4" stroke="#000" stroke-width="0.5" /><rect x="1113.9" y="539.4" width="9" height="2" fill="#d878d8" stroke="#000" stroke-width="0.5" /><rect x="1110.1" y="553.6" width="2" height="1.5" fill="#e0a0e0" stroke="#000" stroke-width="0.5" /><rect x="1073.8" y="566.3" width="7" height="4" fill="#e010d0" stroke="#000" stroke-width="0.5" /><rect x="1060.9" y="554.2" width="1.5" height="4" fill="#e8e8f0" stroke="#000" stroke-width="0.5" /><rect x="1077.8" y="564.0" width="7" height="1.5" fill="#e0a0e0" stroke="#000" stroke-width="0.5" /><rect x="1032.4" y="534.7" width="7" height="3" fill="#e0a0e0" stroke="#000" stroke-width="0.5" /><rect x="1072.5" y="565.9" width="5" height="1.5" fill="#20d040" stroke="#000" stroke-width="0.5" /><rect x="1105.3" y="537.2" width="2" height="5" fill="#e070e0" stroke="#000" stroke-width="0.5" /><rect x="1109.1" y="566.0" width="9" height="2" fill="#e0a0e0" stroke="#000" stroke-width="0.5" /><rect x="1108.8" y="527.8" width="4" height="4" fill="#889088" stroke="#000" stroke-width="0.5" /><rect x="1108.6" y="530.5" width="5" height="2" fill="#d878d8" stroke="#000" stroke-width="0.5" /><rect x="1029.5" y="538.9" width="3" height="1.5" fill="#e0a0e0" stroke="#000" stroke-width="0.5" /><rect x="1022.1" y="560.2" width="7" height="4" fill="#e010d0" stroke="#000" stroke-width="0.5" /><rect x="1019.1" y="529.7" width="9" height="2" fill="#50a060" stroke="#000" stroke-width="0.5" /><rect x="1099.0" y="543.3" width="3" height="2" fill="#e8e8f0" stroke="#000" stroke-width="0.5" /><rect x="1056.6" y="562.9" width="2" height="2.5" fill="#d878d8" stroke="#000" stroke-width="0.5" /><rect x="456.2" y="549.1" width="3" height="4" fill="#e8e8f0" stroke="#000" stroke-width="0.5" /><rect x="452.8" y="536.8" width="4" height="2" fill="#e8e4b4" stroke="#000" stroke-width="0.5" /><rect x="444.9" y="537.6" width="4" height="2" fill="#889088" stroke="#000" stroke-width="0.5" /><rect x="445.8" y="555.5" width="5" height="2.5" fill="#e070e0" stroke="#000" stroke-width="0.5" /><rect x="455.9" y="527.9" width="3" height="2" fill="#e010d0" stroke="#000" stroke-width="0.5" /><rect x="448.8" y="540.8" width="7" height="2" fill="#d878d8" stroke="#000" stroke-width="0.5" /><rect x="461.5" y="549.7" width="1.5" height="5" fill="#9a9ab8" stroke="#000" stroke-width="0.5" /><rect x="452.5" y="528.9" width="5" height="2" fill="#e8e8f0" stroke="#000" stroke-width="0.5" /><rect x="458.4" y="529.9" width="1.5" height="3" fill="#20d040" stroke="#000" stroke-width="0.5" /><rect x="451.9" y="555.2" width="2" height="2.5" fill="#e8e4b4" stroke="#000" stroke-width="0.5" /><rect x="450.9" y="539.1" width="5" height="5" fill="#e010d0" stroke="#000" stroke-width="0.5" /><rect x="453.4" y="561.4" width="1.5" height="1.5" fill="#d8d49a" stroke="#000" stroke-width="0.5" /><rect x="441.9" y="567.1" width="4" height="2" fill="#20d040" stroke="#000" stroke-width="0.5" /><rect x="442.8" y="533.7" width="4" height="2" fill="#889088" stroke="#000" stroke-width="0.5" /><rect x="449.9" y="566.1" width="2" height="5" fill="#889088" stroke="#000" stroke-width="0.5" /><rect x="554.2" y="535.1" width="2" height="5" fill="#9a9ab8" stroke="#000" stroke-width="0.5" /><rect x="550.9" y="557.5" width="7" height="3" fill="#e8e8f0" stroke="#000" stroke-width="0.5" /><rect x="524.4" y="532.0" width="3" height="2" fill="#e010d0" stroke="#000" stroke-width="0.5" /><rect x="556.1" y="557.5" width="7" height="1.5" fill="#c8e0c0" stroke="#000" stroke-width="0.5" /><rect x="521.0" y="534.7" width="1.5" height="2.5" fill="#d878d8" stroke="#000" stroke-width="0.5" /><rect x="544.6" y="549.1" width="1.5" height="1.5" fill="#9a9ab8" stroke="#000" stroke-width="0.5" /><rect x="505.9" y="565.7" width="9" height="5" fill="#f0c0f0" stroke="#000" stroke-width="0.5" /><rect x="513.3" y="540.9" width="5" height="1.5" fill="#707868" stroke="#000" stroke-width="0.5" /><rect x="530.1" y="564.5" width="5" height="3" fill="#e8e8f0" stroke="#000" stroke-width="0.5" /><rect x="536.4" y="562.5" width="4" height="1.5" fill="#e8e4b4" stroke="#000" stroke-width="0.5" /><rect x="512.7" y="546.7" width="7" height="1.5" fill="#d878d8" stroke="#000" stroke-width="0.5" /><rect x="544.7" y="543.8" width="1.5" height="2.5" fill="#f0c0f0" stroke="#000" stroke-width="0.5" /><rect x="507.4" y="543.9" width="9" height="2" fill="#e0a0e0" stroke="#000" stroke-width="0.5" /><rect x="506.3" y="544.8" width="4" height="4" fill="#e010d0" stroke="#000" stroke-width="0.5" /><rect x="529.2" y="534.7" width="1.5" height="2" fill="#707868" stroke="#000" stroke-width="0.5" /><rect x="555.5" y="541.1" width="9" height="4" fill="#e8e8f0" stroke="#000" stroke-width="0.5" /><rect x="540.8" y="537.5" width="7" height="2.5" fill="#f0c0f0" stroke="#000" stroke-width="0.5" /><rect x="523.5" y="564.1" width="5" height="4" fill="#e0a0e0" stroke="#000" stroke-width="0.5" /><rect x="527.3" y="551.6" width="3" height="2.5" fill="#d8d49a" stroke="#000" stroke-width="0.5" /><rect x="517.1" y="566.3" width="9" height="5" fill="#f0c0f0" stroke="#000" stroke-width="0.5" /><rect x="529.4" y="550.6" width="3" height="2" fill="#889088" stroke="#000" stroke-width="0.5" /><rect x="517.2" y="551.5" width="2" height="5" fill="#889088" stroke="#000" stroke-width="0.5" /><rect x="519.8" y="531.1" width="7" height="1.5" fill="#e8e8f0" stroke="#000" stroke-width="0.5" /><rect x="529.9" y="531.7" width="7" height="4" fill="#50a060" stroke="#000" stroke-width="0.5" /><rect x="540.7" y="554.8" width="4" height="2.5" fill="#d8d49a" stroke="#000" stroke-width="0.5" /><rect x="844.9" y="553.5" width="4" height="1.5" fill="#e010d0" stroke="#000" stroke-width="0.5" /><rect x="836.5" y="553.8" width="1.5" height="5" fill="#20d040" stroke="#000" stroke-width="0.5" /><rect x="858.0" y="538.8" width="4" height="1.5" fill="#e010d0" stroke="#000" stroke-width="0.5" /><rect x="835.2" y="529.1" width="5" height="3" fill="#d878d8" stroke="#000" stroke-width="0.5" /><rect x="834.4" y="564.9" width="5" height="1.5" fill="#e0a0e0" stroke="#000" stroke-width="0.5" /><rect x="837.7" y="529.4" width="1.5" height="3" fill="#d8d49a" stroke="#000" stroke-width="0.5" /><rect x="831.0" y="540.3" width="7" height="4" fill="#889088" stroke="#000" stroke-width="0.5" /><rect x="856.6" y="554.2" width="7" height="3" fill="#707868" stroke="#000" stroke-width="0.5" /><rect x="858.3" y="565.5" width="7" height="2" fill="#e070e0" stroke="#000" stroke-width="0.5" /><rect x="852.7" y="560.7" width="2" height="1.5" fill="#d8d49a" stroke="#000" stroke-width="0.5" /><rect x="836.0" y="537.3" width="9" height="1.5" fill="#889088" stroke="#000" stroke-width="0.5" /><rect x="841.5" y="554.1" width="7" height="3" fill="#e010d0" stroke="#000" stroke-width="0.5" /><rect x="858.2" y="533.7" width="3" height="2.5" fill="#50a060" stroke="#000" stroke-width="0.5" /><rect x="836.3" y="534.8" width="7" height="2.5" fill="#20d040" stroke="#000" stroke-width="0.5" /><rect x="850.7" y="555.1" width="4" height="3" fill="#50a060" stroke="#000" stroke-width="0.5" /><rect x="851.9" y="563.7" width="5" height="2.5" fill="#d8d49a" stroke="#000" stroke-width="0.5" /><rect x="847.1" y="547.7" width="4" height="5" fill="#e8e8f0" stroke="#000" stroke-width="0.5" /><rect x="827.3" y="564.1" width="4" height="2" fill="#9a9ab8" stroke="#000" stroke-width="0.5" /><rect x="847.6" y="559.6" width="7" height="2" fill="#e0a0e0" stroke="#000" stroke-width="0.5" /><rect x="836.4" y="538.5" width="2" height="1.5" fill="#e070e0" stroke="#000" stroke-width="0.5" /><rect x="583.8" y="634.4" width="4" height="3" fill="#e0a0e0" stroke="#000" stroke-width="0.5" /><rect x="593.3" y="605.1" width="4" height="4" fill="#e0a0e0" stroke="#000" stroke-width="0.5" /><rect x="569.0" y="604.6" width="6" height="1.5" fill="#e0a0e0" stroke="#000" stroke-width="0.5" /><rect x="559.1" y="623.7" width="2" height="4" fill="#50526a" stroke="#000" stroke-width="0.5" /><rect x="567.1" y="634.0" width="4" height="2" fill="#e8e4b4" stroke="#000" stroke-width="0.5" /><rect x="568.8" y="595.1" width="2" height="3" fill="#50526a" stroke="#000" stroke-width="0.5" /><rect x="577.1" y="634.7" width="6" height="2" fill="#e8e4b4" stroke="#000" stroke-width="0.5" /><rect x="593.6" y="627.5" width="2" height="1.5" fill="#e8e4b4" stroke="#000" stroke-width="0.5" /><rect x="573.2" y="622.9" width="4" height="4" fill="#e0a0e0" stroke="#000" stroke-width="0.5" /><rect x="577.2" y="600.5" width="2" height="2" fill="#9a9ab8" stroke="#000" stroke-width="0.5" /><rect x="711.6" y="607.2" width="4" height="3" fill="#e0a0e0" stroke="#000" stroke-width="0.5" /><rect x="714.8" y="614.7" width="6" height="1.5" fill="#10a050" stroke="#000" stroke-width="0.5" /><rect x="704.1" y="606.4" width="2" height="1.5" fill="#e0a0e0" stroke="#000" stroke-width="0.5" /><rect x="705.7" y="624.5" width="6" height="2" fill="#e8e4b4" stroke="#000" stroke-width="0.5" /><rect x="710.5" y="628.2" width="3" height="4" fill="#50526a" stroke="#000" stroke-width="0.5" /><rect x="714.3" y="621.2" width="2" height="1.5" fill="#9a9ab8" stroke="#000" stroke-width="0.5" /><rect x="705.1" y="619.4" width="6" height="1.5" fill="#e8e4b4" stroke="#000" stroke-width="0.5" /><rect x="701.5" y="612.0" width="6" height="1.5" fill="#50526a" stroke="#000" stroke-width="0.5" /><rect x="903.8" y="630.3" width="6" height="3" fill="#d878d8" stroke="#000" stroke-width="0.5" /><rect x="887.1" y="593.0" width="6" height="4" fill="#50526a" stroke="#000" stroke-width="0.5" /><rect x="885.0" y="627.6" width="4" height="4" fill="#50526a" stroke="#000" stroke-width="0.5" /><rect x="887.9" y="611.7" width="6" height="4" fill="#d8d8d8" stroke="#000" stroke-width="0.5" /><rect x="883.7" y="593.0" width="4" height="1.5" fill="#10a050" stroke="#000" stroke-width="0.5" /><rect x="897.8" y="620.1" width="6" height="4" fill="#e8e4b4" stroke="#000" stroke-width="0.5" /><rect x="901.9" y="595.4" width="3" height="3" fill="#50526a" stroke="#000" stroke-width="0.5" /><rect x="897.5" y="634.7" width="6" height="4" fill="#50526a" stroke="#000" stroke-width="0.5" /><rect x="895.6" y="602.2" width="2" height="3" fill="#e8e4b4" stroke="#000" stroke-width="0.5" /><rect x="878.5" y="610.7" width="6" height="3" fill="#d878d8" stroke="#000" stroke-width="0.5" /><rect x="425" y="530" width="15.5" height="13" fill="#d4006e" stroke="#000" stroke-width="0.8" /><circle cx="434.5" cy="536.5" r="3.6" fill="#707870" stroke="#000" stroke-width=".7"/><circle cx="434.5" cy="545" r="3.8" fill="#8a928a" stroke="#000" stroke-width=".7"/><rect x="425.6" y="544" width="4.9" height="12" fill="#d8d030" stroke="#000" stroke-width="0.8" /><rect x="425.6" y="556" width="11.4" height="7" fill="#dca042" stroke="#000" stroke-width="0.8" /><rect x="433" y="548" width="27" height="15.5" fill="#dca042" stroke="#000" stroke-width="0.8" /><line x1="433" y1="551" x2="460" y2="551" stroke="#000" stroke-width="0.9" /><line x1="433" y1="554" x2="460" y2="554" stroke="#000" stroke-width="0.9" /><line x1="433" y1="557" x2="460" y2="557" stroke="#000" stroke-width="0.9" /><line x1="433" y1="560" x2="460" y2="560" stroke="#000" stroke-width="0.9" /><rect x="425" y="563.5" width="36" height="10.5" fill="#6c6e86" /><rect x="441" y="527" width="20" height="21" fill="#0c0c10" /><rect x="443" y="530" width="2" height="6" fill="#b4b4c8" /><rect x="447" y="528" width="2" height="12" fill="#c8e0c0" /><rect x="451" y="529" width="5" height="7" fill="#203060" /><rect x="451" y="537" width="4" height="10" fill="#889088" /><rect x="457" y="530" width="2.5" height="16" fill="#c8e0c0" /><rect x="443" y="540" width="3" height="7" fill="#c8e0c0" /><rect x="441" y="551.6" width="9.4" height="20.4" fill="#e010d0" stroke="#000" stroke-width="0.8" /><rect x="460.5" y="527" width="9.5" height="46" fill="#d8d49a" /><rect x="462" y="551" width="5" height="5" fill="#e88010" stroke="#000" stroke-width="0.8" /><rect x="462.5" y="541" width="5.5" height="4" fill="#e8e4e0" stroke="#000" stroke-width="0.8" /><rect x="463" y="537" width="3" height="2" fill="#e01020" /><rect x="467.8" y="527" width="3.7" height="29" fill="#10c8d8" stroke="#000" stroke-width="0.8" /><rect x="467.8" y="551" width="10.0" height="5.6" fill="#10c8d8" stroke="#000" stroke-width="0.8" /><rect x="472.0" y="527" width="8.8" height="18" fill="url(#cyll)" stroke="#000" stroke-width="0.7" /><rect x="473.8" y="545" width="6.0" height="5" fill="#8888a0" stroke="#000" stroke-width="0.8" /><rect x="483.0" y="527" width="5.8" height="34" fill="#10c8d8" stroke="#000" stroke-width="0.8" /><rect x="492.0" y="527" width="8.8" height="19.7" fill="url(#cyll)" stroke="#000" stroke-width="0.7" /><rect x="493.8" y="546.7" width="6.0" height="5.3" fill="#8888a0" stroke="#000" stroke-width="0.8" /><rect x="502.0" y="527" width="3.6" height="25" fill="#10c8d8" stroke="#000" stroke-width="0.8" /><rect x="494.3" y="551.6" width="11.3" height="11.8" fill="#10a0a8" stroke="#000" stroke-width="0.8" /><rect x="486.8" y="556" width="4.0" height="10" fill="#10c8d8" stroke="#000" stroke-width="0.8" /><rect x="506.8" y="533" width="5.0" height="15" fill="#b4b4c8" stroke="#000" stroke-width="0.8" /><rect x="512.8" y="540" width="5.0" height="16" fill="#b4b4c8" stroke="#000" stroke-width="0.8" /><rect x="508.8" y="553.5" width="9.0" height="12.5" fill="#e88010" stroke="#000" stroke-width="0.8" /><rect x="500.8" y="556" width="14" height="8" fill="#787c78" stroke="#000" stroke-width="0.7" rx="3"/><rect x="505.8" y="566" width="8.0" height="5" fill="#e88010" stroke="#000" stroke-width="0.8" /><rect x="519.0" y="527" width="5.0" height="45" fill="#d070d0" stroke="#000" stroke-width="0.8" /><rect x="528.0" y="527" width="7.4" height="16" fill="url(#cylb)" stroke="#000" stroke-width="0.7" /><rect x="525.5" y="544.8" width="13.5" height="27.2" fill="#b4b4c8" stroke="#000" stroke-width="0.8" /><path d="M530.8 551.0h3M532.3 549.5v3" stroke="#000" stroke-width="0.8"/><rect x="541.8" y="544" width="1.6" height="28" fill="#a8a8c0" /><rect x="544.8" y="544" width="1.6" height="28" fill="#a8a8c0" /><rect x="547.8" y="544" width="1.6" height="28" fill="#a8a8c0" /><rect x="550.8" y="544" width="1.6" height="28" fill="#a8a8c0" /><rect x="553.8" y="544" width="1.6" height="28" fill="#a8a8c0" /><rect x="540.8" y="527" width="3.0" height="17" fill="#e4e4e4" stroke="#000" stroke-width="0.8" /><rect x="546.8" y="530" width="5.0" height="18" fill="#101010" /><rect x="557.0" y="554.7" width="5.7" height="16.8" fill="url(#cylo)" stroke="#000" stroke-width="0.7" /><rect x="560.0" y="549.8" width="16.0" height="8.7" fill="#20d040" stroke="#000" stroke-width="0.8" /><rect x="559.3" y="546" width="16.5" height="3.8" fill="#18a838" stroke="#000" stroke-width="0.8" /><rect x="561.8" y="558.5" width="14.5" height="3.5" fill="#b4b4c8" stroke="#000" stroke-width="0.8" /><rect x="562.8" y="562" width="14.0" height="9" fill="#18181c" stroke="#000" stroke-width="0.8" /><circle cx="565.3" cy="565" r="1" fill="#c8c8d8"/><circle cx="565.3" cy="568.5" r="1" fill="#c8c8d8"/><circle cx="569.3" cy="565" r="1" fill="#c8c8d8"/><circle cx="569.3" cy="568.5" r="1" fill="#c8c8d8"/><circle cx="573.3" cy="565" r="1" fill="#c8c8d8"/><circle cx="573.3" cy="568.5" r="1" fill="#c8c8d8"/><line x1="590" y1="542.5" x2="640" y2="540.5" stroke="#c0c0e0" stroke-width="1" /><rect x="592" y="563" width="20" height="8" fill="#707868" stroke="#000" stroke-width="0.6" rx="2"/><rect x="615" y="565" width="17" height="6" fill="#707868" stroke="#000" stroke-width="0.6" rx="2"/><rect x="655" y="562" width="17" height="8" fill="#707868" stroke="#000" stroke-width="0.6" rx="2"/><rect x="700" y="560" width="30" height="8" fill="#707868" stroke="#000" stroke-width="0.6" rx="2"/><rect x="690" y="566" width="22" height="5" fill="#707868" stroke="#000" stroke-width="0.6" rx="2"/><rect x="742" y="561" width="18" height="10" fill="#707868" stroke="#000" stroke-width="0.6" rx="2"/><rect x="596" y="556" width="16" height="4" fill="#707868" stroke="#000" stroke-width="0.6" rx="2"/><rect x="620" y="560" width="8" height="5" fill="#50d070" stroke="#000" stroke-width="0.8" /><rect x="618" y="529" width="15" height="5" fill="#50c060" stroke="#000" stroke-width="0.8" /><rect x="635" y="565" width="11" height="4" fill="#e8e8e8" stroke="#000" stroke-width="0.8" /><rect x="639" y="527" width="11" height="9" fill="#b88030" stroke="#000" stroke-width="0.8" /><rect x="651" y="528" width="18" height="8" fill="#b88838" stroke="#000" stroke-width="0.8" /><rect x="645" y="527" width="2" height="9" fill="#dca042" /><rect x="655" y="527" width="13" height="3" fill="#b0a820" stroke="#000" stroke-width="0.8" /><rect x="635" y="528" width="2" height="5" fill="#dca042" stroke="#000" stroke-width="0.8" /><rect x="637.8" y="533.6" width="5" height="9.6" fill="url(#cylo)" stroke="#000" stroke-width="0.7" /><rect x="631.6" y="545" width="16.1" height="17" fill="#a0a8a0" stroke="#000" stroke-width="0.8" /><rect x="633" y="551" width="13" height="2" fill="#606860" /><rect x="636.5" y="541.5" width="5.5" height="8.5" fill="#8010a0" stroke="#000" stroke-width="0.8" /><rect x="656" y="561" width="10" height="10" fill="#d878d8" stroke="#000" stroke-width="0.8" /><rect x="659.5" y="564" width="6" height="7" fill="#9aa0c0" stroke="#000" stroke-width="0.6" rx="2"/><rect x="660" y="553" width="7" height="5" fill="#8a8aa8" stroke="#000" stroke-width="0.6" /><line x1="666" y1="556" x2="680" y2="555" stroke="#30e040" stroke-width="1.4" /><rect x="674" y="558" width="8" height="5" fill="#e0a0e0" stroke="#000" stroke-width="0.8" /><rect x="676" y="532" width="8" height="4" fill="#e0a0e0" stroke="#000" stroke-width="0.8" /><rect x="672" y="547" width="4" height="10" fill="#d878d8" stroke="#000" stroke-width="0.8" /><rect x="683" y="527" width="13" height="44" fill="url(#cylw)" stroke="#000" stroke-width="0.7" /><rect x="707" y="526.8" width="5" height="8.7" fill="url(#cylo)" stroke="#000" stroke-width="0.7" /><polygon points="717,545 730,540 731,543 718,548" fill="#b8b8d8" stroke="#000" stroke-width="0.6" /><polygon points="698,561 738,548 739,553 700,566" fill="#606858" stroke="#000" stroke-width="0.6" /><polygon points="726.5,571 731,553 734.5,553 734.5,571" fill="#60c860" stroke="#000" stroke-width="0.7" /><rect x="719" y="560" width="6" height="11" fill="#e0a0e0" stroke="#000" stroke-width="0.8" /><rect x="708" y="553" width="14" height="3" fill="#e0a0e0" stroke="#000" stroke-width="0.8" /><rect x="734" y="526" width="5" height="37" fill="#d8d49a" stroke="#000" stroke-width="0.8" /><rect x="739" y="526" width="4" height="25" fill="#d070d0" stroke="#000" stroke-width="0.8" /><rect x="743" y="527.4" width="20" height="14.6" fill="#d4006e" stroke="#000" stroke-width="0.8" /><circle cx="757.5" cy="535" r="3.6" fill="#707870" stroke="#000" stroke-width=".7"/><circle cx="757.5" cy="543.5" r="3.8" fill="#8a928a" stroke="#000" stroke-width=".7"/><rect x="748.8" y="543" width="5.0" height="10" fill="#d8d030" stroke="#000" stroke-width="0.8" /><polygon points="752,557 768,551 769,555 753,561" fill="#f0f0f0" stroke="#000" stroke-width="0.5" /><rect x="763" y="527" width="12" height="18" fill="#0c0c10" /><rect x="764.5" y="530" width="1.5" height="14" fill="#b4b4c8" /><rect x="768" y="529" width="2" height="12" fill="#c8e0c0" /><rect x="771.5" y="530" width="1.5" height="15" fill="#b4b4c8" /><polygon points="775,531 781,526 790,526 786,531" fill="#e010d0" stroke="#000" stroke-width="0.6" /><rect x="776" y="529" width="12.5" height="41" fill="url(#cylw)" stroke="#000" stroke-width="0.7" /><rect x="773.6" y="545.4" width="14.5" height="7.6" fill="#b8b8d8" stroke="#000" stroke-width="0.7" rx="3"/><rect x="790.6" y="527" width="3.7" height="29" fill="#10c8d8" stroke="#000" stroke-width="0.8" /><rect x="790.6" y="551" width="10.0" height="5.6" fill="#10c8d8" stroke="#000" stroke-width="0.8" /><rect x="794.8" y="527" width="8.8" height="18" fill="url(#cyll)" stroke="#000" stroke-width="0.7" /><rect x="796.6" y="545" width="6.0" height="5" fill="#8888a0" stroke="#000" stroke-width="0.8" /><rect x="805.8" y="527" width="5.8" height="34" fill="#10c8d8" stroke="#000" stroke-width="0.8" /><rect x="814.8" y="527" width="8.8" height="19.7" fill="url(#cyll)" stroke="#000" stroke-width="0.7" /><rect x="816.6" y="546.7" width="6.0" height="5.3" fill="#8888a0" stroke="#000" stroke-width="0.8" /><rect x="824.8" y="527" width="3.6" height="25" fill="#10c8d8" stroke="#000" stroke-width="0.8" /><rect x="817.1" y="551.6" width="11.3" height="11.8" fill="#10a0a8" stroke="#000" stroke-width="0.8" /><rect x="809.6" y="556" width="4.0" height="10" fill="#10c8d8" stroke="#000" stroke-width="0.8" /><rect x="829.6" y="533" width="5.0" height="15" fill="#b4b4c8" stroke="#000" stroke-width="0.8" /><rect x="835.6" y="540" width="5.0" height="16" fill="#b4b4c8" stroke="#000" stroke-width="0.8" /><rect x="831.6" y="553.5" width="9.0" height="12.5" fill="#e88010" stroke="#000" stroke-width="0.8" /><rect x="823.6" y="556" width="14" height="8" fill="#787c78" stroke="#000" stroke-width="0.7" rx="3"/><rect x="828.6" y="566" width="8.0" height="5" fill="#e88010" stroke="#000" stroke-width="0.8" /><rect x="841.8" y="527" width="5.0" height="45" fill="#d070d0" stroke="#000" stroke-width="0.8" /><rect x="850.8" y="527" width="7.4" height="16" fill="url(#cylb)" stroke="#000" stroke-width="0.7" /><rect x="848.3" y="544.8" width="13.5" height="27.2" fill="#b4b4c8" stroke="#000" stroke-width="0.8" /><path d="M853.6 551.0h3M855.1 549.5v3" stroke="#000" stroke-width="0.8"/><rect x="864.6" y="544" width="1.6" height="28" fill="#a8a8c0" /><rect x="867.6" y="544" width="1.6" height="28" fill="#a8a8c0" /><rect x="870.6" y="544" width="1.6" height="28" fill="#a8a8c0" /><rect x="873.6" y="544" width="1.6" height="28" fill="#a8a8c0" /><rect x="876.6" y="544" width="1.6" height="28" fill="#a8a8c0" /><rect x="863.6" y="527" width="3.0" height="17" fill="#e4e4e4" stroke="#000" stroke-width="0.8" /><rect x="869.6" y="530" width="5.0" height="18" fill="#101010" /><rect x="879.8000000000001" y="554.7" width="5.7" height="16.8" fill="url(#cylo)" stroke="#000" stroke-width="0.7" /><rect x="882.8" y="549.8" width="16.0" height="8.7" fill="#20d040" stroke="#000" stroke-width="0.8" /><rect x="882.1" y="546" width="16.5" height="3.8" fill="#18a838" stroke="#000" stroke-width="0.8" /><rect x="884.6" y="558.5" width="14.5" height="3.5" fill="#b4b4c8" stroke="#000" stroke-width="0.8" /><rect x="885.6" y="562" width="14.0" height="9" fill="#18181c" stroke="#000" stroke-width="0.8" /><circle cx="888.1" cy="565" r="1" fill="#c8c8d8"/><circle cx="888.1" cy="568.5" r="1" fill="#c8c8d8"/><circle cx="892.1" cy="565" r="1" fill="#c8c8d8"/><circle cx="892.1" cy="568.5" r="1" fill="#c8c8d8"/><circle cx="896.1" cy="565" r="1" fill="#c8c8d8"/><circle cx="896.1" cy="568.5" r="1" fill="#c8c8d8"/><polygon points="900.8,540.5 920,540.5 914,549.8 906,549.8" fill="#d8d49a" stroke="#000" stroke-width="0.7" /><rect x="915.7" y="552" width="13.3" height="11.4" fill="#800010" stroke="#000" stroke-width="0.8" /><rect x="918" y="555" width="9" height="5" fill="#50000a" stroke="#000" stroke-width="0.8" /><rect x="930" y="548" width="8" height="10" fill="#707870" stroke="#000" stroke-width="0.6" rx="3"/><rect x="931" y="561" width="8" height="8" fill="#8a928a" stroke="#000" stroke-width="0.6" rx="3"/><rect x="917" y="564" width="7" height="4" fill="#10c8d8" stroke="#000" stroke-width="0.8" /><rect x="918.5" y="568" width="4.5" height="7" fill="#f0f0f0" stroke="#000" stroke-width="0.8" /><rect x="925" y="565" width="10" height="5" fill="#a0c020" stroke="#000" stroke-width="0.8" /><rect x="937.4" y="546.7" width="17.4" height="18.0" fill="#d4006e" stroke="#000" stroke-width="0.8" /><circle cx="933" cy="553.5" r="3.6" fill="#707870" stroke="#000" stroke-width=".7"/><rect x="945" y="538" width="8" height="8" fill="#d4006e" stroke="#000" stroke-width="0.8" /><rect x="931" y="531" width="15" height="5" fill="#b4b4c8" stroke="#000" stroke-width="0.8" /><rect x="938" y="528" width="6" height="3" fill="#20d040" stroke="#000" stroke-width="0.8" /><rect x="963" y="547" width="12" height="9" fill="#707868" stroke="#000" stroke-width="0.6" rx="2"/><rect x="966" y="559" width="14" height="7" fill="#707868" stroke="#000" stroke-width="0.6" rx="2"/><rect x="991" y="561" width="15" height="6" fill="#707868" stroke="#000" stroke-width="0.6" rx="2"/><rect x="1019" y="556" width="33" height="7" fill="#686c60" stroke="#000" stroke-width="0.6" rx="2"/><rect x="1025" y="547" width="25" height="5" fill="#686c60" stroke="#000" stroke-width="0.6" rx="2"/><rect x="983" y="551" width="7" height="5" fill="#8a8aa8" stroke="#000" stroke-width="0.6" /><line x1="990" y1="554" x2="1003" y2="552.5" stroke="#30e040" stroke-width="1.4" /><rect x="980" y="556" width="10" height="10" fill="#d878d8" stroke="#000" stroke-width="0.8" /><rect x="995" y="556" width="11" height="4" fill="#e0a0e0" stroke="#000" stroke-width="0.8" /><rect x="1007" y="524" width="11.7" height="44.4" fill="url(#cylw)" stroke="#000" stroke-width="0.7" /><rect x="1030.5" y="525" width="4.3" height="8" fill="url(#cylo)" stroke="#000" stroke-width="0.7" /><polygon points="1019,560 1053,546 1055,551 1021,566" fill="#606858" stroke="#000" stroke-width="0.6" /><rect x="1099" y="525" width="12" height="32" fill="url(#cylw)" stroke="#000" stroke-width="0.7" /><polygon points="1040,540 1052,535 1053.5,538.5 1041.5,543.5" fill="#b8b8d8" stroke="#000" stroke-width="0.6" /><polygon points="1050,537 1090,524 1092,528 1052,541" fill="#a8a8c8" stroke="#000" stroke-width="0.6" /><polygon points="1058,534 1092,524.5 1096,540 1066,550" fill="#787c74" stroke="#000" stroke-width="0.7" /><polygon points="1066,530 1074,527.5 1077,538 1069,540.5" fill="#9aa09a" stroke="#000" stroke-width="0.6" /><polygon points="1079,526.5 1087,524 1090,534 1082,536.5" fill="#9aa09a" stroke="#000" stroke-width="0.6" /><polygon points="1088,529 1117,523.5 1117,527 1089,533" fill="#e010d0" stroke="#000" stroke-width="0.5" /><polygon points="1056,541 1068,537 1069,540 1057,544" fill="#e010d0" /><polygon points="1073,553 1094,545 1095,549 1074,557" fill="#f0f0f0" stroke="#000" stroke-width="0.5" /><polygon points="1093,546 1108,544 1109,551 1095,553" fill="#b8b8d8" stroke="#000" stroke-width="0.6" /><rect x="1108" y="544" width="12" height="8" fill="#808880" stroke="#000" stroke-width="0.8" /><rect x="1111" y="533" width="5" height="20" fill="#d070d0" stroke="#000" stroke-width="0.8" /><rect x="1052" y="563" width="12" height="6" fill="#e8e4b4" stroke="#000" stroke-width="0.8" /><rect x="1048" y="560" width="6" height="5" fill="#10a050" stroke="#000" stroke-width="0.8" /><rect x="1041.7" y="569" width="67.0" height="10.6" fill="#08080a" stroke="#000" stroke-width="0.8" /><line x1="1044" y1="571" x2="1090" y2="571" stroke="#d8d49a" stroke-width="0.8" stroke-dasharray="5 2 2 3"/><line x1="1044" y1="573" x2="1090" y2="573" stroke="#d8d49a" stroke-width="0.8" stroke-dasharray="5 2 2 3"/><line x1="1044" y1="575" x2="1090" y2="575" stroke="#d8d49a" stroke-width="0.8" stroke-dasharray="5 2 2 3"/><line x1="1046" y1="578" x2="1100" y2="578" stroke="#e050a0" stroke-width="0.8" stroke-dasharray="1 6"/><polygon points="425,574.6 1041,572.2 1041,575 425,577.4" fill="#d8d49a" stroke="#000" stroke-width="0.6" /><polygon points="425,579 1031,576.3 1031,588.2 425,590.6" fill="#b4b4c8" stroke="#000" stroke-width="0.9" /><line x1="425" y1="585.6" x2="1031" y2="583" stroke="#000" stroke-width="0.9" /><line x1="539.5" y1="578" x2="539.5" y2="590" stroke="#000" stroke-width="1.6" /><line x1="664.4" y1="578" x2="664.4" y2="590" stroke="#000" stroke-width="1.6" /><line x1="789.8" y1="578" x2="789.8" y2="590" stroke="#000" stroke-width="1.6" /><line x1="915" y1="578" x2="915" y2="590" stroke="#000" stroke-width="1.6" /><rect x="431" y="580.5871000000001" width="6" height="2.6" fill="#d8d49a" stroke="#000" stroke-width="0.7" /><rect x="477" y="580.1871000000001" width="7" height="3.2" fill="#111" /><rect x="523" y="580.1871000000001" width="7" height="3.2" fill="#111" /><rect x="442" y="581.4871" width="1.6" height="1.3" fill="#111" /><rect x="448" y="581.4871" width="1.6" height="1.3" fill="#111" /><rect x="466" y="581.4871" width="1.6" height="1.3" fill="#111" /><rect x="471" y="581.4871" width="1.6" height="1.3" fill="#111" /><rect x="488" y="581.4871" width="1.6" height="1.3" fill="#111" /><rect x="494" y="581.4871" width="1.6" height="1.3" fill="#111" /><rect x="512" y="581.4871" width="1.6" height="1.3" fill="#111" /><rect x="517" y="581.4871" width="1.6" height="1.3" fill="#111" /><rect x="443" y="586.9871" width="1.5" height="1.5" fill="#111" /><rect x="462" y="586.9871" width="1.5" height="1.5" fill="#111" /><rect x="481" y="586.9871" width="1.5" height="1.5" fill="#111" /><rect x="500" y="586.9871" width="1.5" height="1.5" fill="#111" /><rect x="519" y="586.9871" width="1.5" height="1.5" fill="#111" /><rect x="538" y="586.9871" width="1.5" height="1.5" fill="#111" /><rect x="548" y="580.0840000000001" width="6" height="2.6" fill="#d8d49a" stroke="#000" stroke-width="0.7" /><rect x="594" y="579.6840000000001" width="7" height="3.2" fill="#111" /><rect x="640" y="579.6840000000001" width="7" height="3.2" fill="#111" /><rect x="559" y="580.984" width="1.6" height="1.3" fill="#111" /><rect x="565" y="580.984" width="1.6" height="1.3" fill="#111" /><rect x="583" y="580.984" width="1.6" height="1.3" fill="#111" /><rect x="588" y="580.984" width="1.6" height="1.3" fill="#111" /><rect x="605" y="580.984" width="1.6" height="1.3" fill="#111" /><rect x="611" y="580.984" width="1.6" height="1.3" fill="#111" /><rect x="629" y="580.984" width="1.6" height="1.3" fill="#111" /><rect x="634" y="580.984" width="1.6" height="1.3" fill="#111" /><rect x="560" y="586.484" width="1.5" height="1.5" fill="#111" /><rect x="579" y="586.484" width="1.5" height="1.5" fill="#111" /><rect x="598" y="586.484" width="1.5" height="1.5" fill="#111" /><rect x="617" y="586.484" width="1.5" height="1.5" fill="#111" /><rect x="636" y="586.484" width="1.5" height="1.5" fill="#111" /><rect x="655" y="586.484" width="1.5" height="1.5" fill="#111" /><rect x="673" y="579.5465" width="6" height="2.6" fill="#d8d49a" stroke="#000" stroke-width="0.7" /><rect x="719" y="579.1465000000001" width="7" height="3.2" fill="#111" /><rect x="765" y="579.1465000000001" width="7" height="3.2" fill="#111" /><rect x="684" y="580.4465" width="1.6" height="1.3" fill="#111" /><rect x="690" y="580.4465" width="1.6" height="1.3" fill="#111" /><rect x="708" y="580.4465" width="1.6" height="1.3" fill="#111" /><rect x="713" y="580.4465" width="1.6" height="1.3" fill="#111" /><rect x="730" y="580.4465" width="1.6" height="1.3" fill="#111" /><rect x="736" y="580.4465" width="1.6" height="1.3" fill="#111" /><rect x="754" y="580.4465" width="1.6" height="1.3" fill="#111" /><rect x="759" y="580.4465" width="1.6" height="1.3" fill="#111" /><rect x="685" y="585.9465" width="1.5" height="1.5" fill="#111" /><rect x="704" y="585.9465" width="1.5" height="1.5" fill="#111" /><rect x="723" y="585.9465" width="1.5" height="1.5" fill="#111" /><rect x="742" y="585.9465" width="1.5" height="1.5" fill="#111" /><rect x="761" y="585.9465" width="1.5" height="1.5" fill="#111" /><rect x="780" y="585.9465" width="1.5" height="1.5" fill="#111" /><rect x="798" y="579.009" width="6" height="2.6" fill="#d8d49a" stroke="#000" stroke-width="0.7" /><rect x="844" y="578.609" width="7" height="3.2" fill="#111" /><rect x="890" y="578.609" width="7" height="3.2" fill="#111" /><rect x="809" y="579.909" width="1.6" height="1.3" fill="#111" /><rect x="815" y="579.909" width="1.6" height="1.3" fill="#111" /><rect x="833" y="579.909" width="1.6" height="1.3" fill="#111" /><rect x="838" y="579.909" width="1.6" height="1.3" fill="#111" /><rect x="855" y="579.909" width="1.6" height="1.3" fill="#111" /><rect x="861" y="579.909" width="1.6" height="1.3" fill="#111" /><rect x="879" y="579.909" width="1.6" height="1.3" fill="#111" /><rect x="884" y="579.909" width="1.6" height="1.3" fill="#111" /><rect x="810" y="585.409" width="1.5" height="1.5" fill="#111" /><rect x="829" y="585.409" width="1.5" height="1.5" fill="#111" /><rect x="848" y="585.409" width="1.5" height="1.5" fill="#111" /><rect x="867" y="585.409" width="1.5" height="1.5" fill="#111" /><rect x="886" y="585.409" width="1.5" height="1.5" fill="#111" /><rect x="905" y="585.409" width="1.5" height="1.5" fill="#111" /><rect x="923" y="578.4715" width="6" height="2.6" fill="#d8d49a" stroke="#000" stroke-width="0.7" /><rect x="969" y="578.0715" width="7" height="3.2" fill="#111" /><rect x="1015" y="578.0715" width="7" height="3.2" fill="#111" /><rect x="934" y="579.3715" width="1.6" height="1.3" fill="#111" /><rect x="940" y="579.3715" width="1.6" height="1.3" fill="#111" /><rect x="958" y="579.3715" width="1.6" height="1.3" fill="#111" /><rect x="963" y="579.3715" width="1.6" height="1.3" fill="#111" /><rect x="980" y="579.3715" width="1.6" height="1.3" fill="#111" /><rect x="986" y="579.3715" width="1.6" height="1.3" fill="#111" /><rect x="1004" y="579.3715" width="1.6" height="1.3" fill="#111" /><rect x="1009" y="579.3715" width="1.6" height="1.3" fill="#111" /><rect x="935" y="584.8715" width="1.5" height="1.5" fill="#111" /><rect x="954" y="584.8715" width="1.5" height="1.5" fill="#111" /><rect x="973" y="584.8715" width="1.5" height="1.5" fill="#111" /><rect x="992" y="584.8715" width="1.5" height="1.5" fill="#111" /><rect x="1011" y="584.8715" width="1.5" height="1.5" fill="#111" /><rect x="1030" y="584.8715" width="1.5" height="1.5" fill="#111" /><polygon points="562,576 567.6,576 568.6,591.5 563,591.5" fill="#10c8d8" stroke="#000" stroke-width="0.8" /><circle cx="565.8" cy="588.5" r="1" fill="#0a5860"/><polygon points="762,576 767.6,576 768.6,591.5 763,591.5" fill="#10c8d8" stroke="#000" stroke-width="0.8" /><circle cx="765.8" cy="588.5" r="1" fill="#0a5860"/><polygon points="830.7,576 836.3000000000001,576 837.3000000000001,591.5 831.7,591.5" fill="#10c8d8" stroke="#000" stroke-width="0.8" /><circle cx="834.5" cy="588.5" r="1" fill="#0a5860"/><polygon points="887,576 892.6,576 893.6,591.5 888,591.5" fill="#10c8d8" stroke="#000" stroke-width="0.8" /><circle cx="890.8" cy="588.5" r="1" fill="#0a5860"/><polygon points="1031,572.7 1036,572.7 1036,589 1031,589" fill="#10c8d8" stroke="#000" stroke-width="0.8" /><rect x="440" y="571.5" width="16" height="5.0" fill="#e010d0" stroke="#000" stroke-width="0.8" /><rect x="495" y="571.5" width="10.5" height="5.0" fill="#e010d0" stroke="#000" stroke-width="0.8" /><rect x="763.7" y="571.5" width="10.0" height="5.0" fill="#e010d0" stroke="#000" stroke-width="0.8" /><rect x="825" y="571.5" width="12" height="5.0" fill="#e010d0" stroke="#000" stroke-width="0.8" /><rect x="889" y="571.5" width="10" height="5.0" fill="#e010d0" stroke="#000" stroke-width="0.8" /><rect x="700" y="571.5" width="9" height="5.0" fill="#e010d0" stroke="#000" stroke-width="0.8" /><rect x="1012" y="571.5" width="9" height="5.0" fill="#e010d0" stroke="#000" stroke-width="0.8" /><polygon points="434,572 435.2,567.5 436.8,567.5 438,572" fill="#e88878" stroke="#000" stroke-width="0.5" /><line x1="436" y1="567.5" x2="436" y2="564" stroke="#d0d0e0" stroke-width="0.8" /><polygon points="465,572 466.2,567.5 467.8,567.5 469,572" fill="#e88878" stroke="#000" stroke-width="0.5" /><line x1="467" y1="567.5" x2="467" y2="564" stroke="#d0d0e0" stroke-width="0.8" /><polygon points="484,572 485.2,567.5 486.8,567.5 488,572" fill="#e88878" stroke="#000" stroke-width="0.5" /><line x1="486" y1="567.5" x2="486" y2="564" stroke="#d0d0e0" stroke-width="0.8" /><polygon points="508,572 509.2,567.5 510.8,567.5 512,572" fill="#e88878" stroke="#000" stroke-width="0.5" /><line x1="510" y1="567.5" x2="510" y2="564" stroke="#d0d0e0" stroke-width="0.8" /><polygon points="526,572 527.2,567.5 528.8,567.5 530,572" fill="#e88878" stroke="#000" stroke-width="0.5" /><line x1="528" y1="567.5" x2="528" y2="564" stroke="#d0d0e0" stroke-width="0.8" /><polygon points="551,572 552.2,567.5 553.8,567.5 555,572" fill="#e88878" stroke="#000" stroke-width="0.5" /><line x1="553" y1="567.5" x2="553" y2="564" stroke="#d0d0e0" stroke-width="0.8" /><polygon points="630,572 631.2,567.5 632.8,567.5 634,572" fill="#e88878" stroke="#000" stroke-width="0.5" /><line x1="632" y1="567.5" x2="632" y2="564" stroke="#d0d0e0" stroke-width="0.8" /><polygon points="655,572 656.2,567.5 657.8,567.5 659,572" fill="#e88878" stroke="#000" stroke-width="0.5" /><line x1="657" y1="567.5" x2="657" y2="564" stroke="#d0d0e0" stroke-width="0.8" /><polygon points="676,572 677.2,567.5 678.8,567.5 680,572" fill="#e88878" stroke="#000" stroke-width="0.5" /><line x1="678" y1="567.5" x2="678" y2="564" stroke="#d0d0e0" stroke-width="0.8" /><polygon points="704,572 705.2,567.5 706.8,567.5 708,572" fill="#e88878" stroke="#000" stroke-width="0.5" /><line x1="706" y1="567.5" x2="706" y2="564" stroke="#d0d0e0" stroke-width="0.8" /><polygon points="731,572 732.2,567.5 733.8,567.5 735,572" fill="#e88878" stroke="#000" stroke-width="0.5" /><line x1="733" y1="567.5" x2="733" y2="564" stroke="#d0d0e0" stroke-width="0.8" /><polygon points="756,572 757.2,567.5 758.8,567.5 760,572" fill="#e88878" stroke="#000" stroke-width="0.5" /><line x1="758" y1="567.5" x2="758" y2="564" stroke="#d0d0e0" stroke-width="0.8" /><polygon points="800,572 801.2,567.5 802.8,567.5 804,572" fill="#e88878" stroke="#000" stroke-width="0.5" /><line x1="802" y1="567.5" x2="802" y2="564" stroke="#d0d0e0" stroke-width="0.8" /><polygon points="816,572 817.2,567.5 818.8,567.5 820,572" fill="#e88878" stroke="#000" stroke-width="0.5" /><line x1="818" y1="567.5" x2="818" y2="564" stroke="#d0d0e0" stroke-width="0.8" /><polygon points="842,572 843.2,567.5 844.8,567.5 846,572" fill="#e88878" stroke="#000" stroke-width="0.5" /><line x1="844" y1="567.5" x2="844" y2="564" stroke="#d0d0e0" stroke-width="0.8" /><polygon points="862,572 863.2,567.5 864.8,567.5 866,572" fill="#e88878" stroke="#000" stroke-width="0.5" /><line x1="864" y1="567.5" x2="864" y2="564" stroke="#d0d0e0" stroke-width="0.8" /><polygon points="883,572 884.2,567.5 885.8,567.5 887,572" fill="#e88878" stroke="#000" stroke-width="0.5" /><line x1="885" y1="567.5" x2="885" y2="564" stroke="#d0d0e0" stroke-width="0.8" /><polygon points="905,572 906.2,567.5 907.8,567.5 909,572" fill="#e88878" stroke="#000" stroke-width="0.5" /><line x1="907" y1="567.5" x2="907" y2="564" stroke="#d0d0e0" stroke-width="0.8" /><polygon points="1005,572 1006.2,567.5 1007.8,567.5 1009,572" fill="#e88878" stroke="#000" stroke-width="0.5" /><line x1="1007" y1="567.5" x2="1007" y2="564" stroke="#d0d0e0" stroke-width="0.8" /><polygon points="1030,572 1031.2,567.5 1032.8,567.5 1034,572" fill="#e88878" stroke="#000" stroke-width="0.5" /><line x1="1032" y1="567.5" x2="1032" y2="564" stroke="#d0d0e0" stroke-width="0.8" /><rect x="942.4" y="586" width="13.6" height="14" fill="url(#cyll)" stroke="#000" stroke-width="0.7" /><path d="M942.4 575 Q944 584 972 594.4 H988 Q999 586 999.5 574 Z" fill="url(#cylg)" stroke="#000" stroke-width=".8"/><ellipse cx="971" cy="574.5" rx="28.5" ry="7" fill="#c4c4d8" stroke="#000" stroke-width=".8"/><path d="M950 576 q20 -6 44 -3 M948 572 q14 -4 30 -4 M956 579 q18 -4 36 -1" stroke="#70708a" stroke-width="1.4" fill="none"/><polygon points="963,569 967.3,569 975,599.4 975,644 963,644" fill="#60c860" stroke="#000" stroke-width="0.8" /><rect x="956" y="530.5" width="6.3" height="124.5" fill="#b00010" stroke="#000" stroke-width="0.7" /><line x1="956" y1="573" x2="962.3" y2="573" stroke="#000" stroke-width="0.8" /><line x1="956" y1="608" x2="962.3" y2="608" stroke="#e02030" stroke-width="1.2" /><line x1="956" y1="610.5" x2="962.3" y2="610.5" stroke="#000" stroke-width="0.8" /><rect x="909" y="656.5" width="66" height="4.5" fill="#e0a0d8" stroke="#000" stroke-width="0.8" /><rect x="946" y="652" width="29" height="6" fill="#d4006e" stroke="#000" stroke-width="0.8" /><rect x="975" y="654" width="20" height="5" fill="#e0a0d8" stroke="#000" stroke-width="0.8" />
<rect x="929.5" y="487" width="7.5" height="34" fill="url(#cyld)" stroke="#000" stroke-width="0.7" /><rect x="929.5" y="487" width="7.5" height="4" fill="#50544c" stroke="#000" stroke-width="0.6" /><line x1="929.5" y1="494" x2="937" y2="494" stroke="#000" stroke-width="0.6" /><g opacity="0.82"><g fill="none" stroke="url(#wm)" stroke-linecap="round"><path d="M893 517v21h14M897 512v23M901 509v26" stroke-width="2"/><path d="M934.500 517v21h-14M930.500 512v23M926.500 509v26" stroke-width="2"/><path d="M893 538q10 1 20 -3M934.500 538q-10 1 -20 -3" stroke-width="1.600"/><path d="M922 512q-12 -1 -13 10t11 11q6 -1 7 -8h-8" stroke-width="3.600"/></g><text x="947" y="528.500" font-family="Liberation Sans, sans-serif" font-size="16.600" font-weight="bold" fill="url(#wm)">智造资料网</text><text x="947.500" y="537.500" font-family="Liberation Sans, sans-serif" font-size="4.700" font-weight="bold" fill="#f09030" textLength="80" lengthAdjust="spacingAndGlyphs">INTELLIGENT MANUFACTURING DATA</text></g>
<polygon points="1134,142 1145.5,142 1146.5,560 1138,560" fill="#07070c" /><line x1="1141" y1="262" x2="1143" y2="556" stroke="#8a8aa8" stroke-width="0.9" /><line x1="1143.6" y1="160" x2="1144.6" y2="400" stroke="#8a8aa8" stroke-width="0.9" /><line x1="1138.5" y1="330" x2="1140" y2="556" stroke="#6a6a88" stroke-width="0.8" /><rect x="1143.2" y="203" width="6.5" height="18.5" fill="#b8b8cc" stroke="#000" stroke-width="0.7" /><line x1="1146.2" y1="203" x2="1146.2" y2="221" stroke="#000" stroke-width="0.6" /><line x1="1143.2" y1="209" x2="1149.7" y2="209" stroke="#000" stroke-width="0.5" /><line x1="1143.2" y1="215" x2="1149.7" y2="215" stroke="#000" stroke-width="0.5" /><polygon points="1142.6,398 1146.2,398 1146.8,558 1138.6,558 1138,470" fill="#dca042" stroke="#000" stroke-width="0.8" /><line x1="1144" y1="400" x2="1143" y2="556" stroke="#000" stroke-width="1" /><line x1="1141.5" y1="440" x2="1141" y2="556" stroke="#000" stroke-width="0.8" /><path d="M1137 293 h8 l9 6 v66 l-8 5 h-10 v-10 h8 l3 -3 v-6 h-8 v-9 h8 v-19 h-8 v-9 h8 v-5 l-3 -3 h-7 z" fill="#2e8c3c" stroke="#000" stroke-width="0.9"/><path d="M1137 303.5 h9 M1137 360 h9" stroke="#0c3c14" stroke-width="1" fill="none"/><polygon points="1138,558 1147,558 1151,800 1147,880 1141.5,935 1139,668" fill="#4a4c62" stroke="#000" stroke-width="0.8" /><line x1="1141" y1="562" x2="1145" y2="870" stroke="#000" stroke-width="0.9" /><line x1="1144.5" y1="562" x2="1148.5" y2="800" stroke="#2a2c3c" stroke-width="0.9" /><line x1="1146" y1="640" x2="1149" y2="860" stroke="#78a070" stroke-width="0.8" stroke-dasharray="5 4"/><polygon points="409,671 1138,666.5 1140.5,933 1053.5,933 1053.5,929.5 498,932.5 498,936.5 411.3,936.5" fill="#9fd29f" stroke="#000" stroke-width="1.2" /><polygon points="425.7,687 773.4,684.9 775.5,914.2 427.8,916.4" fill="#d4cf35" stroke="#000" stroke-width="1.2" /><polygon points="773.4,684.9 1121,682.7 1124,912 775.5,914.2" fill="#d4cf35" stroke="#000" stroke-width="1.2" /><rect x="749.5" y="783" width="12.5" height="33.5" fill="#d2d2d2" stroke="#000" stroke-width="1.1" /><rect x="787" y="783" width="12.5" height="33.5" fill="#d2d2d2" stroke="#000" stroke-width="1.1" /><polygon points="787,783 790,783 790,786" fill="#000" />
<rect x="356" y="573.2" width="51.4" height="12.6" fill="#d8d49a" stroke="#000" stroke-width="1" /><line x1="358" y1="574.3" x2="407" y2="574.3" stroke="#000" stroke-width="1.2" stroke-dasharray="2 1.200 5 1.200 1.200 2 7 1.500"/><polygon points="365,581.5 367,580 369,581.5 367,583" fill="#d8d49a" stroke="#000" stroke-width="0.9" /><polygon points="375.5,581.5 377.5,580 379.5,581.5 377.5,583" fill="#d8d49a" stroke="#000" stroke-width="0.9" /><polygon points="386,581.5 388,580 390,581.5 388,583" fill="#d8d49a" stroke="#000" stroke-width="0.9" /><polygon points="396,581.5 398,580 400,581.5 398,583" fill="#d8d49a" stroke="#000" stroke-width="0.9" /><polygon points="380,573 380.6,568.5 381.6,566 383.4,566 384.4,568.5 385,573" fill="#e88878" stroke="#000" stroke-width="0.7" /><line x1="382.5" y1="566" x2="382.5" y2="561" stroke="#d0d0e0" stroke-width="1" /><polygon points="400.5,573 401.1,568.5 402.1,566 403.9,566 404.9,568.5 405.5,573" fill="#e88878" stroke="#000" stroke-width="0.7" /><line x1="403.0" y1="566" x2="403.0" y2="561" stroke="#d0d0e0" stroke-width="1" /><polygon points="404,573 407.5,556 407.5,573" fill="#60c860" stroke="#000" stroke-width="0.5" /><rect x="399.4" y="585.8" width="9.1" height="47.0" fill="#60c860" stroke="#000" stroke-width="0.8" /><rect x="399.4" y="632.8" width="9.1" height="6.9" fill="#d4006e" stroke="#000" stroke-width="0.8" /><rect x="401" y="634.5" width="7" height="4.0" fill="#e81080" /><rect x="1192.4" y="460" width="63.0" height="12.2" fill="#60c860" stroke="#000" stroke-width="0.9" /><rect x="1192.4" y="460" width="63.0" height="3" fill="#050505" /><polygon points="1194,465 1255,462.5 1255,464 1194,465.5" fill="#30d850" /><polygon points="1201.2,468.5 1203,467 1204.8,468.5 1203,470" fill="#60c860" stroke="#000" stroke-width="0.8" /><polygon points="1211.5,468.5 1213.3,467 1215.1,468.5 1213.3,470" fill="#60c860" stroke="#000" stroke-width="0.8" /><polygon points="1222.2,468.5 1224,467 1225.8,468.5 1224,470" fill="#60c860" stroke="#000" stroke-width="0.8" /><polygon points="1232.5,468.5 1234.3,467 1236.1,468.5 1234.3,470" fill="#60c860" stroke="#000" stroke-width="0.8" /><polygon points="1242.8,468.5 1244.6,467 1246.3999999999999,468.5 1244.6,470" fill="#60c860" stroke="#000" stroke-width="0.8" /><polygon points="1139,490 1190,490 1190,498.8 1196,498.8 1196,490 1209,490 1209,502.5 1218,502.5 1218,490 1230,490 1230,499 1239,499 1239,490 1252,490 1252,497 1258,497 1258,490 1270,490 1270,504.8 1139,504.8" fill="#30d030" stroke="#000" stroke-width="0.9" /><rect x="1147" y="490" width="43" height="3" fill="#10c8d8" stroke="#000" stroke-width="0.6" /><line x1="1147" y1="491.5" x2="1190" y2="491.5" stroke="#000" stroke-width="0.7" /><rect x="1196" y="490" width="13" height="3" fill="#10c8d8" stroke="#000" stroke-width="0.6" /><line x1="1196" y1="491.5" x2="1209" y2="491.5" stroke="#000" stroke-width="0.7" /><rect x="1218" y="490" width="12" height="3" fill="#10c8d8" stroke="#000" stroke-width="0.6" /><line x1="1218" y1="491.5" x2="1230" y2="491.5" stroke="#000" stroke-width="0.7" /><rect x="1239" y="490" width="13" height="3" fill="#10c8d8" stroke="#000" stroke-width="0.6" /><line x1="1239" y1="491.5" x2="1252" y2="491.5" stroke="#000" stroke-width="0.7" /><rect x="1258" y="490" width="12" height="3" fill="#10c8d8" stroke="#000" stroke-width="0.6" /><line x1="1258" y1="491.5" x2="1270" y2="491.5" stroke="#000" stroke-width="0.7" /><rect x="1191" y="496.5" width="4" height="2.0" fill="#10c8d8" /><rect x="1210" y="500" width="7" height="2" fill="#10c8d8" /><rect x="1231" y="497" width="7" height="1.8" fill="#10c8d8" /><rect x="1253" y="495" width="4" height="1.8" fill="#10c8d8" /><rect x="1137.9" y="505" width="89.1" height="5.9" fill="#d4006a" stroke="#000" stroke-width="0.8" /><rect x="1228.6" y="505" width="41.4" height="11" fill="#00d0d0" stroke="#000" stroke-width="0.9" /><polygon points="1258,510.5 1260.6,507.5 1263.5,510 1262,512.8 1259,512.8" fill="#e080d0" stroke="#000" stroke-width="0.5" /><rect x="1209.7" y="511.4" width="17.3" height="2.1" fill="#c8e8b0" stroke="#000" stroke-width="0.5" /><rect x="1259" y="517" width="5" height="1.2" fill="#e8e8d8" /><polygon points="1147.8,510.9 1207,510.9 1207,514.5 1201.9,514.5 1201.9,547.5 1198,551.3 1158.5,551.3 1154.7,547.5 1154.7,514.5 1147.8,514.5" fill="#00d0d0" stroke="#000" stroke-width="0.9" /><line x1="1168.3" y1="511" x2="1168.3" y2="551" stroke="#000" stroke-width="0.9" /><line x1="1186.7" y1="511" x2="1186.7" y2="551" stroke="#000" stroke-width="0.9" /><circle cx="1177.700" cy="539.700" r="7.600" fill="#28c838" stroke="#000" stroke-width="1"/><circle cx="1177.700" cy="539.700" r="4.600" fill="#1c2c24" stroke="#000" stroke-width=".7"/><path d="M1175 538l5.500 3M1175 542l4-4.500" stroke="#e020d0" stroke-width="1"/><circle cx="1178" cy="539" r="1.200" fill="#e88080"/><polygon points="1160.6,522.5 1163,520.1 1165.4,522.5 1163,524.9" fill="#e88010" stroke="#000" stroke-width="0.4" /><polygon points="1190.0,522.5 1192.4,520.1 1194.8000000000002,522.5 1192.4,524.9" fill="#e88010" stroke="#000" stroke-width="0.4" /><rect x="1161.5" y="517" width="2.5" height="1.2" fill="#111" /><polygon points="1191.5,518.5 1192.4,517 1193.3,518.5" fill="#111" /><polygon points="1162,547 1163,545.8 1164,547 1163,548.2" fill="#d8f0f0" stroke="#000" stroke-width="0.4" /><polygon points="1191.4,547 1192.4,545.8 1193.4,547 1192.4,548.2" fill="#111" /><rect x="1270.6" y="490.4" width="3.7" height="14.6" fill="#109098" stroke="#000" stroke-width="0.6" /><rect x="1275.3" y="492.5" width="8.4" height="12.5" fill="#e010d0" stroke="#000" stroke-width="0.8" /><line x1="1281" y1="494.5" x2="1288" y2="488" stroke="#e010d0" stroke-width="1.3" /><rect x="1280" y="497" width="2" height="2" fill="#111" /><rect x="1280" y="501" width="2" height="2" fill="#111" />
<path d="M404 870 v14 q3 2 7 2 v-18 q-4 0 -7 2z" fill="#c8c8d2" stroke="#000" stroke-width="0.8"/><path d="M1145 862 h8 l2 4 q10 1 13 5 v9 q-6 5 -23 5 z" fill="url(#cyl)" stroke="#000" stroke-width="0.8"/><path d="M1145 871 q14 1 23 -1" fill="none" stroke="#000" stroke-width="0.8"/><defs></defs><rect x="416.5" y="937" width="8" height="29" fill="url(#cyl)" stroke="#000" stroke-width="0.8" /><rect x="414.5" y="937" width="12" height="5" fill="#d8d8e0" stroke="#000" stroke-width="0.8" /><path d="M395.0 965 v12 a25.5 6.5 0 0 0 51.0 0 v-12 z" fill="url(#cyl)" stroke="#000" stroke-width="0.9"/><ellipse cx="420.5" cy="965" rx="25.5" ry="6.5" fill="#c9c9d6" stroke="#000" stroke-width="0.9"/><ellipse cx="420.5" cy="962" rx="12" ry="3.5" fill="#d4d4de" stroke="#000" stroke-width="0.8"/><rect x="414.5" y="956" width="12" height="6" fill="#d0d0da" stroke="#000" stroke-width="0.8" /><defs></defs><rect x="1128.8" y="933" width="8" height="29.5" fill="url(#cyl)" stroke="#000" stroke-width="0.8" /><rect x="1126.8" y="933" width="12" height="5" fill="#d8d8e0" stroke="#000" stroke-width="0.8" /><path d="M1107.3 961.5 v12 a25.5 6.5 0 0 0 51.0 0 v-12 z" fill="url(#cyl)" stroke="#000" stroke-width="0.9"/><ellipse cx="1132.8" cy="961.5" rx="25.5" ry="6.5" fill="#c9c9d6" stroke="#000" stroke-width="0.9"/><ellipse cx="1132.8" cy="958.5" rx="12" ry="3.5" fill="#d4d4de" stroke="#000" stroke-width="0.8"/><rect x="1126.8" y="952.5" width="12" height="6" fill="#d0d0da" stroke="#000" stroke-width="0.8" /><ellipse cx="470" cy="938.5" rx="19" ry="3" fill="#b8b8c4" stroke="#000" stroke-width="0.8"/><path d="M459 940 h28 q-2 10 -12 16 l-8 14 h-8 z" fill="url(#cyl)" stroke="#000" stroke-width="0.9"/><ellipse cx="463" cy="961" rx="13.5" ry="15" fill="#c8c8d2" stroke="#000" stroke-width="0.9" transform="rotate(-12 463 961)"/><ellipse cx="466" cy="962" rx="9.5" ry="12" fill="#9c9ca8" stroke="#000" stroke-width="0.8" transform="rotate(-12 466 962)"/><path d="M466 944 l14 4 l-8 18 l-8 2 z" fill="#b4b4c0" stroke="#000" stroke-width="0.8"/><circle cx="469" cy="962" r="3.6" fill="#e0e0e8" stroke="#000" stroke-width="0.9"/><circle cx="469" cy="962" r="1.6" fill="#111"/><ellipse cx="1074" cy="935.5" rx="19" ry="3" fill="#b8b8c4" stroke="#000" stroke-width="0.8"/><path d="M1063 937 h28 q-2 10 -12 16 l-8 14 h-8 z" fill="url(#cyl)" stroke="#000" stroke-width="0.9"/><ellipse cx="1067" cy="958" rx="13.5" ry="15" fill="#c8c8d2" stroke="#000" stroke-width="0.9" transform="rotate(-12 1067 958)"/><ellipse cx="1070" cy="959" rx="9.5" ry="12" fill="#9c9ca8" stroke="#000" stroke-width="0.8" transform="rotate(-12 1070 959)"/><path d="M1070 941 l14 4 l-8 18 l-8 2 z" fill="#b4b4c0" stroke="#000" stroke-width="0.8"/><circle cx="1073" cy="959" r="3.6" fill="#e0e0e8" stroke="#000" stroke-width="0.9"/><circle cx="1073" cy="959" r="1.6" fill="#111"/>
<g shape-rendering="auto"><rect x="94.5" y="916.5" width="25" height="26.5" fill="#6078a0" stroke="#d4d4d4" stroke-width="1" fill-opacity="0.75"/><rect x="94.5" y="943.3" width="23" height="4.7" fill="#8a9066" stroke="#f0e800" stroke-width="1" /><rect x="117.8" y="877" width="3" height="63" fill="#10d8e8" /><polygon points="119.2,868 115,878 123.6,878" fill="#18e8f8" /><rect x="94.4" y="940.8" width="23" height="2.8" fill="#e81010" /><polygon points="85,942.2 94.6,938 94.6,945.5" fill="#f81818" /><circle cx="120" cy="941.6" r="3.3" fill="#787878"/><circle cx="119.2" cy="940.8" r="1.4" fill="#a8a8a8"/><circle cx="119" cy="949.7" r="4" fill="#10c810"/><circle cx="118" cy="948.5" r="1.5" fill="#40f040"/><path d="M114.500 950l3 4v4.500M121.500 950l-4 4" stroke="#e0e0e0" stroke-width=".9" fill="none"/><path d="M115 857.500h7l-7 8h7.400" stroke="#d4d4d4" stroke-width="1" fill="none"/><path d="M73 938.200l8 8.800M81 938.200l-8 8.800" stroke="#f01818" stroke-width="1" fill="none"/></g>
</svg>
<div class="b" style="left:0;top:0;width:1920px;height:23px;background:#fff"></div>
<div class="t" style="left:830px;top:4px;font-size:12.5px;color:#000;height:17px;line-height:17px;letter-spacing:0.3px;">VISI 2018 R2 from Vero Software x64 - </div>
<div class="t" style="left:1060px;top:4px;font-size:12px;color:#000;height:17px;line-height:17px;">改</div>
<div class="t" style="left:1072px;top:4px;font-size:12.2px;color:#000;height:17px;line-height:17px;">YA1907-</div>
<div class="t" style="left:1119.5px;top:4px;font-size:12px;color:#000;height:17px;line-height:17px;">装配体压敏机</div>
<div class="t" style="left:1192px;top:4px;font-size:12.5px;color:#000;height:17px;line-height:17px;letter-spacing:0.3px;">.wkf - [</div>
<div class="t" style="left:1230.5px;top:4px;font-size:12px;color:#000;height:17px;line-height:17px;">动态的</div>
<div class="t" style="left:1267px;top:4px;font-size:12.5px;color:#000;height:17px;line-height:17px;">]</div>
<div class="b" style="left:0;top:23px;width:1920px;height:86px;background:#d6dbe9"></div>
<div class="t" style="left:7px;top:24px;font-size:12.3px;color:#000;height:18px;line-height:18px;">文件</div>
<div class="t" style="left:45px;top:24px;font-size:12.3px;color:#000;height:18px;line-height:18px;">编辑</div>
<div class="t" style="left:83px;top:24px;font-size:12.3px;color:#000;height:18px;line-height:18px;">线架构</div>
<div class="t" style="left:133px;top:24px;font-size:12.3px;color:#000;height:18px;line-height:18px;">网格</div>
<div class="t" style="left:171px;top:24px;font-size:12.3px;color:#000;height:18px;line-height:18px;">曲面</div>
<div class="t" style="left:209px;top:24px;font-size:12.3px;color:#000;height:18px;line-height:18px;">实体编辑</div>
<div class="t" style="left:271px;top:24px;font-size:12.3px;color:#000;height:18px;line-height:18px;">建模</div>
<div class="t" style="left:309px;top:24px;font-size:12.3px;color:#000;height:18px;line-height:18px;">分析</div>
<div class="t" style="left:347px;top:24px;font-size:12.3px;color:#000;height:18px;line-height:18px;">电极</div>
<div class="t" style="left:385px;top:24px;font-size:12.3px;color:#000;height:18px;line-height:18px;">尺寸标注</div>
<div class="t" style="left:447px;top:24px;font-size:12.3px;color:#000;height:18px;line-height:18px;">工程图</div>
<div class="t" style="left:497px;top:24px;font-size:12.3px;color:#000;height:18px;line-height:18px;">系统</div>
<div class="t" style="left:535px;top:24px;font-size:12.3px;color:#000;height:18px;line-height:18px;">视窗</div>
<div class="t" style="left:573px;top:24px;font-size:12.3px;color:#000;height:18px;line-height:18px;">加工</div>
<div class="t" style="left:611px;top:24px;font-size:12.3px;color:#000;height:18px;line-height:18px;">塑模</div>
<div class="t" style="left:649px;top:24px;font-size:12.3px;color:#000;height:18px;line-height:18px;">冲模</div>
<div class="t" style="left:687px;top:24px;font-size:12.3px;color:#000;height:18px;line-height:18px;">标准件</div>
<div class="t" style="left:737px;top:24px;font-size:12.3px;color:#000;height:18px;line-height:18px;">模流分析</div>
<div class="t" style="left:800px;top:24px;font-size:12.3px;color:#000;height:18px;line-height:18px;">?</div>
<div class="b" style="left:0;top:43px;width:9px;height:66px;background:#4a628a"></div>
<div class="b" style="left:0;top:109px;width:60px;height:8px;background:#4a628a"></div>
<div class="b" style="left:12px;top:44px;width:18px;height:20px;background:#f4f7fc;border:1px solid #b4bccf;box-sizing:border-box"></div>
<div class="b" style="left:17px;top:52px;width:0;height:0;border-left:4px solid transparent;border-right:4px solid transparent;border-top:5px solid #000"></div>
<div class="b" style="left:31px;top:45px;width:33px;height:19px;background:#eef2fa;border:1px solid #c3cadb;border-bottom:none;box-sizing:border-box"></div>
<div class="t" style="left:31px;top:45px;font-size:12.3px;color:#000;width:33px;height:18px;line-height:18px;text-align:center;">编辑</div>
<div class="b" style="left:64px;top:43px;width:34px;height:21px;background:#c2dcf5;border:1px solid #9db9dc;border-bottom:none;box-sizing:border-box"></div>
<div class="t" style="left:64px;top:44px;font-size:12.3px;color:#000;width:34px;height:18px;line-height:18px;text-align:center;font-weight:bold;">标准</div>
<div class="b" style="left:98px;top:45px;width:46px;height:19px;background:#eef2fa;border:1px solid #c3cadb;border-bottom:none;box-sizing:border-box"></div>
<div class="t" style="left:98px;top:45px;font-size:12.3px;color:#000;width:46px;height:18px;line-height:18px;text-align:center;">线架构</div>
<div class="b" style="left:144px;top:45px;width:34px;height:19px;background:#eef2fa;border:1px solid #c3cadb;border-bottom:none;box-sizing:border-box"></div>
<div class="t" style="left:144px;top:45px;font-size:12.3px;color:#000;width:34px;height:18px;line-height:18px;text-align:center;">建模</div>
<div class="b" style="left:178px;top:45px;width:34px;height:19px;background:#eef2fa;border:1px solid #c3cadb;border-bottom:none;box-sizing:border-box"></div>
<div class="t" style="left:178px;top:45px;font-size:12.3px;color:#000;width:34px;height:18px;line-height:18px;text-align:center;">曲面</div>
<div class="b" style="left:212px;top:45px;width:34px;height:19px;background:#eef2fa;border:1px solid #c3cadb;border-bottom:none;box-sizing:border-box"></div>
<div class="t" style="left:212px;top:45px;font-size:12.3px;color:#000;width:34px;height:18px;line-height:18px;text-align:center;">尺寸</div>
<div class="b" style="left:246px;top:45px;width:34px;height:19px;background:#eef2fa;border:1px solid #c3cadb;border-bottom:none;box-sizing:border-box"></div>
<div class="t" style="left:246px;top:45px;font-size:12.3px;color:#000;width:34px;height:18px;line-height:18px;text-align:center;">应用</div>
<div class="b" style="left:280px;top:45px;width:34px;height:19px;background:#eef2fa;border:1px solid #c3cadb;border-bottom:none;box-sizing:border-box"></div>
<div class="t" style="left:280px;top:45px;font-size:12.3px;color:#000;width:34px;height:18px;line-height:18px;text-align:center;">塑膜</div>
<div class="b" style="left:314px;top:45px;width:34px;height:19px;background:#eef2fa;border:1px solid #c3cadb;border-bottom:none;box-sizing:border-box"></div>
<div class="t" style="left:314px;top:45px;font-size:12.3px;color:#000;width:34px;height:18px;line-height:18px;text-align:center;">冲模</div>
<div class="b" style="left:348px;top:45px;width:34px;height:19px;background:#eef2fa;border:1px solid #c3cadb;border-bottom:none;box-sizing:border-box"></div>
<div class="t" style="left:348px;top:45px;font-size:12.3px;color:#000;width:34px;height:18px;line-height:18px;text-align:center;">加工</div>
<div class="b" style="left:382px;top:45px;width:34px;height:19px;background:#eef2fa;border:1px solid #c3cadb;border-bottom:none;box-sizing:border-box"></div>
<div class="t" style="left:382px;top:45px;font-size:12.3px;color:#000;width:34px;height:18px;line-height:18px;text-align:center;">模流</div>
<div class="b grip" style="left:14px;top:64px;height:44px"></div>
<div class="b grip" style="left:265px;top:64px;height:44px"></div>
<div class="b grip" style="left:595px;top:64px;height:44px"></div>
<div class="b grip" style="left:871px;top:64px;height:44px"></div>
<div class="b grip" style="left:1042px;top:64px;height:44px"></div>
<div class="b grip" style="left:1137px;top:64px;height:44px"></div>
<div class="t" style="left:76px;top:93px;font-size:12.3px;color:#000;width:120px;height:15px;line-height:15px;text-align:center;">属性/过滤器</div>
<div class="t" style="left:367px;top:93px;font-size:12.3px;color:#000;width:120px;height:15px;line-height:15px;text-align:center;">图形</div>
<div class="t" style="left:670px;top:93px;font-size:12.3px;color:#000;width:120px;height:15px;line-height:15px;text-align:center;">图像 (进阶)</div>
<div class="t" style="left:895px;top:93px;font-size:12.3px;color:#000;width:120px;height:15px;line-height:15px;text-align:center;">视图</div>
<div class="t" style="left:1029px;top:93px;font-size:12.3px;color:#000;width:120px;height:15px;line-height:15px;text-align:center;">工作平面</div>
<div class="t" style="left:1163px;top:93px;font-size:12.3px;color:#000;width:120px;height:15px;line-height:15px;text-align:center;">系统</div>
<svg class="b" style="left:1780px;top:0" width="140" height="44" viewBox="0 0 140 44">
      <path d="M19.5 10.500h10" stroke="#000" stroke-width="1" fill="none"/>
      <path d="M64.500 6.500h8v8h-8z M66.500 6.500v-2h8v8h-2" stroke="#000" stroke-width="1" fill="none"/>
      <path d="M110 5l10 10M120 5l-10 10" stroke="#000" stroke-width="1.100" fill="none"/>
      <path d="M90 36.500h9" stroke="#8c8468" stroke-width="1" fill="none"/>
      <path d="M108.500 30.500h6v6h-6z M110.500 30.500v-2h6v6h-2" stroke="#8c8468" stroke-width="1" fill="none"/>
      <path d="M126.200 28.200l9 9M135.200 28.200l-9 9" stroke="#8c8468" stroke-width="1" fill="none"/>
    </svg>
<svg class="b" style="left:0;top:0;pointer-events:none" width="1920" height="1048" viewBox="0 0 1920 1048"><defs>
<linearGradient id="gBlueCyl" x1="0" y1="0" x2="1" y2="0"><stop offset="0" stop-color="#9cc0f0"/><stop offset=".45" stop-color="#5a8ad8"/><stop offset="1" stop-color="#1c3c90"/></linearGradient>
<linearGradient id="gLtCyl" x1="0" y1="0" x2="1" y2="0"><stop offset="0" stop-color="#e8eefc"/><stop offset="1" stop-color="#a8b8dc"/></linearGradient>
<linearGradient id="gRefB" x1="0" y1="0" x2="0" y2="1"><stop offset="0" stop-color="#a8c8f0"/><stop offset="1" stop-color="#3c78c8"/></linearGradient>
<radialGradient id="gIris" cx=".45" cy=".4" r=".6"><stop offset="0" stop-color="#b8d0f0"/><stop offset=".5" stop-color="#4a70b0"/><stop offset="1" stop-color="#182848"/></radialGradient>
<radialGradient id="gLens" cx=".4" cy=".35" r=".7"><stop offset="0" stop-color="#ffffff"/><stop offset=".6" stop-color="#b8d0f0"/><stop offset="1" stop-color="#7090c8"/></radialGradient>
<linearGradient id="gGreenBox" x1="0" y1="0" x2="0" y2="1"><stop offset="0" stop-color="#40e040"/><stop offset="1" stop-color="#0c9c10"/></linearGradient>
<linearGradient id="gPage" x1="0" y1="0" x2="1" y2="1"><stop offset="0" stop-color="#ffffff"/><stop offset="1" stop-color="#b8c8f0"/></linearGradient>
<linearGradient id="gFolder" x1="0" y1="0" x2="0" y2="1"><stop offset="0" stop-color="#fce890"/><stop offset="1" stop-color="#e0a838"/></linearGradient>
<linearGradient id="gPlane" x1="0" y1="0" x2="1" y2="1"><stop offset="0" stop-color="#f4f8ff"/><stop offset="1" stop-color="#a8c0ec"/></linearGradient>
<g id="eye"><path d="M2 10 Q6 4.500 12 4.500 Q18.500 4.500 22 8.500 Q18 12 12 12 Q6 12 2 10Z" fill="#c8c0d4" stroke="#786888" stroke-width=".5"/><ellipse cx="12" cy="8.300" rx="4.400" ry="3.700" fill="url(#gIris)"/><circle cx="12" cy="8.300" r="1.600" fill="#0c1020"/><circle cx="10.700" cy="7" r=".8" fill="#e8f0ff"/><path d="M1.500 10 Q6 3.400 12 3.600 Q18.500 3.600 22.500 8.500" fill="none" stroke="#242438" stroke-width="1.900"/><path d="M5 5l-1.200-1.600M8 3.800l-.6-1.800M11.500 3.300V1.300M15 3.600l.7-1.800M18.200 4.800l1.400-1.500M20.600 6.500l1.600-1" stroke="#242438" stroke-width=".7"/></g>
<g id="plusG"><path d="M3.2 0h2.6v3.2H9v2.6H5.8V9H3.2V5.8H0V3.200h3.200z" fill="#50d830" stroke="#2c9410" stroke-width=".5"/></g>
<g id="minusY"><rect x="0" y="0" width="9" height="2.8" fill="#f0e010" stroke="#a89c00" stroke-width=".5"/></g>
<g id="arrB"><path d="M0 8.500L6.500 2" stroke="#2c6cd0" stroke-width="1.300" fill="none"/><path d="M4 1.500Q9.500 .5 8.500 5Q8 7.500 5 7.200" stroke="#2c6cd0" stroke-width="1.500" fill="none"/><path d="M5.800 5.500L3.800 7.300 6.200 8.600z" fill="#2c6cd0"/></g>
<g id="refreshGY"><path d="M3 8Q3.500 2.500 10 2.500H13V.3L18.500 4.300 13 8.300V6H10Q7 6 6.500 9z" fill="#58c828" stroke="#2c7c10" stroke-width=".6"/><path d="M17 8Q16.500 13.500 10 13.500H7V15.700L1.500 11.700 7 7.700V10H10Q13 10 13.500 7z" fill="#f0d818" stroke="#a89000" stroke-width=".6"/></g>
<g id="refreshB"><path d="M2 9Q2.500 2 10 2H13V-.5L19.500 4.200 13 9V6.200H10Q6.500 6.200 6 9.500z" fill="url(#gRefB)" stroke="#2c60b0" stroke-width=".7"/><path d="M20 9Q19.500 16 12 16H9V18.500L2.500 13.800 9 9V11.800H12Q15.500 11.800 16 8.500z" fill="url(#gRefB)" stroke="#2c60b0" stroke-width=".7"/></g>
<g id="tl"><rect x="0" y="0" width="5.600" height="12.500" rx="2.400" fill="#141414"/><circle cx="2.800" cy="3.300" r="1.900"/><circle cx="2.800" cy="9" r="1.900"/></g>
<g id="boxes"><path d="M1 4.500l3.500-2.500h6.500l-3 2.500zM1 4.500h7v6.500h-7zM8 4.500l3-2.500v6.500l-3 2.500z" fill="#e4e4e4" stroke="#484848" stroke-width=".7"/><path d="M11 4l3-2.200h6.500l-2.500 2.200zM11 4h7v6h-7zM18 4l2.500-2.200v6l-2.500 2.200z" fill="#f4f4f4" stroke="#585858" stroke-width=".7"/><path d="M1 4.500h7v6.500h-7z" fill="#9c9c9c" stroke="#484848" stroke-width=".7"/></g>
<g id="cylW"><path d="M0 4.500v12a5 2.500 0 0 0 10 0V4.500" fill="none" stroke="#222" stroke-width="1.100"/><ellipse cx="5" cy="4.500" rx="5" ry="2.500" fill="none" stroke="#222" stroke-width="1.100"/><path d="M0 16.500a5 2.500 0 0 1 10 0" fill="none" stroke="#222" stroke-width=".8"/></g>
<g id="mag"><circle cx="8" cy="7.500" r="6.200" fill="url(#gLens)" stroke="#8c98b4" stroke-width="1.500"/><path d="M3.800 12.200L.8 16.500" stroke="#a0a4ac" stroke-width="2.600" stroke-linecap="round"/><path d="M3.800 12.200L.8 16.500" stroke="#70747c" stroke-width="1" stroke-linecap="round"/></g>
<g id="tri"><path d="M0 0h7l-3.500 4z" fill="#000"/></g>
<g id="gcorner"><path d="M0 0h4.200v1.600h-1.600l2 2-1 1-2-2v1.600h-1.600z" fill="#40c828" stroke="#1c7c0c" stroke-width=".5"/></g>
<g id="axes"><path d="M1 13L12 5.500 23 10 12 18.500z" fill="url(#gPlane)" stroke="#98a8c8" stroke-width=".6"/><path d="M7.500 12V3" stroke="#1c5ce8" stroke-width="1.800"/><path d="M7.500 0L4.800 4.200h5.400z" fill="#1c5ce8"/><path d="M7.500 12L15 7" stroke="#28b428" stroke-width="1.700"/><path d="M17.500 5.300l-4.400.6 2.500 3.400z" fill="#28b428"/><path d="M7.500 12L14.500 17" stroke="#e02020" stroke-width="1.800"/><path d="M17 19l-1.500-4.300-2.800 3.500z" fill="#e02020"/><circle cx="7.500" cy="12" r="1.900" fill="#d8d8d8" stroke="#555" stroke-width=".6"/></g>
<g id="wrenchX"><path d="M2 2l10 10" stroke="#b8c4d8" stroke-width="3" stroke-linecap="round"/><path d="M12 2L2 12" stroke="#4c84d8" stroke-width="2.600" stroke-linecap="round"/><circle cx="2.500" cy="2.500" r="2.200" fill="#d8e0ec" stroke="#8090a8" stroke-width=".6"/><path d="M1.500 1l2 2" stroke="#4a5a70" stroke-width="1.400"/></g>
</defs><g transform="translate(0 .5)"><rect x="2" y="3" width="16" height="16" fill="#6cc040" stroke="#4c9c28" stroke-width="1"/><path d="M5.500 7l3.800 9h1.600l3.800-9h-2.400l-2.200 6-2.200-6z" fill="#fff"/><path d="M21.500 7v12" stroke="#b0b0b0" stroke-width="1"/><g transform="translate(30 0)" ><path d="M4.500 4.500h8l4 4v12h-12z" fill="url(#gPage)" stroke="#181818" stroke-width="1.200"/><path d="M12.500 4.500v4h4" fill="none" stroke="#181818" stroke-width="1"/></g><g transform="translate(54 0)" ><path d="M2 8h6l1.500 2h9v10h-16.500z" fill="url(#gFolder)" stroke="#a87820" stroke-width=".8"/><path d="M2 20l3-8h17l-3.500 8z" fill="#f8d060" stroke="#a87820" stroke-width=".8"/><path d="M9 8Q11 3 16 4.500l1-2 3 5.500-6 .8 1-2Q12 5.500 11 8.500z" fill="#30b838" stroke="#107018" stroke-width=".6"/></g><g transform="translate(77 0)" ><path d="M3 5h7l1.500 1.500V13H3zM3 12h7l1.500 1.500V20H3z" fill="#f8e090" stroke="#b89030" stroke-width=".8"/><path d="M12 6h6l3 3v10h-9z" fill="url(#gPage)" stroke="#485898" stroke-width=".9"/><path d="M10 9h3M10 16h3" stroke="#30b030" stroke-width="1.200"/></g><g transform="translate(103 4) scale(1)"><rect x="0" y="0" width="16" height="16" rx="1" fill="#4868b0" stroke="#283870" stroke-width="1"/><rect x="2.500" y="1" width="11" height="7.500" fill="#f4f4f8"/><rect x="2.500" y="1" width="11" height="1.600" fill="#e04848"/><path d="M3.500 4.500h9M3.500 6.500h9" stroke="#b8b8c8" stroke-width=".6"/><rect x="4" y="10.500" width="8" height="5" fill="#d0d4e0"/><rect x="5" y="11.500" width="2.500" height="3.500" fill="#384878"/></g><g transform="translate(132 3) scale(0.68)"><rect x="0" y="0" width="16" height="16" rx="1" fill="#4868b0" stroke="#283870" stroke-width="1"/><rect x="2.500" y="1" width="11" height="7.500" fill="#f4f4f8"/><rect x="2.500" y="1" width="11" height="1.600" fill="#e04848"/><path d="M3.500 4.500h9M3.500 6.500h9" stroke="#b8b8c8" stroke-width=".6"/><rect x="4" y="10.500" width="8" height="5" fill="#d0d4e0"/><rect x="5" y="11.500" width="2.500" height="3.500" fill="#384878"/></g><g transform="translate(127 10) scale(0.68)"><rect x="0" y="0" width="16" height="16" rx="1" fill="#4868b0" stroke="#283870" stroke-width="1"/><rect x="2.500" y="1" width="11" height="7.500" fill="#f4f4f8"/><rect x="2.500" y="1" width="11" height="1.600" fill="#e04848"/><path d="M3.500 4.500h9M3.500 6.500h9" stroke="#b8b8c8" stroke-width=".6"/><rect x="4" y="10.500" width="8" height="5" fill="#d0d4e0"/><rect x="5" y="11.500" width="2.500" height="3.500" fill="#384878"/></g><g transform="translate(150 2) scale(0.7)"><rect x="0" y="0" width="16" height="16" rx="1" fill="#4868b0" stroke="#283870" stroke-width="1"/><rect x="2.500" y="1" width="11" height="7.500" fill="#f4f4f8"/><rect x="2.500" y="1" width="11" height="1.600" fill="#e04848"/><path d="M3.500 4.500h9M3.500 6.500h9" stroke="#b8b8c8" stroke-width=".6"/><rect x="4" y="10.500" width="8" height="5" fill="#d0d4e0"/><rect x="5" y="11.500" width="2.500" height="3.500" fill="#384878"/></g><path d="M159 14l5-1.500 4.500 1.500v5.500l-4.500 2-5-2z" fill="#909090" stroke="#404040" stroke-width=".6"/><path d="M159 14l5 1.500 4.500-1.500M164 15.500v6" stroke="#404040" stroke-width=".6" fill="none"/><path d="M163 5q3-2 5 1l1-1v3.500h-3.500l1-1q-1.500-1.500-3-.5z" fill="#30b838"/><g transform="translate(172 0)" ><rect x="7" y="3" width="11" height="8" fill="#f4f8ff" stroke="#606880" stroke-width=".8"/><path d="M12.500 4.500l3 3h-2v2.500h-2V7.500h-2z" fill="#28b038"/><path d="M3 11h19l1.500 3v5H1.500v-5z" fill="#e4e8f0" stroke="#50586c" stroke-width=".9"/><rect x="4" y="16" width="17" height="3.500" fill="#b8c0d0" stroke="#50586c" stroke-width=".6"/></g><g transform="translate(195 0)" ><circle cx="12" cy="12" r="10" fill="#78a850" stroke="#5c8838" stroke-width="1"/><circle cx="11" cy="11" r="6" fill="url(#gLens)" stroke="#7888a8" stroke-width="1.300"/><path d="M15.500 15.500l5 5.500" stroke="#b0b4bc" stroke-width="2.600" stroke-linecap="round"/><path d="M11 7.500v4" stroke="#6080c0" stroke-width="1"/></g><g transform="translate(219 0)" ><path d="M3 10l7-6v3.500q9 0 9 8.500 0 2.500-1.500 4.500 0-8-7.500-8v3.500z" fill="#a8a8a8" stroke="#808080" stroke-width=".7"/></g><g transform="translate(266 0) scale(-1 1)"><path d="M3 10l7-6v3.500q9 0 9 8.500 0 2.500-1.500 4.500 0-8-7.500-8v3.500z" fill="#a8a8a8" stroke="#808080" stroke-width=".7"/></g><g transform="translate(267 0)" ><path d="M3 10l7-6v3.500q9 0 9 8.500 0 2.500-1.500 4.500 0-8-7.500-8v3.500z" fill="#88b0e8" stroke="#4070b8" stroke-width=".7" transform="translate(3 -1)"/><path d="M3 12h7M3 21h7M4 12.500q0 3.500 2.500 4-2.500.5-2.500 4M9 12.500q0 3.500-2.500 4 2.500.5 2.500 4" stroke="#806020" stroke-width="1.100" fill="#f8e8a0"/></g><path d="M295 10.500h7l-3.500 4z" fill="#000"/><path d="M295.500 8.500h6" stroke="#000" stroke-width="1"/><path d="M312.500 6v13" stroke="#a0a0a0" stroke-width="1"/></g><g transform="translate(21 66)" ><path d="M3 3h9l3 2h-9zM3 6h9l3 2h-9zM3 9h9l3 2h-9z" fill="#a8b8f0" stroke="#5060a8" stroke-width=".5"/><path d="M3 5.200h9l3 2M3 8.200h9l3 2" stroke="#f4f4ff" stroke-width="1" fill="none"/><ellipse cx="13" cy="17.500" rx="8" ry="5" fill="#c89860" stroke="#6c4420" stroke-width=".8"/><circle cx="9.500" cy="18.500" r="1.900" fill="#2050e0"/><circle cx="14" cy="19.500" r="1.900" fill="#18a828"/><circle cx="17.500" cy="17" r="1.700" fill="#e02020"/><path d="M21.500 2.500L14 14" stroke="#b06020" stroke-width="1.800" stroke-linecap="round"/><path d="M14.500 13l-1.500 3.500 2.800-2.500z" fill="#303030"/></g><g transform="translate(47 66)" ><path d="M11 1h8l3 3v12h-11z" fill="url(#gPage)" stroke="#282c40" stroke-width="1.200"/><path d="M4 5h8l3 3v10h-11z" fill="url(#gPage)" stroke="#282c40" stroke-width="1.200"/><rect x="6" y="8" width="7" height="6" fill="#4878d8"/><g transform="translate(0 11.5)" ><use href="#eye" x="0" y="0" /></g></g><g transform="translate(73 66)" ><use href="#eye" x="0" y="1" /><use href="#plusG" x="1" y="13.5" /><use href="#arrB" x="13" y="13.5" /></g><g transform="translate(98 66)" ><use href="#eye" x="0" y="1" /><use href="#minusY" x="1" y="16.5" /><use href="#arrB" x="13" y="13.5" /></g><g transform="translate(124 66)" ><use href="#eye" x="0" y="0" /><use href="#tl" x="3.5" y="10" fill="#f0c810"/><use href="#tl" x="15" y="10" fill="#e01818"/><circle cx="6.300" cy="19" r="1.900" fill="#18d018"/><circle cx="17.800" cy="19" r="1.900" fill="#f0c810"/><circle cx="17.800" cy="13.300" r="1.900" fill="#e01818"/><circle cx="6.300" cy="13.300" r="1.900" fill="#f0c810"/></g><g transform="translate(150 66)" ><use href="#eye" x="0" y="0" /><use href="#refreshGY" x="2.5" y="7.5" /></g><g transform="translate(176 66)" ><use href="#eye" x="0" y="1" /><use href="#plusG" x="1" y="11" /><path d="M8 23L13.500 13" stroke="#181818" stroke-width="1.300"/><use href="#minusY" x="13" y="20" /></g><g transform="translate(202 66)" ><use href="#eye" x="0" y="1" /><g transform="translate(7.5 12.5)" ><g transform="scale(1.150)"><use href="#plusG" x="0" y="0" /></g></g></g><g transform="translate(228 66)" ><use href="#eye" x="0" y="1" /><g transform="translate(8.5 16)" ><g transform="scale(1.200)"><use href="#minusY" x="0" y="0" /></g></g></g><g transform="translate(272 69)" ><use href="#refreshB" x="0" y="0" /></g><g transform="translate(298 66)" ><use href="#cylW" x="7" y="2" /></g><g transform="translate(324 66)" ><use href="#cylW" x="7" y="2" /></g><g transform="translate(350 66)" ><use href="#cylW" x="7" y="2" /></g><g transform="translate(376 66)" ><ellipse cx="16" cy="20.500" rx="5" ry="1.500" fill="#000" opacity=".35"/><path d="M7 6.500v12a5 2.300 0 0 0 10 0V6.500z" fill="url(#gBlueCyl)" stroke="#20d8f0" stroke-width="1.100"/><ellipse cx="12" cy="6.500" rx="5" ry="2.300" fill="#88b0ec" stroke="#20d8f0" stroke-width="1.100"/></g><rect x="401.500" y="66.500" width="23" height="23" fill="#fce078" stroke="#e8a830" stroke-width="1"/><g transform="translate(402 66)" ><ellipse cx="16" cy="20.500" rx="5" ry="1.500" fill="#000" opacity=".35"/><path d="M7 6.500v12a5 2.300 0 0 0 10 0V6.500z" fill="url(#gBlueCyl)" stroke="#101830" stroke-width="1.100"/><ellipse cx="12" cy="6.500" rx="5" ry="2.300" fill="#88b0ec" stroke="#101830" stroke-width="1.100"/></g><g transform="translate(428 66)" ><ellipse cx="16" cy="20.500" rx="5" ry="1.500" fill="#000" opacity=".25"/><path d="M7 6.500v12a5 2.300 0 0 0 10 0V6.500z" fill="#dce8f8" stroke="#30d8f0" stroke-width="1.100"/><ellipse cx="12" cy="6.500" rx="5" ry="2.300" fill="#eef4fc" stroke="#30d8f0" stroke-width="1.100"/><path d="M7 17.500a5 2.300 0 0 1 10 0" fill="none" stroke="#30d8f0" stroke-width=".7"/></g><g transform="translate(454 66)" ><ellipse cx="16" cy="20.500" rx="5" ry="1.500" fill="#000" opacity=".3"/><path d="M7 6.500v12a5 2.300 0 0 0 10 0V6.500z" fill="url(#gLtCyl)" stroke="#30384c" stroke-width="1"/><ellipse cx="12" cy="6.500" rx="5" ry="2.300" fill="#e8eefc" stroke="#30384c" stroke-width="1"/><path d="M7 17.500a5 2.300 0 0 1 10 0" fill="none" stroke="#8090b0" stroke-width=".6"/></g><g transform="translate(480 66)" ><path d="M7.500 6.500v12a4.500 2.200 0 0 0 9 0V6.500z" fill="#d8dce8" stroke="#181818" stroke-width="1.100"/><ellipse cx="12" cy="6.500" rx="4.500" ry="2.200" fill="#e8ecf4" stroke="#181818" stroke-width="1.100"/><path d="M9 7l3 13M15 7l-3 13M12 7.200l-3.500 12M12 7.200l3.500 12M7.500 12l4.500 8M16.500 12l-4.500 8" stroke="#181818" stroke-width=".7" fill="none"/></g><g transform="translate(506 66)" ><g transform="translate(-5 -2) scale(.85)"><ellipse cx="16" cy="20.500" rx="5" ry="1.500" fill="#000" opacity=".3"/><path d="M7 6.500v12a5 2.300 0 0 0 10 0V6.500z" fill="url(#gLtCyl)" stroke="#30384c" stroke-width="1"/><ellipse cx="12" cy="6.500" rx="5" ry="2.300" fill="#e8eefc" stroke="#30384c" stroke-width="1"/><path d="M7 17.500a5 2.300 0 0 1 10 0" fill="none" stroke="#8090b0" stroke-width=".6"/></g><g transform="translate(5 5) scale(.85)"><ellipse cx="16" cy="20.500" rx="5" ry="1.500" fill="#000" opacity=".35"/><path d="M7 6.500v12a5 2.300 0 0 0 10 0V6.500z" fill="url(#gBlueCyl)" stroke="#101830" stroke-width="1.100"/><ellipse cx="12" cy="6.500" rx="5" ry="2.300" fill="#88b0ec" stroke="#101830" stroke-width="1.100"/></g><path d="M13 2q4-2 6 1l1.500-1v4.500h-4.500l1.500-1.300q-1.500-1.800-3.500-.8z" fill="#30c030" stroke="#107010" stroke-width=".4"/><path d="M10 21q-3 1.500-5-1l-1.300 1v-4.200h4.300l-1.500 1.300q1.300 1.300 3 .8z" fill="#30c030" stroke="#107010" stroke-width=".4"/></g><g transform="translate(532 66)" ><g transform="translate(-4 -2) scale(.92)"><ellipse cx="16" cy="20.500" rx="5" ry="1.500" fill="#000" opacity=".35"/><path d="M7 6.500v12a5 2.300 0 0 0 10 0V6.500z" fill="url(#gBlueCyl)" stroke="#101830" stroke-width="1.100"/><ellipse cx="12" cy="6.500" rx="5" ry="2.300" fill="#88b0ec" stroke="#101830" stroke-width="1.100"/></g><g transform="translate(9 8) scale(.62)"><use href="#refreshB" x="0" y="0" /></g></g><g transform="translate(558 66)" ><rect x="2" y="3" width="19" height="14" fill="#3050a0" stroke="#8890a8" stroke-width="1.200"/><rect x="3.500" y="4.500" width="16" height="11" fill="#5878c8"/><g transform="translate(5 5)" ><g transform="scale(1.300)"><use href="#wrenchX" x="0" y="0" /></g></g></g><g transform="translate(600 66)" ><use href="#boxes" x="1" y="1" /><use href="#plusG" x="1" y="12" /><use href="#arrB" x="12" y="13" /></g><g transform="translate(626 66)" ><use href="#boxes" x="1" y="0" /><use href="#tl" x="3.5" y="9.5" fill="#f0c810"/><use href="#tl" x="15" y="9.5" fill="#e01818"/><circle cx="6.300" cy="18.500" r="1.900" fill="#18d018"/><circle cx="17.800" cy="18.500" r="1.900" fill="#f0c810"/><circle cx="17.800" cy="12.800" r="1.900" fill="#e01818"/><circle cx="6.300" cy="12.800" r="1.900" fill="#f0c810"/></g><g transform="translate(652 66)" ><use href="#boxes" x="1" y="0" /><use href="#refreshGY" x="2.5" y="7.5" /></g><g transform="translate(678 66)" ><use href="#boxes" x="1" y="0" /><use href="#plusG" x="1" y="11" /><path d="M8 23L13.500 13" stroke="#181818" stroke-width="1.300"/><use href="#minusY" x="13" y="20" /></g><g transform="translate(705 66)" ><ellipse cx="16" cy="20.500" rx="5" ry="1.500" fill="#000" opacity=".35"/><path d="M7 6.500v12a5 2.300 0 0 0 10 0V6.500z" fill="url(#gBlueCyl)" stroke="#101830" stroke-width="1.100"/><ellipse cx="12" cy="6.500" rx="5" ry="2.300" fill="#88b0ec" stroke="#101830" stroke-width="1.100"/><path d="M12 8v11" stroke="#fff" stroke-width="1.200" stroke-dasharray="2 2"/></g><g transform="translate(731 66)" ><ellipse cx="16" cy="20.500" rx="5" ry="1.500" fill="#000" opacity=".3"/><path d="M7 6.500v12a5 2.300 0 0 0 10 0V6.500z" fill="#b0b8d0" stroke="#202838" stroke-width="1.100"/><ellipse cx="12" cy="6.500" rx="5" ry="2.300" fill="#98a8d0" stroke="#202838" stroke-width="1.100"/><path d="M10.500 8v12M13.500 8v12" stroke="#f0e860" stroke-width="1.200"/></g><g transform="translate(758 66)" ><ellipse cx="16" cy="20.500" rx="5" ry="1.500" fill="#000" opacity=".25"/><path d="M7 6.500v12a5 2.300 0 0 0 10 0V6.500z" fill="#dce8f8" stroke="#30d8f0" stroke-width="1.100"/><ellipse cx="12" cy="6.500" rx="5" ry="2.300" fill="#eef4fc" stroke="#30d8f0" stroke-width="1.100"/><path d="M7 17.500a5 2.300 0 0 1 10 0" fill="none" stroke="#30d8f0" stroke-width=".7"/><path d="M8.500 13l3 4.500 5.500-9" stroke="#28b828" stroke-width="2.400" fill="none"/></g><g transform="translate(784 66)" ><path d="M2 19l8-3 2 3z" fill="#000" opacity=".35"/><ellipse cx="16" cy="20.500" rx="5" ry="1.500" fill="#000" opacity=".25"/><path d="M7 6.500v12a5 2.300 0 0 0 10 0V6.500z" fill="#dce8f8" stroke="#30d8f0" stroke-width="1.100"/><ellipse cx="12" cy="6.500" rx="5" ry="2.300" fill="#eef4fc" stroke="#30d8f0" stroke-width="1.100"/><path d="M7 17.500a5 2.300 0 0 1 10 0" fill="none" stroke="#30d8f0" stroke-width=".7"/><rect x="15.500" y="1" width="6.500" height="6.500" fill="#f0a040" stroke="#b06010" stroke-width=".8"/><rect x="17.500" y="3" width="2.500" height="2.500" fill="#fce8c0"/></g><g transform="translate(810 66)" ><path d="M7.500 6.500v12a4.500 2.200 0 0 0 9 0V6.500z" fill="#dcecfc" stroke="#5898e0" stroke-width="1"/><ellipse cx="12" cy="6.500" rx="4.500" ry="2.200" fill="#eef6ff" stroke="#5898e0" stroke-width="1"/><path d="M9 7l3 13M15 7l-3 13M12 7.200l-3.500 12M12 7.200l3.500 12" stroke="#5898e0" stroke-width=".7" fill="none"/></g><g transform="translate(835 66)" ><path d="M2 6l10-3.500 10 3.500-10 4z" fill="#6898e8" stroke="#102050" stroke-width=".9"/><path d="M2 6l10 4v11l-8-6z" fill="#2c58b8" stroke="#102050" stroke-width=".9"/><path d="M22 6l-10 4v11l8-6z" fill="#14307c" stroke="#102050" stroke-width=".9"/></g><g transform="translate(876 66)" ><path d="M1 2.500h4M3 .5v4M1 6.500h4" stroke="#181818" stroke-width="1"/><use href="#mag" x="5" y="2" /><path d="M10.500 6.500l5.500 3-5.500 3z" fill="#9cb4e0" stroke="#6880b0" stroke-width=".5"/><path d="M14 15l5-1.500 4 1.500v6l-4 2-5-2z" fill="#787878" stroke="#383838" stroke-width=".6"/><path d="M14 15l5 1.500 4-1.500M19 16.500v6.500" stroke="#383838" stroke-width=".6" fill="none"/></g><g transform="translate(902 66)" ><use href="#mag" x="5" y="2" /><path d="M10.500 6.500l5.500 3-5.500 3z" fill="#9cb4e0" stroke="#6880b0" stroke-width=".5"/><path d="M14 15l5-1.500 4 1.500v6l-4 2-5-2z" fill="#787878" stroke="#383838" stroke-width=".6"/><use href="#gcorner" x="1" y="1" /><use href="#gcorner" transform="translate(23 1) scale(-1 1)"/><use href="#gcorner" transform="translate(1 23) scale(1 -1)"/><use href="#gcorner" transform="translate(23 23) scale(-1 -1)"/></g><g transform="translate(928 66)" ><rect x="4.500" y="5.500" width="15" height="13" fill="url(#gPlane)" stroke="#181818" stroke-width="1.200"/><text x="12" y="15.500" font-family="Liberation Sans, sans-serif" font-size="8" font-weight="bold" text-anchor="middle" fill="#102080">1:1</text><use href="#gcorner" x="1" y="2" /><use href="#gcorner" transform="translate(23 2) scale(-1 1)"/><use href="#gcorner" transform="translate(1 22) scale(1 -1)"/><use href="#gcorner" transform="translate(23 22) scale(-1 -1)"/></g><g transform="translate(955 66)" ><path d="M5 19L17 7" stroke="#30b030" stroke-width="2.200"/><path d="M21 3l-8 2 6 6z" fill="#30b030" stroke="#107010" stroke-width=".5"/><circle cx="4.500" cy="19.500" r="2.600" fill="#c8c8c8" stroke="#484848" stroke-width=".8"/></g><g transform="translate(981 66)" ><path d="M4 11Q4 4 12 4l0-2.500 5 4-5 4V7Q7.500 7 7.500 11z" fill="#38b838" stroke="#0c6c0c" stroke-width=".7"/><path d="M20 13Q20 20 12 20l0 2.500-5-4 5-4V17Q16.500 17 16.500 13z" fill="#38b838" stroke="#0c6c0c" stroke-width=".7"/></g><g transform="translate(1007 66)" ><use href="#eye" x="0" y="0" /><circle cx="12" cy="16" r="6.500" fill="#f8d838" stroke="#b08810" stroke-width=".7"/><circle cx="9.800" cy="14.500" r=".9" fill="#403000"/><circle cx="14.200" cy="14.500" r=".9" fill="#403000"/><path d="M8.500 17.500q3.500 3 7 0" stroke="#604000" stroke-width=".8" fill="none"/></g><g transform="translate(1050 66)" ><use href="#axes" x="0" y="2" /></g><g transform="translate(1076 66)" ><g transform="translate(7 0) scale(.62)"><use href="#axes" x="0" y="0" /></g><path d="M3 19l8-8" stroke="#30b030" stroke-width="3"/><path d="M14 8l-7 1.500 5.500 5.500z" fill="#30b030" stroke="#106010" stroke-width=".5"/><path d="M3 19l8-8" stroke="#106010" stroke-width=".5" fill="none"/><rect x="10.500" y="17" width="8" height="5" fill="#d0d4e0" stroke="#787c88" stroke-width="1"/><circle cx="3.500" cy="20" r="2" fill="#c8c8c8" stroke="#505050" stroke-width=".6"/></g><g transform="translate(1102 66)" ><g transform="translate(9 0) scale(.62)"><use href="#axes" x="0" y="0" /></g><path d="M0 0L4.500 -3.200L4.500 -1.400L10 -1.400L10 1.400L4.500 1.400L4.500 3.200Z" fill="#30b830" stroke="#106010" stroke-width=".6" transform="translate(2 8) rotate(45)"/><path d="M0 0L4.500 -3.200L4.500 -1.400L10 -1.400L10 1.400L4.500 1.400L4.500 3.200Z" fill="#30b830" stroke="#106010" stroke-width=".6" transform="translate(11.500 22.500) rotate(225)"/></g><g transform="translate(1144 66)" ><rect x="2.5" y="3.0" width="6" height="5.700" fill="#10d0f0" stroke="#606060" stroke-width=".3"/><rect x="9.0" y="3.0" width="6" height="5.700" fill="#f8d800" stroke="#606060" stroke-width=".3"/><rect x="15.5" y="3.0" width="6" height="5.700" fill="#10e010" stroke="#606060" stroke-width=".3"/><rect x="2.5" y="9.2" width="6" height="5.700" fill="#f88000" stroke="#606060" stroke-width=".3"/><rect x="9.0" y="9.2" width="6" height="5.700" fill="#b06000" stroke="#606060" stroke-width=".3"/><rect x="15.5" y="9.2" width="6" height="5.700" fill="#f010e0" stroke="#606060" stroke-width=".3"/><rect x="2.5" y="15.4" width="6" height="5.700" fill="#1010e8" stroke="#606060" stroke-width=".3"/><rect x="9.0" y="15.4" width="6" height="5.700" fill="#10a030" stroke="#606060" stroke-width=".3"/><rect x="15.5" y="15.4" width="6" height="5.700" fill="#808080" stroke="#606060" stroke-width=".3"/></g><g transform="translate(1171 66)" ><rect x="3.500" y="2.500" width="16" height="19" fill="#dce8fc" stroke="#60688c" stroke-width="1"/><rect x="6" y="5" width="11" height="1.500" fill="#5898e8"/><rect x="6" y="7.500" width="11" height="1.500" fill="#f0c050"/><rect x="6" y="10" width="11" height="1.500" fill="#a0e090"/><rect x="7.0" y="12.5" width="3" height="2.500" fill="#10d0f0"/><rect x="10.3" y="12.5" width="3" height="2.500" fill="#f8d800"/><rect x="13.6" y="12.5" width="3" height="2.500" fill="#10e010"/><rect x="7.0" y="15.3" width="3" height="2.500" fill="#f88000"/><rect x="10.3" y="15.3" width="3" height="2.500" fill="#b06000"/><rect x="13.6" y="15.3" width="3" height="2.500" fill="#f010e0"/><rect x="7.0" y="18.1" width="3" height="2.500" fill="#1010e8"/><rect x="10.3" y="18.1" width="3" height="2.500" fill="#10a030"/><rect x="13.6" y="18.1" width="3" height="2.500" fill="#808080"/></g><g transform="translate(1197 66)" ><circle cx="12" cy="12" r="10" fill="#68a848" stroke="#587848" stroke-width="1.200"/><g transform="translate(5.5 5.5)" ><g transform="scale(.95)"><use href="#wrenchX" x="0" y="0" /></g></g></g><g transform="translate(1223 66)" ><rect x="2.500" y="2.500" width="19" height="19" fill="#c8dcf8" stroke="#48506c" stroke-width="1"/><rect x="2.500" y="2.500" width="19" height="4" fill="#4878c8"/><path d="M6 8.500v11" stroke="#b86820" stroke-width="1.600" stroke-dasharray="1.600 1.400"/><path d="M8 8.500h12" stroke="#b0b020" stroke-width="1.600" stroke-dasharray="1.600 1.400"/><g transform="translate(9 10)" ><g transform="scale(.72)"><use href="#wrenchX" x="0" y="0" /></g></g></g><g transform="translate(1250 66)" ><rect x="3" y="3" width="17" height="17" fill="none" stroke="#203878" stroke-width="1.600" stroke-dasharray="1.600 2.300"/><path d="M7 11l7-5 7 1v5l-6 1-2 3-3-2z" fill="#e8b070" stroke="#885020" stroke-width=".7"/><circle cx="7.500" cy="16.500" r="3" fill="#f8f040" stroke="#a8a010" stroke-width=".5"/><path d="M5.500 16.500h4M7.500 14.500v4" stroke="#2050e0" stroke-width="1.200"/></g><g transform="translate(1276 66)" ><path d="M3 19l4-13 15-3-4 14z" fill="#e8a0a8" stroke="#2050c8" stroke-width="1.600"/><path d="M6 9.500l14.500-3M5 13l14.500-3M4 16.500l14.500-3M10.500 5.500l-4 13M14 4.800l-4 13.200M18 4l-4 13.500" stroke="#e02828" stroke-width=".8" fill="none"/></g><g fill="#f4f6fb"><rect x="2" y="122" width="2" height="2"/><rect x="2" y="375" width="2" height="2"/><rect x="6" y="122" width="2" height="2"/><rect x="6" y="375" width="2" height="2"/><rect x="10" y="122" width="2" height="2"/><rect x="10" y="375" width="2" height="2"/><rect x="14" y="122" width="2" height="2"/><rect x="14" y="375" width="2" height="2"/><rect x="18" y="122" width="2" height="2"/><rect x="18" y="375" width="2" height="2"/><rect x="22" y="122" width="2" height="2"/><rect x="22" y="375" width="2" height="2"/><rect x="26" y="122" width="2" height="2"/><rect x="26" y="375" width="2" height="2"/><rect x="30" y="122" width="2" height="2"/><rect x="30" y="375" width="2" height="2"/><rect x="34" y="122" width="2" height="2"/><rect x="34" y="375" width="2" height="2"/><rect x="38" y="122" width="2" height="2"/><rect x="38" y="375" width="2" height="2"/><rect x="42" y="122" width="2" height="2"/><rect x="42" y="375" width="2" height="2"/><rect x="46" y="122" width="2" height="2"/><rect x="46" y="375" width="2" height="2"/><rect x="50" y="122" width="2" height="2"/><rect x="50" y="375" width="2" height="2"/><rect x="54" y="122" width="2" height="2"/><rect x="54" y="375" width="2" height="2"/></g><g fill="#a0a8c0"><rect x="3" y="123" width="1.500" height="1.500"/><rect x="3" y="376" width="1.500" height="1.500"/><rect x="7" y="123" width="1.500" height="1.500"/><rect x="7" y="376" width="1.500" height="1.500"/><rect x="11" y="123" width="1.500" height="1.500"/><rect x="11" y="376" width="1.500" height="1.500"/><rect x="15" y="123" width="1.500" height="1.500"/><rect x="15" y="376" width="1.500" height="1.500"/><rect x="19" y="123" width="1.500" height="1.500"/><rect x="19" y="376" width="1.500" height="1.500"/><rect x="23" y="123" width="1.500" height="1.500"/><rect x="23" y="376" width="1.500" height="1.500"/><rect x="27" y="123" width="1.500" height="1.500"/><rect x="27" y="376" width="1.500" height="1.500"/><rect x="31" y="123" width="1.500" height="1.500"/><rect x="31" y="376" width="1.500" height="1.500"/><rect x="35" y="123" width="1.500" height="1.500"/><rect x="35" y="376" width="1.500" height="1.500"/><rect x="39" y="123" width="1.500" height="1.500"/><rect x="39" y="376" width="1.500" height="1.500"/><rect x="43" y="123" width="1.500" height="1.500"/><rect x="43" y="376" width="1.500" height="1.500"/><rect x="47" y="123" width="1.500" height="1.500"/><rect x="47" y="376" width="1.500" height="1.500"/><rect x="51" y="123" width="1.500" height="1.500"/><rect x="51" y="376" width="1.500" height="1.500"/><rect x="55" y="123" width="1.500" height="1.500"/><rect x="55" y="376" width="1.500" height="1.500"/></g><g transform="translate(5 131)" ><circle cx="9" cy="8" r="5" fill="#dce4f4" stroke="#b0b8cc" stroke-width="1" opacity=".7"/><circle cx="11" cy="9" r="5" fill="#dce4f4" stroke="#a8b0c8" stroke-width="1" opacity=".8"/><use href="#mag" x="6" y="3" /><ellipse cx="13" cy="21" rx="8" ry="1.300" fill="#000" opacity=".2"/></g><g transform="translate(31.5 131)" ><path d="M5 4l14 14M9 3l11 16" stroke="#3878e0" stroke-width="1.400" stroke-dasharray="3 2"/><path d="M20 3L8 17" stroke="#d8a040" stroke-width="3.200"/><path d="M20 3L8 17" stroke="#a06818" stroke-width=".8" transform="translate(1.300 1)"/><path d="M21.500 1.200l-2.300 2.600 1.800 1.500 2-2.800z" fill="#e03030"/><path d="M6.200 19.500l1-3.800 2.400 2z" fill="#403020"/><ellipse cx="12" cy="20.500" rx="8" ry="1.500" fill="#000" opacity=".25"/><path d="M17 0h6l-3 3.500z" fill="#000"/></g><g transform="translate(5 157)" ><rect x="5.500" y="6.500" width="13" height="11" fill="url(#gPlane)" stroke="#505868" stroke-width="1.200"/><use href="#gcorner" x="1.5" y="2.5" /><use href="#gcorner" transform="translate(22.500 2.500) scale(-1 1)"/><use href="#gcorner" transform="translate(1.500 21.500) scale(1 -1)"/><use href="#gcorner" transform="translate(22.500 21.500) scale(-1 -1)"/></g><g transform="translate(31.5 157)" ><path d="M9 4.500Q2 3 3 9Q4 13 12 12Q21 11 21 16.500Q20 21.500 13 19.500" fill="none" stroke="#2868d8" stroke-width="1.800"/><path d="M20 3L8 17" stroke="#d8a040" stroke-width="3.200"/><path d="M20 3L8 17" stroke="#a06818" stroke-width=".8" transform="translate(1.300 1)"/><path d="M21.500 1.200l-2.300 2.600 1.800 1.500 2-2.800z" fill="#e03030"/><path d="M6.200 19.500l1-3.800 2.400 2z" fill="#403020"/><ellipse cx="12" cy="20.500" rx="8" ry="1.500" fill="#000" opacity=".25"/><path d="M17 0h6l-3 3.500z" fill="#000"/></g><g transform="translate(5 183)" ><path d="M1 3h4M3 1v4M1 7.500h4" stroke="#181818" stroke-width="1"/><use href="#mag" x="5" y="2.5" /><path d="M10.500 7l5.500 3-5.500 3z" fill="#9cb4e0" stroke="#6880b0" stroke-width=".5"/><path d="M13.500 14.500l5-1.500 4.500 1.500v6l-4.500 2-5-2z" fill="#787878" stroke="#383838" stroke-width=".6"/><path d="M13.500 14.500l5 1.500 4.500-1.500M18.500 16v6.500" stroke="#383838" stroke-width=".6" fill="none"/><path d="M17 0h6l-3 3.500z" fill="#000"/></g><g transform="translate(31.5 183)" ><path d="M3.500 4.500h16v8h-4v8h-12z" fill="#d6dbe9" stroke="#f0e800" stroke-width="1.800"/><path d="M6.500 12.500l3.500 5 6.500-10.500" stroke="#38c038" stroke-width="2.800" fill="none"/><path d="M17 0h6l-3 3.500z" fill="#000"/></g><g transform="translate(5 209)" ><use href="#axes" x="0" y="2" /><path d="M17 0h6l-3 3.500z" fill="#000"/></g><g transform="translate(31.5 209)" ><path d="M3 14Q3 3 8 4Q12 5 13 13Q14.500 21 19 20Q22 19 21 11" fill="none" stroke="#2868d8" stroke-width="1.800"/><path d="M20 3L8 17" stroke="#d8a040" stroke-width="3.200"/><path d="M20 3L8 17" stroke="#a06818" stroke-width=".8" transform="translate(1.300 1)"/><path d="M21.500 1.200l-2.300 2.600 1.800 1.500 2-2.800z" fill="#e03030"/><path d="M6.200 19.500l1-3.800 2.400 2z" fill="#403020"/><ellipse cx="12" cy="20.500" rx="8" ry="1.500" fill="#000" opacity=".25"/><path d="M17 0h6l-3 3.500z" fill="#000"/></g><g transform="translate(5 235)" ><path d="M3 3h9l3 2h-9zM3 6h9l3 2h-9zM3 9h9l3 2h-9z" fill="#a8b8f0" stroke="#5060a8" stroke-width=".5"/><path d="M3 5.200h9l3 2M3 8.200h9l3 2" stroke="#f4f4ff" stroke-width="1" fill="none"/><ellipse cx="13" cy="17.500" rx="8" ry="5" fill="#c89860" stroke="#6c4420" stroke-width=".8"/><circle cx="9.500" cy="18.500" r="1.900" fill="#2050e0"/><circle cx="14" cy="19.500" r="1.900" fill="#18a828"/><circle cx="17.500" cy="17" r="1.700" fill="#e02020"/><path d="M21.500 2.500L14 14" stroke="#b06020" stroke-width="1.800" stroke-linecap="round"/><path d="M17 0h6l-3 3.500z" fill="#000"/></g><g transform="translate(31.5 235)" ><path d="M2.500 21l5-14 14-4-4 15z" fill="#b8d8f8" stroke="#2058d0" stroke-width="1.600"/><path d="M10 6.500l-3.500 13.500M17 4.500l-4 14M5.500 13l14-3.500" stroke="#f4faff" stroke-width="1.300" fill="none"/><path d="M17 0h6l-3 3.500z" fill="#000"/></g><g transform="translate(6 264)" ><use href="#refreshB" x="0" y="0" /><path d="M16 -3h6l-3 3.500z" fill="#000"/></g><g transform="translate(31.5 261)" ><ellipse cx="15" cy="21" rx="8" ry="1.600" fill="#000" opacity=".3"/><path d="M3.500 7l8.500-3 8.500 3-8.500 3.500z" fill="#c8c8c0" stroke="#484848" stroke-width=".8"/><path d="M3.500 7l8.500 3.500v10.500l-8.500-4z" fill="#888880" stroke="#484848" stroke-width=".8"/><path d="M20.500 7l-8.500 3.500v10.500l8.500-4z" fill="#5c5c58" stroke="#484848" stroke-width=".8"/><path d="M17 0h6l-3 3.500z" fill="#000"/></g><g transform="translate(5 287)" ><ellipse cx="12" cy="21" rx="8" ry="1.600" fill="#000" opacity=".25"/><path d="M7.500 8Q7.500 3 12 3Q16.500 3 16.500 7Q16.500 9.500 13.500 11.500Q12 12.500 12 15" fill="none" stroke="#3c78d0" stroke-width="2.800"/><circle cx="12" cy="19" r="1.800" fill="#3c78d0"/><path d="M17 0h6l-3 3.500z" fill="#000"/></g><g transform="translate(31.5 287)" ><path d="M4.500 4v17M20.500 4v17" stroke="#383838" stroke-width="1.300"/><path d="M6 7.500h13" stroke="#e8e000" stroke-width="1.800"/><path d="M5 7.500l4-2.800v5.600zM20 7.500l-4-2.800v5.600z" fill="#f0e800" stroke="#908800" stroke-width=".4"/><path d="M17 0h6l-3 3.500z" fill="#000"/></g><g transform="translate(5 313)" ><ellipse cx="14" cy="21" rx="8" ry="1.600" fill="#000" opacity=".25"/><path d="M5 7l2 13.500q5 2 10 0l2-13.500z" fill="#a8d0f0" stroke="#4878a8" stroke-width=".9"/><ellipse cx="12" cy="7" rx="7.500" ry="2.200" fill="#c8e0f8" stroke="#4878a8" stroke-width=".9"/><path d="M10 4l2-2.500 2 2.500z" fill="#f0e020"/><path d="M9 11l6 7M15 11l-6 7" stroke="#d8f088" stroke-width="2"/><path d="M17 0h6l-3 3.500z" fill="#000"/></g><g transform="translate(31.5 313)" ><ellipse cx="13" cy="20.500" rx="8" ry="1.600" fill="#000" opacity=".2"/><path d="M3 9l8-6.500v4q9 0 9 8 0 3-2 5 0-7-7-7v4z" fill="#b0b0b0" stroke="#909090" stroke-width=".7"/><path d="M17 0h6l-3 3.500z" fill="#000"/></g><g transform="translate(5 339)" ><rect x="2" y="2" width="3.500" height="16" fill="#5878a8" stroke="#283858" stroke-width=".6"/><circle cx="13" cy="11" r="6" fill="none" stroke="#904828" stroke-width="1.400"/><path d="M13 2.500v17M4.500 11h17M7 5l12 12M19 5L7 17" stroke="#904828" stroke-width="1"/><circle cx="13" cy="11" r="1.800" fill="#f0b020"/><path d="M3 18l6-3 3 1.500 6-2.500 2 1-6 3-3-1-6 3.500z" fill="#f89018" stroke="#c86000" stroke-width=".5"/><path d="M5 21.500l13-6" stroke="#f89018" stroke-width="1.500"/><path d="M17 0h6l-3 3.500z" fill="#000"/></g><g transform="translate(31.5 339)" ><path d="M7 9h11l3 3v10H7z" fill="url(#gPage)" stroke="#181818" stroke-width="1.100"/><path d="M2 5h6l1.500 2h8v10H2z" fill="url(#gFolder)" stroke="#a87820" stroke-width=".7" transform="rotate(-8 10 11)"/><path d="M9 6Q11 1.500 15.500 3l.8-1.800 2.700 5-5.500 1 1-2Q12.500 4.500 11.500 7z" fill="#30b838" stroke="#107018" stroke-width=".5"/><rect x="9.500" y="17.500" width="5" height="3" fill="#f4f4f8" stroke="#606060" stroke-width=".5"/></g><rect x="64" y="113" width="24" height="24" fill="#8a8da6"/><g transform="translate(64 113)" ><rect x="3" y="4.500" width="18" height="3.400" fill="#5870a0"/><rect x="3" y="10.300" width="18" height="3.400" fill="#5870a0"/><rect x="3" y="16.100" width="18" height="3.400" fill="#5870a0"/></g><rect x="92" y="113" width="24" height="24" fill="#8a8da6"/><g transform="translate(92 113)" ><rect x="5.500" y="6.500" width="13" height="11" fill="url(#gPlane)" stroke="#404858" stroke-width="1"/><use href="#gcorner" x="1.5" y="2.5" /><use href="#gcorner" transform="translate(22.500 2.500) scale(-1 1)"/><use href="#gcorner" transform="translate(1.500 21.500) scale(1 -1)"/><use href="#gcorner" transform="translate(22.500 21.500) scale(-1 -1)"/></g><rect x="120" y="113" width="24" height="24" fill="#8a8da6"/><g transform="translate(120 113)" ><circle cx="9" cy="8.500" r="5" fill="#dce4f4" stroke="#b0b8cc" stroke-width="1" opacity=".6"/><circle cx="11" cy="9.500" r="5" fill="#dce4f4" stroke="#a8b0c8" stroke-width="1" opacity=".7"/><use href="#mag" x="6" y="3.5" /></g><rect x="148" y="113" width="24" height="24" fill="#8a8da6"/><g transform="translate(148 113)" ><g transform="translate(2 1) scale(.85)"><use href="#axes" x="0" y="2" /></g></g><rect x="176" y="113" width="24" height="24" fill="#8a8da6"/><g transform="translate(176 113)" ><path d="M12 2.500V13.500M12 13.500L3.500 17.500M12 13.500L20.500 17.500" fill="none" stroke="#000" stroke-width="1.200"/><path d="M3.5 6.5L12 2.5L20.5 6.5L12 10.5z" fill="#48e048"/><path d="M3.500 6.500L12 2.500l8.500 4v11L12 22l-8.500-4.500z" fill="none" stroke="#000" stroke-width="1.500" stroke-linejoin="round"/><path d="M3.500 6.500L12 10.500l8.500-4M12 10.500V22" fill="none" stroke="#000" stroke-width="1.400"/></g><rect x="204" y="113" width="24" height="24" fill="#8a8da6"/><g transform="translate(204 113)" ><path d="M12 2.500V13.500M12 13.500L3.500 17.500M12 13.500L20.500 17.500" fill="none" stroke="#000" stroke-width="1.200"/><path d="M3.5 17.5L12 13.5L20.5 17.5L12 22z" fill="#30d030"/><path d="M3.500 6.500L12 2.500l8.500 4v11L12 22l-8.500-4.500z" fill="none" stroke="#000" stroke-width="1.500" stroke-linejoin="round"/><path d="M3.500 6.500L12 10.500l8.500-4M12 10.500V22" fill="none" stroke="#000" stroke-width="1.400"/></g><rect x="232" y="113" width="24" height="24" fill="#8a8da6"/><g transform="translate(232 113)" ><path d="M12 2.500V13.500M12 13.500L3.500 17.500M12 13.500L20.500 17.500" fill="none" stroke="#000" stroke-width="1.200"/><path d="M3.5 6.5L12 2.5L12 13.5L3.5 17.5z" fill="#28c028"/><path d="M3.500 6.500L12 2.500l8.500 4v11L12 22l-8.500-4.500z" fill="none" stroke="#000" stroke-width="1.500" stroke-linejoin="round"/><path d="M3.500 6.500L12 10.500l8.500-4M12 10.500V22" fill="none" stroke="#000" stroke-width="1.400"/></g><rect x="260" y="113" width="24" height="24" fill="#8a8da6"/><g transform="translate(260 113)" ><path d="M12 2.500V13.500M12 13.500L3.500 17.500M12 13.500L20.500 17.500" fill="none" stroke="#000" stroke-width="1.200"/><path d="M12 10.5L20.5 6.5L20.5 17.5L12 22z" fill="#58e858"/><path d="M3.500 6.500L12 2.500l8.500 4v11L12 22l-8.500-4.500z" fill="none" stroke="#000" stroke-width="1.500" stroke-linejoin="round"/><path d="M3.500 6.500L12 10.500l8.500-4M12 10.500V22" fill="none" stroke="#000" stroke-width="1.400"/></g><rect x="288" y="113" width="24" height="24" fill="#8a8da6"/><g transform="translate(288 113)" ><path d="M12 2.500V13.500M12 13.500L3.500 17.500M12 13.500L20.500 17.500" fill="none" stroke="#000" stroke-width="1.200"/><path d="M3.5 6.5L12 10.5L12 22L3.5 17.5z" fill="#30d030"/><path d="M3.500 6.500L12 2.500l8.500 4v11L12 22l-8.500-4.500z" fill="none" stroke="#000" stroke-width="1.500" stroke-linejoin="round"/><path d="M3.500 6.500L12 10.500l8.500-4M12 10.500V22" fill="none" stroke="#000" stroke-width="1.400"/></g><rect x="316" y="113" width="24" height="24" fill="#8a8da6"/><g transform="translate(316 113)" ><path d="M12 2.500V13.500M12 13.500L3.500 17.500M12 13.500L20.500 17.500" fill="none" stroke="#000" stroke-width="1.200"/><path d="M12 2.5L20.5 6.5L20.5 17.5L12 13.5z" fill="#28c028"/><path d="M3.500 6.500L12 2.500l8.500 4v11L12 22l-8.500-4.500z" fill="none" stroke="#000" stroke-width="1.500" stroke-linejoin="round"/><path d="M3.500 6.500L12 10.500l8.500-4M12 10.500V22" fill="none" stroke="#000" stroke-width="1.400"/></g><rect x="344" y="113" width="24" height="24" fill="#8a8da6"/><g transform="translate(344 113)" ><path d="M3.5 6.5L12 2.5L20.5 6.5L12 10.5z" fill="#48e048"/><path d="M3.5 6.5L12 10.5L12 22L3.5 17.5z" fill="#30d030"/><path d="M12 10.5L20.5 6.5L20.5 17.5L12 22z" fill="#189818"/><path d="M3.500 6.500L12 2.500l8.500 4v11L12 22l-8.500-4.500z" fill="none" stroke="#0c8c0c" stroke-width="1"/><path d="M3.500 6.500L12 10.500l8.500-4M12 10.500V22" fill="none" stroke="#0c8c0c" stroke-width=".8"/></g><rect x="64" y="141" width="24" height="24" fill="#8a8da6"/><g transform="translate(64 141)" ><g transform="translate(0 1) scale(.92) translate(1 0)"><use href="#cylW" x="7" y="2" /></g></g><rect x="64" y="169" width="24" height="24" fill="#8a8da6"/><g transform="translate(64 169)" ><g transform="translate(0 1) scale(.92) translate(1 0)"><path d="M7 5v13.500a5 2.500 0 0 0 10 0V5" fill="none" stroke="#222" stroke-width="1.100"/><ellipse cx="12" cy="5" rx="5" ry="2.500" fill="none" stroke="#222" stroke-width="1.100"/></g></g><rect x="64" y="197" width="24" height="24" fill="#a89868" stroke="#e8c860" stroke-width="1"/><g transform="translate(64 197)" ><g transform="translate(0 1) scale(.92) translate(1 0)"><ellipse cx="16" cy="20.500" rx="5" ry="1.500" fill="#000" opacity=".35"/><path d="M7 6.500v12a5 2.300 0 0 0 10 0V6.500z" fill="url(#gBlueCyl)" stroke="#101830" stroke-width="1.100"/><ellipse cx="12" cy="6.500" rx="5" ry="2.300" fill="#88b0ec" stroke="#101830" stroke-width="1.100"/></g></g><rect x="64" y="225" width="24" height="24" fill="#8a8da6"/><g transform="translate(64 225)" ><g transform="translate(0 1) scale(.92) translate(1 0)"><ellipse cx="16" cy="20.500" rx="5" ry="1.500" fill="#000" opacity=".3"/><path d="M7 6.500v12a5 2.300 0 0 0 10 0V6.500z" fill="url(#gLtCyl)" stroke="#30384c" stroke-width="1"/><ellipse cx="12" cy="6.500" rx="5" ry="2.300" fill="#e8eefc" stroke="#30384c" stroke-width="1"/><path d="M7 17.500a5 2.300 0 0 1 10 0" fill="none" stroke="#8090b0" stroke-width=".6"/></g></g><rect x="64" y="253" width="24" height="24" fill="#8a8da6"/><g transform="translate(64 253)" ><g transform="translate(0 1) scale(.92) translate(1 0)"><path d="M7.500 6.500v12a4.500 2.200 0 0 0 9 0V6.500z" fill="#d8dce8" stroke="#181818" stroke-width="1.100"/><ellipse cx="12" cy="6.500" rx="4.500" ry="2.200" fill="#e8ecf4" stroke="#181818" stroke-width="1.100"/><path d="M9 7l3 13M15 7l-3 13M12 7.200l-3.500 12M12 7.200l3.500 12M7.500 12l4.500 8M16.500 12l-4.500 8" stroke="#181818" stroke-width=".7" fill="none"/></g></g></svg>
<div class="b" style="left:0;top:1000px;width:1920px;height:40px;background:#d6dbe9"></div>
<div class="b" style="left:2px;top:1020px;width:1916px;height:1px;background:#a0a4b0"></div>
<div class="b grip" style="left:1336px;top:1003px;height:16px"></div>
<div class="b" style="left:1341px;top:1003px;width:130px;height:17px;background:#fff"></div>
<div class="b" style="left:1462px;top:1005px;width:9px;height:9px;border:1.500px solid #3878d0;border-radius:50%;box-sizing:border-box"></div>
<div class="b grip" style="left:1476px;top:1003px;height:16px"></div>
<div class="t" style="left:1485px;top:1003px;font-size:12.3px;color:#000;height:17px;line-height:17px;">绝对 XY 上视图</div>
<div class="b" style="left:1592px;top:1004px;width:1px;height:15px;background:#9ca3b8"></div><div class="b" style="left:1593px;top:1004px;width:1px;height:15px;background:#f4f6fb"></div>
<div class="t" style="left:1601px;top:1003px;font-size:12.3px;color:#000;height:17px;line-height:17px;">绝对视图</div>
<div class="b grip" style="left:1655px;top:1003px;height:16px"></div>
<div class="t" style="left:1668px;top:1003px;font-size:12.5px;color:#000;height:17px;line-height:17px;font-weight:bold;letter-spacing:-0.300px;">LAYER0</div>
<div class="b" style="left:1726px;top:1004px;width:1px;height:15px;background:#9ca3b8"></div><div class="b" style="left:1727px;top:1004px;width:1px;height:15px;background:#f4f6fb"></div>
<div class="b" style="left:1757px;top:1004px;width:1px;height:15px;background:#9ca3b8"></div><div class="b" style="left:1758px;top:1004px;width:1px;height:15px;background:#f4f6fb"></div>
<div class="b" style="left:1800px;top:1004px;width:1px;height:15px;background:#9ca3b8"></div><div class="b" style="left:1801px;top:1004px;width:1px;height:15px;background:#f4f6fb"></div>
<div class="b" style="left:1843px;top:1004px;width:1px;height:15px;background:#9ca3b8"></div><div class="b" style="left:1844px;top:1004px;width:1px;height:15px;background:#f4f6fb"></div>
<div class="b" style="left:1886px;top:1004px;width:1px;height:15px;background:#9ca3b8"></div><div class="b" style="left:1887px;top:1004px;width:1px;height:15px;background:#f4f6fb"></div>
<div class="b" style="left:1762px;top:1005px;width:32px;height:13px;background:#45628c"></div>
<div class="b" style="left:1805px;top:1005px;width:32px;height:13px;background:#45628c"></div>
<div class="b" style="left:1848px;top:1005px;width:32px;height:13px;background:#45628c"></div>
<div class="b" style="left:1132px;top:1023px;width:1px;height:16px;background:#9ca3b8"></div><div class="b" style="left:1133px;top:1023px;width:1px;height:16px;background:#f4f6fb"></div>
<div class="t" style="left:1141px;top:1022px;font-size:12.3px;color:#000;height:18px;line-height:18px;">拴牢</div>
<div class="b" style="left:1175px;top:1023px;width:1px;height:16px;background:#9ca3b8"></div><div class="b" style="left:1176px;top:1023px;width:1px;height:16px;background:#f4f6fb"></div>
<div class="b" style="left:1206px;top:1023px;width:1px;height:16px;background:#9ca3b8"></div><div class="b" style="left:1207px;top:1023px;width:1px;height:16px;background:#f4f6fb"></div>
<div class="b" style="left:1237px;top:1023px;width:1px;height:16px;background:#9ca3b8"></div><div class="b" style="left:1238px;top:1023px;width:1px;height:16px;background:#f4f6fb"></div>
<div class="b" style="left:1268px;top:1023px;width:1px;height:16px;background:#9ca3b8"></div><div class="b" style="left:1269px;top:1023px;width:1px;height:16px;background:#f4f6fb"></div>
<div class="b" style="left:1299px;top:1023px;width:1px;height:16px;background:#9ca3b8"></div><div class="b" style="left:1300px;top:1023px;width:1px;height:16px;background:#f4f6fb"></div>
<div class="b" style="left:1330px;top:1023px;width:1px;height:16px;background:#9ca3b8"></div><div class="b" style="left:1331px;top:1023px;width:1px;height:16px;background:#f4f6fb"></div>
<div class="b" style="left:1361px;top:1023px;width:1px;height:16px;background:#9ca3b8"></div><div class="b" style="left:1362px;top:1023px;width:1px;height:16px;background:#f4f6fb"></div>
<div class="b" style="left:1392px;top:1023px;width:1px;height:16px;background:#9ca3b8"></div><div class="b" style="left:1393px;top:1023px;width:1px;height:16px;background:#f4f6fb"></div>
<div class="b" style="left:1423px;top:1023px;width:1px;height:16px;background:#9ca3b8"></div><div class="b" style="left:1424px;top:1023px;width:1px;height:16px;background:#f4f6fb"></div>
<div class="b" style="left:1454px;top:1023px;width:1px;height:16px;background:#9ca3b8"></div><div class="b" style="left:1455px;top:1023px;width:1px;height:16px;background:#f4f6fb"></div>
<div class="t" style="left:1463px;top:1022px;font-size:12.3px;color:#000;height:18px;line-height:18px;">LS: 1.00 PS: 1.00</div>
<div class="b" style="left:1580px;top:1023px;width:1px;height:16px;background:#9ca3b8"></div><div class="b" style="left:1581px;top:1023px;width:1px;height:16px;background:#f4f6fb"></div>
<div class="t" style="left:1589px;top:1022px;font-size:12.3px;color:#000;height:18px;line-height:18px;">单位: 毫米</div>
<div class="b" style="left:1654px;top:1023px;width:1px;height:16px;background:#9ca3b8"></div><div class="b" style="left:1655px;top:1023px;width:1px;height:16px;background:#f4f6fb"></div>
<div class="t" style="left:1663px;top:1022px;font-size:12.3px;color:#000;height:18px;line-height:18px;letter-spacing:0.250px;">X = 00046.88</div>
<div class="t" style="left:1744px;top:1022px;font-size:12.3px;color:#e81010;height:18px;line-height:18px;letter-spacing:0.250px;">Y =-16175.06</div>
<div class="t" style="left:1825px;top:1022px;font-size:12.3px;color:#000;height:18px;line-height:18px;letter-spacing:0.250px;">Z = 00000.00</div>
<svg class="b" style="left:0;top:0;pointer-events:none" width="1920" height="1048" viewBox="0 0 1920 1048"><rect x="1182.500" y="1023.500" width="16" height="16" fill="#d4c8d4" stroke="#505870" stroke-width="1"/><path d="M1186 1031q0-4 5-4h1v-1.800l3.500 3-3.500 3v-1.800h-1q-2.500 0-2.500 2zM1195.500 1032q0 4-5 4h-1v1.800l-3.500-3 3.500-3v1.800h1q2.500 0 2.500-2z" fill="#f06070" stroke="#c02030" stroke-width=".5"/><rect x="1212" y="1022" width="18" height="18" fill="#fce078"/><path d="M1216 1025l5 4 3-4.500 1 6 4 1-5 2z" fill="#e060d0" stroke="#8030a0" stroke-width=".5"/><path d="M1219 1029l8 8-2.500.5 1.500 2.500-1.500.8-1.500-2.700-2 1.500z" fill="#f4f4f4" stroke="#404040" stroke-width=".7"/><path d="M1246 1030l7-5 6 3-2 3h-9z" fill="#e8b070" stroke="#885020" stroke-width=".6"/><rect x="1247" y="1031" width="9" height="8" fill="#dce8fc" stroke="#5870a8" stroke-width=".7"/><path d="M1249 1034h5M1249 1036.500h5M1251.500 1032v6" stroke="#3860c0" stroke-width=".8"/><ellipse cx="1284" cy="1038.500" rx="6" ry="1.300" fill="#000" opacity=".25"/><path d="M1280 1028q0-4 4-4t4 3.500q0 2-2.500 3.500-1.500 1-1.500 3" fill="none" stroke="#3c78d0" stroke-width="2.400"/><circle cx="1284" cy="1037" r="1.500" fill="#3c78d0"/><path d="M1308 1026l4-1.500 4 1.500v4.500l-4 1.800-4-1.800z" fill="#5890e8" stroke="#203878" stroke-width=".6"/><path d="M1313 1031l4-1.500 4.500 1.500v5l-4.500 2-4-2z" fill="#90b0c8" stroke="#181818" stroke-width=".8"/><path d="M1313 1031l4 1.500 4.500-1.500M1317 1032.500v5.500" stroke="#181818" stroke-width=".7" fill="none"/><path d="M1305 1033.500h6m-2.500-2.500l3 2.500-3 2.500" stroke="#e81010" stroke-width="1.500" fill="none"/><rect x="1336" y="1022" width="18" height="18" fill="#fce078"/><path d="M1338 1027l7-3 7 3-7 3z" fill="#e040e0" stroke="#8010a0" stroke-width=".5"/><path d="M1338 1027l7 3v8.500l-7-3.500z" fill="#80a0b0" stroke="#2050c0" stroke-width=".8"/><path d="M1352 1027l-7 3v8.500l7-3.500z" fill="#a8c0b8" stroke="#2050c0" stroke-width=".8"/><rect x="1370" y="1026" width="10" height="11" fill="#e0e8e0" stroke="#406040" stroke-width="1"/><circle cx="1407" cy="1029" r="7.500" fill="#f4f8f4" stroke="#209020" stroke-width="1.800"/><circle cx="1407" cy="1030" r="2" fill="#2040a0"/><rect x="1431" y="1026" width="7" height="11" fill="#dcdce8" stroke="#505878" stroke-width="1"/><rect x="1439" y="1026" width="7" height="11" fill="#dcdce8" stroke="#505878" stroke-width="1"/><circle cx="1900.500" cy="1010.500" r="6.500" fill="#1838c0" stroke="#0c1c60" stroke-width=".6"/><path d="M1896 1007q3-3 5-1 1 2-1 3t-1 3q-2 1-3-2zM1903 1010q2-1 3 1-1 4-3 4-1-2 0-5z" fill="#38c030"/><circle cx="1898.500" cy="1008" r="1.500" fill="#fff" opacity=".5"/><rect x="1381.500" y="1009.500" width="184" height="22.500" rx="2" fill="#fff" stroke="#c8ccd8" stroke-width="1"/><g transform="rotate(-9 1373 1019.500)"><rect x="1360.500" y="1007" width="25" height="25" rx="5" fill="#f04818"/><path d="M1379.500 1013.500q-6-3.500-10.500-1.500t-1 5.500 7 2.500 3 4.500-11 1" fill="none" stroke="#fff" stroke-width="3.600" stroke-linecap="round"/></g><path d="M1394.500 1017h11.500v6.500h-11.500zM1400.200 1013.500v14.500" fill="none" stroke="#2a7ad8" stroke-width="2"/><circle cx="1418" cy="1017" r="1.300" fill="none" stroke="#2a7ad8" stroke-width="1"/><path d="M1424.500 1020.500q2 .5 1 3l-1.500 2.500" stroke="#2a7ad8" stroke-width="1.800" fill="none"/><circle cx="1425" cy="1021" r="1.300" fill="#2a7ad8"/><circle cx="1443.700" cy="1020.600" r="7" fill="none" stroke="#2a7ad8" stroke-width="1.600"/><path d="M1441.200 1016.500v3.500M1446.200 1016.500v3.500" stroke="#2a7ad8" stroke-width="1.600"/><path d="M1439.500 1022.500q4.200 4.500 8.400 0" stroke="#2a7ad8" stroke-width="1.500" fill="none"/><rect x="1463" y="1013" width="6" height="11" rx="3" fill="#2a7ad8"/><path d="M1460.500 1020.500q0 5.500 5.500 5.500t5.500-5.500M1466 1026v3M1463 1029h6" fill="none" stroke="#2a7ad8" stroke-width="1.400"/><rect x="1480" y="1015" width="16" height="11" rx="1.500" fill="#2a7ad8"/><path d="M1482 1017.500h12M1482 1020.200h12" stroke="#fff" stroke-width="1.300" stroke-dasharray="1.600 1"/><path d="M1484 1023.300h8" stroke="#fff" stroke-width="1.300"/><circle cx="1510.500" cy="1016.500" r="3" fill="#c0c8d8"/><path d="M1504.500 1027q0-6 6-6t6 6z" fill="#c0c8d8"/><rect x="1512" y="1022" width="6" height="5" rx="1" fill="#a8b0c4"/><text x="1513.500" y="1026.500" font-family="Liberation Sans, sans-serif" font-size="5" fill="#fff">7</text><path d="M1529 1014l-4 2.500 1.800 3.500 1.700-1v8.500h8v-8.500l1.700 1 1.800-3.500-4-2.500q-1.500 1.800-3.500 1.800t-3.500-1.800z" fill="#2a7ad8"/><rect x="1547" y="1014" width="6" height="6" fill="#2a7ad8"/><rect x="1554.700" y="1014.700" width="4.600" height="4.600" fill="none" stroke="#2a7ad8" stroke-width="1.400"/><rect x="1547" y="1021.500" width="6" height="6" fill="#2a7ad8"/><rect x="1554" y="1021.500" width="6" height="6" fill="#2a7ad8"/></svg>
<div class="b" style="left:0;top:1040px;width:1920px;height:8px;background:#1d1d1f"></div>
<div class="b" style="left:48px;top:1040px;width:344px;height:8px;background:#f2f2f2"></div>
<div class="b" style="left:589px;top:1040px;width:48.500px;height:8px;background:#a85c2a"></div>
<div class="b" style="left:638px;top:1040px;width:48px;height:8px;background:#4b4b4d"></div>
<div class="t" style="left:1817px;top:1042px;font-size:12px;color:#fff;height:14px;line-height:14px;">9:27</div>
</body></html>
